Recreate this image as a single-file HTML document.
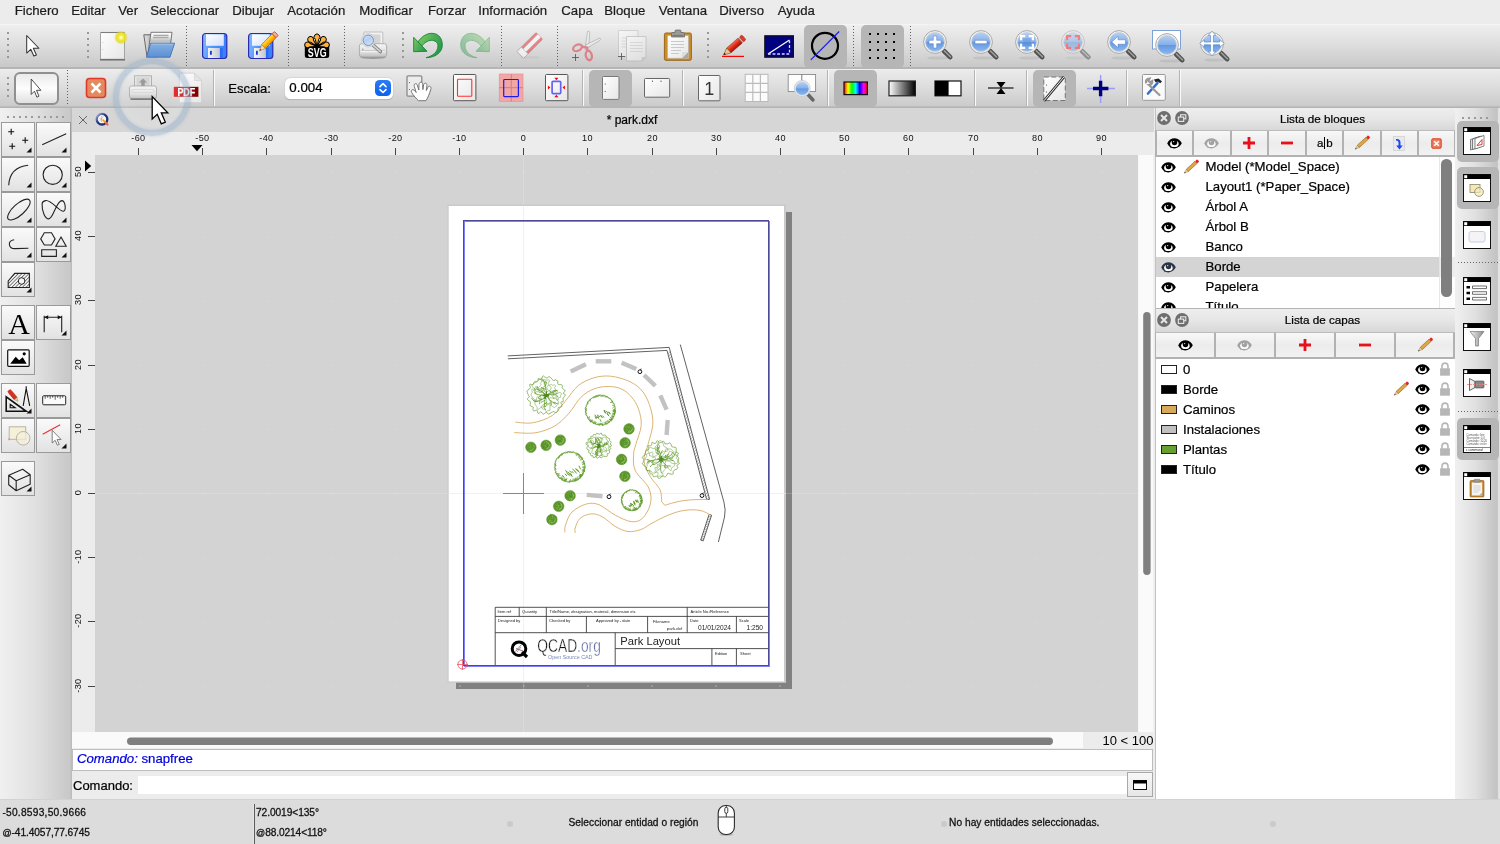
<!DOCTYPE html>
<html lang="es"><head><meta charset="utf-8"><title>QCAD - park.dxf</title>
<style>
html,body{margin:0;padding:0}
html{overflow:hidden;width:1500px;height:844px}
body{will-change:transform;width:1500px;height:844px;position:relative;overflow:hidden;background:#ececec;font-family:"Liberation Sans",sans-serif;font-size:13px;color:#000;-webkit-text-stroke:.22px currentColor}
.ic{position:absolute;display:block;overflow:visible}
#menubar{position:absolute;left:0;top:0;width:1500px;height:24px;background:#ececec}
#menubar span{position:absolute;top:3px;font-size:13.200px;line-height:15px;color:#1c1c1c;white-space:nowrap}
#tb1{position:absolute;left:0;top:24px;width:1500px;height:44.500px;background:linear-gradient(#f7f7f7 0,#eeeeee 1.500px,#dddddd 22px,#c9c9c9 42.500px,#b5b5b5 43.500px,#b5b5b5 44.500px)}
#tb2{position:absolute;left:0;top:68.500px;width:1500px;height:39px;background:linear-gradient(#f2f2f2 0,#ebebeb 1.200px,#dcdcdc 19px,#cbcbcb 37px,#b4b4b4 37.800px,#b4b4b4 39px)}
.vsep{position:absolute;width:1px;background:repeating-linear-gradient(#626262 0,#626262 1px,transparent 1px,transparent 3px)}
.ssep{position:absolute;width:1px;background:#fafafa;box-shadow:-1px 0 0 #b4b4b4}
.gd{position:absolute;width:2px;height:2px;background:#989898}
.gd2{position:absolute;width:2px;height:2px;background:#9a9a9a}
.hl{position:absolute;background:#b6b6b6;border-radius:5px}
#selbtn{position:absolute;left:14px;top:72px;width:45px;height:33px;box-sizing:border-box;border:2px solid #909090;border-radius:6px;background:linear-gradient(#eaeaea,#fdfdfd 50%,#e0e0e0)}
.lbl{position:absolute;font-size:13px;line-height:16px;white-space:nowrap}
#combo{position:absolute;left:284.500px;top:77.500px;width:108.500px;height:21px;background:#fff;border-radius:5.500px;box-shadow:0 0 0 .5px #cfcfcf,0 .5px 1px rgba(0,0,0,.25)}
#combo span{position:absolute;left:4.800px;top:2px;font-size:13.300px;line-height:16px}
#combobtn{position:absolute;right:2px;top:2.500px;width:16px;height:16px;border-radius:4.500px;background:linear-gradient(#2c7bf6,#0a62ee)}
#combobtn svg{display:block}
#left{position:absolute;left:0;top:108px;width:72px;height:691px;background:linear-gradient(90deg,#f0f0f0,#e0e0e0 50%,#c8c8c8 97%,#b8b8b8 100%)}
.tbtn{position:absolute;width:34.400px;height:34.400px;border:1px solid #9a9a9a;box-sizing:border-box;background:linear-gradient(#fafafa,#ececec 60%,#e2e2e2)}
.tbtn svg{display:block}
#tabbar{position:absolute;left:72px;top:108px;width:1082px;height:24px;background:#d6d6d6}
#tabbar span{position:absolute;left:0;width:1120px;top:5px;text-align:center;font-size:12px;line-height:14px}
#cv{position:absolute;display:block}
#cmdhist{position:absolute;left:72px;top:748.500px;width:1081px;height:22.500px;box-sizing:border-box;border:1px solid #bdbdbd;background:#fff;color:#0000e0;font-size:13.200px;line-height:17px;padding-left:4px;white-space:nowrap}
#cmdrow{position:absolute;left:72px;top:772px;width:1082px;height:27px;background:#ececec}
#cmdrow span{position:absolute;left:1px;top:5.500px;font-size:13px;line-height:16px}
#cmdin{position:absolute;left:66px;top:4px;width:989px;height:18px;background:#fff}
#cmdbtn{position:absolute;left:1055px;top:.3px;width:24.300px;height:23.200px;border:1px solid #a8a8a8;box-sizing:content-box;background:linear-gradient(#f8f8f8,#e6e6e6)}
#cmdbtn svg{position:absolute;left:5.300px;top:6.600px}
#status{position:absolute;left:0;top:798.600px;width:1500px;height:45.400px;background:#dcdcdc;border-top:1px solid #d2d2d2;box-sizing:border-box}
#status span{position:absolute;font-size:10.200px;line-height:12px;letter-spacing:.03px;white-space:nowrap;color:#111;-webkit-text-stroke:.28px #111;margin-top:-1.700px}
#status span.n{letter-spacing:.38px}
#status em{font-style:normal;font-size:9px;letter-spacing:0}
#status .sl{position:absolute;top:4px;width:1px;height:42px;background:#5a5a5a;box-shadow:-1px 0 0 #e6e6e6}
#status .dot{position:absolute;top:21px;width:6px;height:6px;border-radius:3px;background:#cacaca}
#rpanel{position:absolute;left:1155px;top:108px;width:299.500px;height:691px;background:#fff;border-left:1.100px solid #c2c2c2;box-sizing:border-box}
.ptitle{position:absolute;left:1155.500px;width:299px;height:22.500px;background:linear-gradient(#eeeeee,#e6e6e6 50%,#d8d8d8);border-bottom:1px solid #bcbcbc;box-sizing:border-box}
.ptitle span{position:absolute;left:36px;width:262px;text-align:center;top:4px;font-size:11.700px;line-height:14px}
.pbar{position:absolute;left:1155px;width:299.500px;height:27px;background:#b2b2b2}
.pbtn{position:absolute;height:24px;box-sizing:border-box;background:linear-gradient(#f8f8f8,#ececec 50%,#f2f2f2)}
.ab{position:absolute;width:18px;font-size:11.500px;line-height:15px;white-space:nowrap;letter-spacing:.2px}
.ab i{display:inline-block;width:1px;height:12px;background:#000;vertical-align:-2px;margin:0 .8px}
#blist{position:absolute;left:1155.500px;top:156.500px;width:299px;height:152.500px;background:#fff;overflow:hidden;border-bottom:1px solid #b4b4b4;box-sizing:border-box}
#blist2{position:absolute;left:1155.500px;top:156.500px;width:299px;height:151.500px;overflow:hidden}
.row{position:absolute;left:0;width:282px;height:20px}
.row.sel{background:#d4d4d4;width:299px}
.row span{position:absolute;top:2.600px;font-size:13.200px;line-height:16px;white-space:nowrap}
.vtrack{position:absolute;right:0;top:0;width:16px;height:152px;background:rgba(252,252,252,.62);border-left:1px solid rgba(225,225,225,.8);box-sizing:border-box}
.vthumb{position:absolute;left:285.800px;top:2.700px;width:10.400px;height:137.500px;border-radius:5.200px;background:#7f7f7f}
#llist{position:absolute;left:1155.500px;top:358.500px;width:299px;height:439.500px;background:#fff}
.sw{position:absolute;left:5.500px;top:5.800px;width:14px;height:7.300px;border:1px solid #222;box-sizing:content-box}
#fr{position:absolute;left:1454.500px;top:108px;width:45.500px;height:691px;background:linear-gradient(90deg,#f0f0f0,#e0e0e0 45%,#c2c2c2 94%,#e4e4e4 97%)}
.hdot{position:absolute;height:1px;background:repeating-linear-gradient(90deg,#666 0,#666 1px,transparent 1px,transparent 3px)}
#ring{position:absolute;left:112.500px;top:58px;width:78px;height:78px;border-radius:50%;box-sizing:border-box;border:6.200px solid rgba(128,158,190,.38);background:radial-gradient(circle,rgba(255,255,255,.10) 40%,rgba(240,245,250,.30) 100%);box-shadow:0 0 2.500px 1px rgba(135,162,192,.22),inset 0 0 3px 1px rgba(135,162,192,.22)}
</style></head>
<body>
<svg width="0" height="0" style="position:absolute"><defs>
<linearGradient id="paper" x1="0" y1="0" x2="1" y2="1"><stop offset="0" stop-color="#ffffff"/><stop offset="1" stop-color="#e6e6e6"/></linearGradient>
<radialGradient id="glow"><stop offset="0" stop-color="#ffffff"/><stop offset=".12" stop-color="#fffbd0"/><stop offset=".38" stop-color="#f4ea28"/><stop offset=".7" stop-color="#e8dc20" stop-opacity=".85"/><stop offset="1" stop-color="#e0d420" stop-opacity="0"/></radialGradient>
<linearGradient id="fback" x1="0" y1="0" x2="1" y2="0"><stop offset="0" stop-color="#e4e4e4"/><stop offset="1" stop-color="#8c8c8c"/></linearGradient>
<linearGradient id="fpaper" x1="0" y1="0" x2="0" y2="1"><stop offset="0" stop-color="#ffffff"/><stop offset=".22" stop-color="#e8e8e8"/><stop offset=".38" stop-color="#bcbcbc"/><stop offset=".55" stop-color="#f2f2f2"/><stop offset="1" stop-color="#d8d8d8"/></linearGradient>
<linearGradient id="folder" x1="0" y1="0" x2="0" y2="1"><stop offset="0" stop-color="#86b0e0"/><stop offset="1" stop-color="#5a90d6"/></linearGradient>
<linearGradient id="floppy" x1="0" y1="0" x2="1" y2="0.2"><stop offset="0" stop-color="#8ac0ff"/><stop offset=".5" stop-color="#4c94ff"/><stop offset="1" stop-color="#3a80fc"/></linearGradient>
<linearGradient id="flabel" x1="0" y1="0" x2="1" y2="1"><stop offset="0" stop-color="#ffffff"/><stop offset="1" stop-color="#d4e0f8"/></linearGradient>
<linearGradient id="fmetal" x1="0" y1="0" x2="1" y2="0"><stop offset="0" stop-color="#f4f4f4"/><stop offset="1" stop-color="#c4c8d4"/></linearGradient>
<linearGradient id="pencil" x1="0" y1="0" x2="1" y2="0"><stop offset="0" stop-color="#ffe060"/><stop offset=".45" stop-color="#ffc000"/><stop offset="1" stop-color="#f88a00"/></linearGradient>
<linearGradient id="pencilr" x1="0" y1="0" x2="1" y2="0"><stop offset="0" stop-color="#f86a50"/><stop offset=".5" stop-color="#e02a1a"/><stop offset="1" stop-color="#a01408"/></linearGradient>
<linearGradient id="printer" x1="0" y1="0" x2="0" y2="1"><stop offset="0" stop-color="#f4f4f4"/><stop offset=".6" stop-color="#e2e2e2"/><stop offset="1" stop-color="#bdbdbd"/></linearGradient>
<linearGradient id="green" x1="0" y1="0" x2="1" y2=".6"><stop offset="0" stop-color="#86cc62"/><stop offset=".5" stop-color="#52b058"/><stop offset="1" stop-color="#2a9a48"/></linearGradient>
<linearGradient id="lens" x1="0" y1="0" x2="0" y2="1"><stop offset="0" stop-color="#b6d0f2"/><stop offset=".48" stop-color="#86b0ea"/><stop offset=".52" stop-color="#6498de"/><stop offset="1" stop-color="#8cb8f0"/></linearGradient>
<linearGradient id="lens2" x1="0" y1="0" x2=".6" y2="1"><stop offset="0" stop-color="#dce8f8"/><stop offset=".5" stop-color="#b4cef0"/><stop offset="1" stop-color="#cfe0f6"/></linearGradient>
<linearGradient id="pdfred" x1="0" y1="0" x2="1" y2="0"><stop offset="0" stop-color="#e01010"/><stop offset="1" stop-color="#7a0000"/></linearGradient>
<linearGradient id="rainbow" x1="0" y1="0" x2="1" y2="0"><stop offset="0" stop-color="#ff0000"/><stop offset=".17" stop-color="#ffff00"/><stop offset=".34" stop-color="#00ff00"/><stop offset=".5" stop-color="#00ffff"/><stop offset=".67" stop-color="#0000ff"/><stop offset=".84" stop-color="#ff00ff"/><stop offset="1" stop-color="#ff0000"/></linearGradient>
<linearGradient id="gray" x1="0" y1="0" x2="1" y2="0"><stop offset="0" stop-color="#ffffff"/><stop offset="1" stop-color="#000000"/></linearGradient>
<linearGradient id="funnel" x1="0" y1="0" x2="1" y2="0"><stop offset="0" stop-color="#f0f0f0"/><stop offset="1" stop-color="#8a8a8a"/></linearGradient>
<linearGradient id="qring" x1="0" y1="0" x2="1" y2="1"><stop offset="0" stop-color="#a8b4d8"/><stop offset=".45" stop-color="#223680"/><stop offset="1" stop-color="#1a2c74"/></linearGradient>
<pattern id="hatch" width="2.500" height="2.500" patternUnits="userSpaceOnUse" patternTransform="rotate(-45)"><rect width="2.500" height="2.500" fill="#f4f4f4"/><path d="M0 1.250 h2.500" stroke="#333" stroke-width=".6"/></pattern>
</defs></svg>

<div id="menubar"><span style="left:14.7px">Fichero</span><span style="left:71.3px">Editar</span><span style="left:118.3px">Ver</span><span style="left:150.3px">Seleccionar</span><span style="left:232.3px">Dibujar</span><span style="left:287.3px">Acotación</span><span style="left:359.3px">Modificar</span><span style="left:428.0px">Forzar</span><span style="left:478.3px">Información</span><span style="left:561.3px">Capa</span><span style="left:604.3px">Bloque</span><span style="left:658.7px">Ventana</span><span style="left:719.3px">Diverso</span><span style="left:777.7px">Ayuda</span></div>

<div id="tb1"></div>
<div class="gd" style="left:7px;top:32px"></div><div class="gd" style="left:7px;top:38px"></div><div class="gd" style="left:7px;top:44px"></div><div class="gd" style="left:7px;top:50px"></div><div class="gd" style="left:7px;top:56px"></div><svg class="ic" style="left:25px;top:34px" width="16" height="24" viewBox="0 0 16 24" ><path d="M0 0 L0 15.5 L3.6 12.2 L6.3 18.2 L8.6 17.2 L5.9 11.3 L10.8 11.3 Z" fill="#fff" stroke="#333" stroke-width=".9" stroke-linejoin="round" transform="translate(1.7,1.5) scale(1.13)"/></svg><div class="gd" style="left:87px;top:32px"></div><div class="gd" style="left:87px;top:38px"></div><div class="gd" style="left:87px;top:44px"></div><div class="gd" style="left:87px;top:50px"></div><div class="gd" style="left:87px;top:56px"></div><svg class="ic" style="left:98px;top:30px" width="30" height="32" viewBox="0 0 30 32" ><rect x="2.500" y="2.500" width="24" height="27" rx="1" fill="url(#paper)" stroke="#a4a4a4" stroke-width="1"/><path d="M2.500 2.500 h24" stroke="#7e7e7e" stroke-width="1.100"/><path d="M2 29.700 h25" stroke="#707070" stroke-width="1.700"/><circle cx="4.800" cy="12.500" r=".5" fill="#bbb"/><circle cx="4.800" cy="19.500" r=".5" fill="#bbb"/><circle cx="23" cy="7.500" r="7" fill="url(#glow)"/></svg><svg class="ic" style="left:142px;top:30px" width="34" height="30" viewBox="0 0 34 30" ><path d="M1.800 4.800 h7.500 l1.300 1.700 h6 l-1 20.300 h-10.600 z" fill="url(#fback)" stroke="#5a5a5a" stroke-width=".9" stroke-linejoin="round"/><path d="M9 2.300 h21 l-2.800 23 h-21.500 z" fill="url(#fpaper)" stroke="#6a6a6a" stroke-width=".9" stroke-linejoin="round"/><path d="M11.500 5.500 h15 M11 7.700 h15.500" stroke="#a8a8a8" stroke-width="1.300"/><path d="M8.600 13.200 L32.600 13.200 L28 27.200 L4.500 27.200 Z" fill="url(#folder)" stroke="#3f6fb4" stroke-width=".9" stroke-linejoin="round"/><path d="M9.300 14.200 L31.300 14.200" stroke="#a8c8ee" stroke-width=".8"/></svg><div class="vsep" style="left:186px;top:26px;height:40px"></div><svg class="ic" style="left:201px;top:31px" width="28" height="30" viewBox="0 0 28 30" ><rect x="1.600" y="2.500" width="24.200" height="25" rx="3" fill="url(#floppy)" stroke="#2a2aae" stroke-width="1.200"/><rect x="5" y="3.300" width="17.800" height="11.500" fill="url(#flabel)"/><rect x="19" y="17" width="2.600" height="10" fill="#2a6cf4"/><rect x="7" y="17" width="11.800" height="10" fill="url(#fmetal)"/><rect x="9" y="19.700" width="1.800" height="4" rx=".5" fill="#1038d8"/><rect x="23.300" y="4.500" width="1" height="1.200" fill="#3a5ac0"/></svg><svg class="ic" style="left:247px;top:31px" width="28" height="30" viewBox="0 0 28 30" ><rect x="1.600" y="2.500" width="24.200" height="25" rx="3" fill="url(#floppy)" stroke="#2a2aae" stroke-width="1.200"/><rect x="5" y="3.300" width="17.800" height="11.500" fill="url(#flabel)"/><rect x="19" y="17" width="2.600" height="10" fill="#2a6cf4"/><rect x="7" y="17" width="11.800" height="10" fill="url(#fmetal)"/><rect x="9" y="19.700" width="1.800" height="4" rx=".5" fill="#1038d8"/><rect x="23.300" y="4.500" width="1" height="1.200" fill="#3a5ac0"/></svg><svg class="ic" style="left:256.5px;top:29px" width="22" height="26" viewBox="0 0 22 26" ><g transform="rotate(44 11 13) translate(0,-.5) scale(1,1.03)"><rect x="8.2" y="1.5" width="5.6" height="3.2" rx="1" fill="#f0b0a0" stroke="#c83018" stroke-width=".7"/><rect x="8.2" y="4.7" width="5.6" height="14.5" fill="url(#pencil)" stroke="#b04818" stroke-width=".6"/><path d="M8.2 19.2 L11 25 L13.8 19.2 Z" fill="#f3d9a8" stroke="#a05a00" stroke-width=".4"/><path d="M10.2 23.3 L11 25 L11.8 23.3 Z" fill="#222"/></g></svg><div class="vsep" style="left:288px;top:26px;height:40px"></div><svg class="ic" style="left:303px;top:32px" width="28" height="28" viewBox="0 0 28 28" ><path d="M4.300 11.800 h19.400 q2.500 0 2.500 2.500 v9.300 q0 2.500 -2.500 2.500 h-19.400 q-2.500 0 -2.500 -2.500 v-9.300 q0 -2.500 2.500 -2.500 z" fill="#000"/><g fill="#ffb13b" stroke="#000" stroke-width="1" stroke-linejoin="round"><g transform="rotate(-80 14 14.500)"><path d="M14 14.500 L12.300 7.300 a2.900 2.900 0 1 1 3.400 0 Z"/></g><g transform="rotate(80 14 14.500)"><path d="M14 14.500 L12.300 7.300 a2.900 2.900 0 1 1 3.400 0 Z"/></g><g transform="rotate(-42 14 14.500)"><path d="M14 14.500 L12.300 7.300 a2.900 2.900 0 1 1 3.400 0 Z"/></g><g transform="rotate(42 14 14.500)"><path d="M14 14.500 L12.300 7.300 a2.900 2.900 0 1 1 3.400 0 Z"/></g><g transform="rotate(0 14 14.500)"><path d="M14 14.500 L12.300 7.300 a2.900 2.900 0 1 1 3.400 0 Z"/></g></g><path d="M6.500 14.800 h15 v3 h-15 z" fill="#000"/><circle cx="14" cy="14.300" r="2.200" fill="#000"/><text x="14.200" y="24.700" text-anchor="middle" font-family="Liberation Sans,sans-serif" font-weight="bold" font-size="13" fill="#fff" textLength="18.700" lengthAdjust="spacingAndGlyphs">SVG</text></svg><div class="vsep" style="left:344px;top:26px;height:40px"></div><svg class="ic" style="left:357px;top:30px" width="32" height="30" viewBox="0 0 32 30" ><ellipse cx="16" cy="27.300" rx="12.500" ry="1.700" fill="#8a8a8a" opacity=".8"/><rect x="6.800" y="2" width="19" height="13" rx=".8" fill="#f2f2f2" stroke="#b4b4b4" stroke-width=".8"/><rect x="13.500" y="4.500" width="10" height="9" fill="#d4d4d4"/><path d="M2.400 16 q0 -2.300 2.300 -2.300 h22.600 q2.300 0 2.300 2.300 v8.700 q0 2.300 -2.300 2.300 h-22.600 q-2.300 0 -2.300 -2.300 z" fill="url(#printer)" stroke="#a2a2a2" stroke-width=".8"/><path d="M4 20.700 h24" stroke="#c4c4c4" stroke-width="1"/><path d="M4 21.600 h24" stroke="#fafafa" stroke-width=".8"/><circle cx="5.800" cy="19.200" r=".6" fill="#777"/><line x1="16" y1="15" x2="23.300" y2="21.500" stroke="#7a7a7a" stroke-width="3.600" stroke-linecap="round"/><line x1="16" y1="15" x2="23.300" y2="21.500" stroke="#d0d0d0" stroke-width="1.800" stroke-linecap="round"/><circle cx="11.300" cy="10.300" r="6.700" fill="#e9e9e9" stroke="#bdbdbd" stroke-width=".6"/><circle cx="11.300" cy="10.300" r="5.200" fill="url(#lens2)" stroke="#5a8ad2" stroke-width=".9"/></svg><div class="gd" style="left:402px;top:32px"></div><div class="gd" style="left:402px;top:38px"></div><div class="gd" style="left:402px;top:44px"></div><div class="gd" style="left:402px;top:50px"></div><div class="gd" style="left:402px;top:56px"></div><svg class="ic" style="left:412px;top:31px" width="32" height="30" viewBox="0 0 32 30" ><path d="M6 11 C10 5 15 2.300 20 2.300 C27 2.500 30.500 8 30.300 14.300 C30 22 23 26.500 14 26.700 C21 25 25.800 21 26 15 C26 11.500 23 9.300 19.300 9.300 C15.500 9.500 12 12 9.700 15 Z" fill="url(#green)" stroke="#12853a" stroke-width=".9" stroke-linejoin="round"/><path d="M1.700 6.300 L1.700 20.700 L15 20.300 Z" fill="url(#green)" stroke="#12853a" stroke-width=".9" stroke-linejoin="round"/></svg><svg class="ic" style="left:459px;top:31px" width="32" height="30" viewBox="0 0 32 30" ><g opacity=".42" transform="translate(32,0) scale(-1,1)"><path d="M6 11 C10 5 15 2.300 20 2.300 C27 2.500 30.500 8 30.300 14.300 C30 22 23 26.500 14 26.700 C21 25 25.800 21 26 15 C26 11.500 23 9.300 19.300 9.300 C15.500 9.500 12 12 9.700 15 Z" fill="url(#green)" stroke="#12853a" stroke-width=".9" stroke-linejoin="round"/><path d="M1.700 6.300 L1.700 20.700 L15 20.300 Z" fill="url(#green)" stroke="#12853a" stroke-width=".9" stroke-linejoin="round"/></g></svg><div class="vsep" style="left:501px;top:26px;height:40px"></div><svg class="ic" style="left:515px;top:31px" width="30" height="30" viewBox="0 0 30 30" ><ellipse cx="15" cy="26.5" rx="10" ry="1.6" fill="#c8c8c8" opacity=".8"/><g transform="rotate(-45 15 14.500)" opacity=".6"><rect x="1.5" y="9.5" width="27" height="9.5" rx="1.2" fill="#e04a55" stroke="#b33" stroke-width=".5"/><rect x="7" y="12.2" width="21.5" height="4" fill="#fff"/><rect x="1.5" y="9.5" width="6.2" height="9.5" fill="#fff" stroke="#999" stroke-width=".6"/></g></svg><div class="vsep" style="left:557px;top:26px;height:40px"></div><svg class="ic" style="left:570px;top:29px" width="32" height="33" viewBox="0 0 32 33" ><g opacity=".62"><path d="M17.5 2.5 q1.8 -1 2.2 1 L18.6 19 L15 20.5 Z" fill="#f4f4f4" stroke="#888" stroke-width=".7"/><path d="M30 9 q1.2 1.5 -.4 2.6 L17 19 L15.2 16.2 Z" fill="#f4f4f4" stroke="#888" stroke-width=".7"/><ellipse cx="7.5" cy="18.8" rx="4.6" ry="3" transform="rotate(-25 7.5 18.8)" fill="none" stroke="#e0525c" stroke-width="2.3"/><ellipse cx="18.8" cy="26.5" rx="3" ry="4.8" transform="rotate(-12 18.8 26.5)" fill="none" stroke="#e0525c" stroke-width="2.3"/><path d="M11 17.5 L17 18.5 L17.5 22" fill="none" stroke="#e0525c" stroke-width="2.3"/></g><path d="M2 28.500 h7 M5.500 25 v7" stroke="#5a5a5a" stroke-width=".9"/></svg><svg class="ic" style="left:616px;top:29px" width="32" height="33" viewBox="0 0 32 33" ><g opacity=".62"><path d="M2.5 1.5 h19.5 v21.5 l-4.5 4.5 h-15 z" fill="url(#paper)" stroke="#b5b5b5" stroke-width=".8"/><path d="M5.5 9 h13 M5.5 12 h13 M5.5 15 h13 M5.5 18 h9" stroke="#d0d0d0" stroke-width="1"/><path d="M10.5 7.5 h19.5 v21 l-4 3.5 h-15.5 z" fill="url(#paper)" stroke="#aaa" stroke-width=".8"/><path d="M14 13.5 h13 M14 16.5 h13 M14 19.500 h13 M14 22.5 h13" stroke="#d0d0d0" stroke-width="1"/><path d="M30 28.500 l-4 3.5 v-3.500 z" fill="#ccc" stroke="#aaa" stroke-width=".5"/></g><path d="M2 27.500 h7 M5.500 24 v7" stroke="#5a5a5a" stroke-width=".9"/></svg><svg class="ic" style="left:662px;top:29px" width="32" height="33" viewBox="0 0 32 33" ><rect x="2.400" y="4" width="27" height="27.300" rx="1.500" fill="#cc8c28" stroke="#94600e" stroke-width=".9"/><path d="M5.500 6.500 h21 v22.800 h-21 z" fill="url(#paper)" stroke="#b0b0b0" stroke-width=".6"/><path d="M9 12.5 h13 M9 15.5 h13 M9 18.5 h13 M9 21.5 h10 M9 24.5 h8" stroke="#c9c9c9" stroke-width="1.1"/><path d="M26 23 v6 h-6 z" fill="#aaa"/><path d="M20 29 l6 -6 h-6 z" fill="#ddd"/><path d="M9.5 8 v-3.500 q0 -1 1 -1 h2.500 v-1.500 q0 -1 1 -1 h4 q1 0 1 1 v1.500 h2.500 q1 0 1 1 v3.500 z" fill="#9a9a92" stroke="#666" stroke-width=".7"/><rect x="10.500" y="6" width="11" height="1.4" fill="#777"/></svg><div class="gd" style="left:707px;top:32px"></div><div class="gd" style="left:707px;top:38px"></div><div class="gd" style="left:707px;top:44px"></div><div class="gd" style="left:707px;top:50px"></div><div class="gd" style="left:707px;top:56px"></div><svg class="ic" style="left:720px;top:32px" width="26" height="27" viewBox="0 0 26 27" ><path d="M2 24.4 h22" stroke="#f00" stroke-width="1.2"/><g transform="translate(0,2.800) rotate(49 13 12)"><rect x="9.8" y="-2.500" width="6.4" height="3.600" rx="1.400" fill="#e03a2a" stroke="#8a1a10" stroke-width=".5"/><rect x="9.8" y="1.100" width="6.4" height="1.400" fill="#bbb"/><rect x="9.8" y="2.500" width="6.4" height="15" fill="url(#pencilr)" stroke="#7a1a0a" stroke-width=".5"/><path d="M9.8 17.500 L13 24.500 L16.200 17.500 Z" fill="#e8c48a" stroke="#6a3a10" stroke-width=".5"/><path d="M12 22.300 L13 24.500 L14 22.300 Z" fill="#111"/></g></svg><svg class="ic" style="left:763px;top:34px" width="32" height="25" viewBox="0 0 32 25" ><rect x="1.8" y="1.800" width="28.6" height="21.4" fill="#000080" stroke="#111" stroke-width="1.200"/><path d="M5 20 L26.500 6" stroke="#fff" stroke-width="1.300"/><path d="M5 20 H26.500 V6" fill="none" stroke="#d8d8ff" stroke-width="1.300" stroke-dasharray="2.800 1.800"/></svg><div class="hl" style="left:804px;top:25px;width:42.5px;height:43px"></div><svg class="ic" style="left:808px;top:30px" width="34" height="32" viewBox="0 0 34 32" ><circle cx="17" cy="15.800" r="13" fill="none" stroke="#000" stroke-width="2.200"/><path d="M2.800 29.800 L31.200 1.500" stroke="#1414ff" stroke-width="1.100"/></svg><div class="vsep" style="left:853px;top:26px;height:40px"></div><div class="hl" style="left:861px;top:25px;width:43px;height:43px"></div><svg class="ic" style="left:865px;top:30px" width="34" height="32" viewBox="0 0 34 32" ><rect x="4" y="3" width="2" height="2" fill="#000"/><rect x="4" y="11" width="2" height="2" fill="#000"/><rect x="4" y="19" width="2" height="2" fill="#000"/><rect x="4" y="27" width="2" height="2" fill="#000"/><rect x="12" y="3" width="2" height="2" fill="#000"/><rect x="12" y="11" width="2" height="2" fill="#000"/><rect x="12" y="19" width="2" height="2" fill="#000"/><rect x="12" y="27" width="2" height="2" fill="#000"/><rect x="20" y="3" width="2" height="2" fill="#000"/><rect x="20" y="11" width="2" height="2" fill="#000"/><rect x="20" y="19" width="2" height="2" fill="#000"/><rect x="20" y="27" width="2" height="2" fill="#000"/><rect x="28" y="3" width="2" height="2" fill="#000"/><rect x="28" y="11" width="2" height="2" fill="#000"/><rect x="28" y="19" width="2" height="2" fill="#000"/><rect x="28" y="27" width="2" height="2" fill="#000"/></svg><div class="vsep" style="left:910px;top:26px;height:40px"></div><svg class="ic" style="left:921.3px;top:27.6px" width="34" height="34" viewBox="0 0 34 34" ><g><ellipse cx="17" cy="30" rx="11" ry="1.600" fill="#9a9a9a" opacity=".28"/><line x1="23" y1="23" x2="29.200" y2="29.200" stroke="#505050" stroke-width="4.700" stroke-linecap="round"/><line x1="23.300" y1="22.900" x2="29.500" y2="28.900" stroke="#9c9c9c" stroke-width="1.500" stroke-linecap="round"/><circle cx="14" cy="14" r="11.400" fill="#f1f1ed" stroke="#a2a2a2" stroke-width=".9"/><circle cx="14" cy="14" r="9.500" fill="url(#lens)" stroke="#c9ced8" stroke-width=".8"/><path d="M12.300 8 h3.400 v4.300 h4.300 v3.400 h-4.300 v4.300 h-3.400 v-4.300 h-4.300 v-3.400 h4.300 z" fill="#fff" stroke="#4a78c0" stroke-width=".5"/></g></svg><svg class="ic" style="left:967.3px;top:27.6px" width="34" height="34" viewBox="0 0 34 34" ><g><ellipse cx="17" cy="30" rx="11" ry="1.600" fill="#9a9a9a" opacity=".28"/><line x1="23" y1="23" x2="29.200" y2="29.200" stroke="#505050" stroke-width="4.700" stroke-linecap="round"/><line x1="23.300" y1="22.900" x2="29.500" y2="28.900" stroke="#9c9c9c" stroke-width="1.500" stroke-linecap="round"/><circle cx="14" cy="14" r="11.400" fill="#f1f1ed" stroke="#a2a2a2" stroke-width=".9"/><circle cx="14" cy="14" r="9.500" fill="url(#lens)" stroke="#c9ced8" stroke-width=".8"/><path d="M8 12.300 h12 v3.400 h-12 z" fill="#fff" stroke="#4a78c0" stroke-width=".5"/></g></svg><svg class="ic" style="left:1013.3px;top:27.6px" width="34" height="34" viewBox="0 0 34 34" ><g><ellipse cx="17" cy="30" rx="11" ry="1.600" fill="#9a9a9a" opacity=".28"/><line x1="23" y1="23" x2="29.200" y2="29.200" stroke="#505050" stroke-width="4.700" stroke-linecap="round"/><line x1="23.300" y1="22.900" x2="29.500" y2="28.900" stroke="#9c9c9c" stroke-width="1.500" stroke-linecap="round"/><circle cx="14" cy="14" r="11.400" fill="#f1f1ed" stroke="#a2a2a2" stroke-width=".9"/><circle cx="14" cy="14" r="9.500" fill="url(#lens)" stroke="#c9ced8" stroke-width=".8"/><rect x="10.200" y="10.200" width="7.600" height="7.600" fill="#4a7fd0" opacity=".28"/><path d="M8.100 12.200 v-4.100 h4.100 M15.800 8.100 h4.100 v4.100 M19.900 15.800 v4.100 h-4.100 M12.200 19.900 h-4.100 v-4.100" fill="none" stroke="#fff" stroke-width="2.100"/></g></svg><svg class="ic" style="left:1059.3px;top:27.6px" width="34" height="34" viewBox="0 0 34 34" ><g opacity="0.55"><ellipse cx="17" cy="30" rx="11" ry="1.600" fill="#9a9a9a" opacity=".28"/><line x1="23" y1="23" x2="29.200" y2="29.200" stroke="#505050" stroke-width="4.700" stroke-linecap="round"/><line x1="23.300" y1="22.900" x2="29.500" y2="28.900" stroke="#9c9c9c" stroke-width="1.500" stroke-linecap="round"/><circle cx="14" cy="14" r="11.400" fill="#f1f1ed" stroke="#a2a2a2" stroke-width=".9"/><circle cx="14" cy="14" r="9.500" fill="url(#lens)" stroke="#c9ced8" stroke-width=".8"/><path d="M8.100 12.200 v-4.100 h4.100 M15.800 8.100 h4.100 v4.100 M19.900 15.800 v4.100 h-4.100 M12.200 19.900 h-4.100 v-4.100" fill="none" stroke="#ff2a2a" stroke-width="2.100"/></g></svg><svg class="ic" style="left:1105.3px;top:27.6px" width="34" height="34" viewBox="0 0 34 34" ><g><ellipse cx="17" cy="30" rx="11" ry="1.600" fill="#9a9a9a" opacity=".28"/><line x1="23" y1="23" x2="29.200" y2="29.200" stroke="#505050" stroke-width="4.700" stroke-linecap="round"/><line x1="23.300" y1="22.900" x2="29.500" y2="28.900" stroke="#9c9c9c" stroke-width="1.500" stroke-linecap="round"/><circle cx="14" cy="14" r="11.400" fill="#f1f1ed" stroke="#a2a2a2" stroke-width=".9"/><circle cx="14" cy="14" r="9.500" fill="url(#lens)" stroke="#c9ced8" stroke-width=".8"/><path d="M6.800 14 L13 8.300 V11.800 H20.500 V16.200 H13 V19.700 Z" fill="#fff" stroke="#4a78c0" stroke-width=".5"/></g></svg><svg class="ic" style="left:1151px;top:29px" width="32" height="20" viewBox="0 0 32 20" ><rect x="1.500" y="1.500" width="28" height="18.500" fill="#fff" stroke="#7da0d8" stroke-width="1"/></svg><svg class="ic" style="left:1152.6px;top:30.5px" width="34" height="34" viewBox="0 0 34 34" ><g><ellipse cx="17" cy="30" rx="11" ry="1.600" fill="#9a9a9a" opacity=".28"/><line x1="23" y1="23" x2="29.200" y2="29.200" stroke="#505050" stroke-width="4.700" stroke-linecap="round"/><line x1="23.300" y1="22.900" x2="29.500" y2="28.900" stroke="#9c9c9c" stroke-width="1.500" stroke-linecap="round"/><circle cx="14" cy="14" r="11.400" fill="#f1f1ed" stroke="#a2a2a2" stroke-width=".9"/><circle cx="14" cy="14" r="9.500" fill="url(#lens)" stroke="#c9ced8" stroke-width=".8"/></g></svg><svg class="ic" style="left:1198px;top:29.5px" width="34" height="34" viewBox="0 0 34 34" ><g><ellipse cx="17" cy="30" rx="11" ry="1.600" fill="#9a9a9a" opacity=".28"/><line x1="23" y1="23" x2="29.200" y2="29.200" stroke="#505050" stroke-width="4.700" stroke-linecap="round"/><line x1="23.300" y1="22.900" x2="29.500" y2="28.900" stroke="#9c9c9c" stroke-width="1.500" stroke-linecap="round"/><circle cx="14" cy="14" r="11.400" fill="#f1f1ed" stroke="#a2a2a2" stroke-width=".9"/><circle cx="14" cy="14" r="9.500" fill="url(#lens)" stroke="#c9ced8" stroke-width=".8"/><path transform="translate(14 14) scale(1.17) translate(-14 -14)" d="M14 3 l3.200 3.800 h-2 v5.500 h5.500 v-2 l3.800 3.200 l-3.800 3.200 v-2 h-5.500 v5.500 h2 l-3.200 3.800 l-3.200 -3.800 h2 v-5.500 h-5.500 v2 l-3.800 -3.200 l3.800 -3.200 v2 h5.500 v-5.500 h-2 z" fill="#fff" stroke="#4a78c0" stroke-width=".5"/></g></svg>
<div id="tb2"></div>
<div class="gd" style="left:7px;top:77px"></div><div class="gd" style="left:7px;top:83px"></div><div class="gd" style="left:7px;top:89px"></div><div class="gd" style="left:7px;top:95px"></div><div id="selbtn"></div><svg class="ic" style="left:30px;top:78px" width="14" height="22" viewBox="0 0 14 22" ><path d="M0 0 L0 15.5 L3.6 12.2 L6.3 18.2 L8.6 17.2 L5.9 11.3 L10.8 11.3 Z" fill="#fff" stroke="#333" stroke-width=".9" stroke-linejoin="round" transform="translate(1.200,1) scale(.9,1)"/></svg><div class="vsep" style="left:67px;top:70px;height:35px"></div><svg class="ic" style="left:85px;top:77px" width="22" height="22" viewBox="0 0 22 22" ><rect x="1.500" y="1.500" width="19" height="19" rx="3" fill="#e58a5c" stroke="#e0382c" stroke-width="1.600"/><path d="M6.500 6.500 L15.500 15.500 M15.500 6.500 L6.500 15.500" stroke="#fff" stroke-width="2.600" stroke-linecap="butt"/></svg><svg class="ic" style="left:128px;top:74px" width="30" height="28" viewBox="0 0 30 28" ><rect x="6.500" y="1.800" width="17" height="12" fill="#e2e2e2" stroke="#9a9a9a" stroke-width=".8"/><rect x="8.500" y="3.500" width="13" height="9" fill="#d0d0d0"/><path d="M15 4.500 l4 4 h-2.300 v3.500 h-3.400 v-3.500 h-2.300 z" fill="#8e8e8e"/><path d="M1.500 14 q0 -2 2 -2 h23 q2 0 2 2 v8.500 q0 2 -2 2 h-23 q-2 0 -2 -2 z" fill="url(#printer)" stroke="#9a9a9a" stroke-width=".8"/><rect x="4" y="15.800" width="22" height="2.200" rx=".6" fill="#fafafa" stroke="#aaa" stroke-width=".5"/><path d="M2.500 25.200 h25" stroke="#6a6a6a" stroke-width="1.500"/></svg><svg class="ic" style="left:172px;top:72px" width="32" height="32" viewBox="0 0 32 32" ><path d="M7.500 1.200 h15 l7 7 v22.300 h-22 z" fill="url(#paper)" stroke="#cfcfcf" stroke-width=".8"/><path d="M22.500 1.500 v7 h7 z" fill="#e4e4e4" stroke="#cfcfcf" stroke-width=".6"/><rect x="1.800" y="14.800" width="24.600" height="10" fill="url(#pdfred)"/><text x="14.300" y="23.800" text-anchor="middle" font-family="Liberation Sans,sans-serif" font-weight="bold" font-size="11" fill="#fff" stroke="#fff" stroke-width=".25" textLength="17.800" lengthAdjust="spacingAndGlyphs">PDF</text></svg><div class="ssep" style="left:213.5px;top:70px;height:36px"></div><div class="lbl" style="left:228.300px;top:81.300px;">Escala:</div><div id="combo"><span>0.004</span><div id="combobtn"><svg width="16" height="16" viewBox="0 0 16 16"><path d="M5 6.600 L8 3.700 L11 6.600 M5 9.600 L8 12.500 L11 9.600" fill="none" stroke="#fff" stroke-width="1.600" stroke-linecap="round" stroke-linejoin="round"/></svg></div></div><svg class="ic" style="left:405px;top:74px" width="28" height="29" viewBox="0 0 28 29" ><rect x="2" y="1.900" width="14.800" height="20.300" rx="1.200" fill="#ececec" stroke="#8a8a8a" stroke-width="1.300"/><circle cx="4.400" cy="8.600" r=".55" fill="#555"/><circle cx="4.400" cy="15.500" r=".55" fill="#555"/><path d="M13.500 26.700 C11 24.500 8.500 21.500 6.800 18.800 C5.800 17 6.500 15.500 8 15.700 C9.500 16 10.300 17.500 11.200 18.500 L9.300 12.500 C8.800 10.500 9.600 9.700 10.600 9.700 C11.800 9.700 12.300 10.700 12.600 12 L13.800 16 L14 10.500 C14 8.800 14.900 8.200 15.900 8.200 C17 8.200 17.600 9 17.700 10.500 L17.900 15.600 L18.600 10.800 C18.900 9.500 19.700 9 20.600 9.200 C21.700 9.500 22 10.500 21.900 11.800 L21.300 16.500 L22.800 13.500 C23.400 12.300 24.400 12 25.200 12.500 C26.100 13 26.200 14 25.800 15.300 C24.800 19 23 23.500 21 26.700 Z" fill="#fff" stroke="#707070" stroke-width=".95" stroke-linejoin="round"/></svg><svg class="ic" style="left:452.3px;top:73.3px" width="25.4" height="30.2" viewBox="0 0 25.4 30.2" ><rect x="1.500" y="1.500" width="22.4" height="26.2" rx="1" fill="url(#paper)" stroke="#555" stroke-width="1"/><rect x="5.500" y="6.300" width="14.300" height="16.900" rx=".8" fill="none" stroke="#ff3030" stroke-width="1.100"/></svg><svg class="ic" style="left:498px;top:73px" width="27" height="30" viewBox="0 0 27 30" ><rect x="1.200" y="1" width="23.800" height="27.500" fill="#f2a6a6" stroke="#e09090" stroke-width=".6"/><path d="M13.300 1 v27.500 M1.200 14.700 h23.800" stroke="#d98484" stroke-width="1.200"/><rect x="5.700" y="6.500" width="14.700" height="17.100" rx=".8" fill="none" stroke="#1c1cf0" stroke-width="1.200"/></svg><svg class="ic" style="left:544.3px;top:73.3px" width="25.4" height="30.2" viewBox="0 0 25.4 30.2" ><rect x="1.500" y="1.500" width="22.4" height="26.2" rx="1" fill="url(#paper)" stroke="#555" stroke-width="1"/><rect x="8.100" y="8.300" width="8.600" height="12.300" rx="1" fill="none" stroke="#6262fa" stroke-width="1.700"/><path d="M10.300 4.800 h4.200 l-2.100 2.400 z M10.300 24.200 h4.200 l-2.100 -2.400 z M3.900 12.400 v4.200 l2.400 -2.100 z M20.900 12.400 v4.200 l-2.400 -2.100 z" fill="#f00"/></svg><div class="ssep" style="left:583px;top:70px;height:36px"></div><div class="hl" style="left:588.8px;top:70.2px;width:42.9px;height:36.6px"></div><svg class="ic" style="left:600.7px;top:75.3px" width="19.5" height="26.9" viewBox="0 0 19.5 26.9" ><rect x="1.500" y="1.500" width="16.5" height="22.9" rx="1" fill="url(#paper)" stroke="#777" stroke-width="1"/><circle cx="4.200" cy="9" r=".6" fill="#444"/><circle cx="4.200" cy="16.500" r=".6" fill="#444"/></svg><svg class="ic" style="left:642.8px;top:77px" width="28.2" height="22.7" viewBox="0 0 28.2 22.7" ><rect x="1.500" y="1.500" width="25.2" height="18.7" rx="1" fill="url(#paper)" stroke="#666" stroke-width="1"/><circle cx="9.500" cy="4.200" r=".6" fill="#444"/><circle cx="18" cy="4.200" r=".6" fill="#444"/></svg><div class="ssep" style="left:683px;top:70px;height:36px"></div><svg class="ic" style="left:697.3px;top:74.2px" width="24.5" height="29.3" viewBox="0 0 24.5 29.3" ><rect x="1.500" y="1.500" width="21.5" height="25.3" rx="1" fill="url(#paper)" stroke="#666" stroke-width="1"/><text x="12.300" y="21.500" text-anchor="middle" font-family="Liberation Sans,sans-serif" font-size="18" fill="#333">1</text></svg><svg class="ic" style="left:743.5px;top:73px" width="26" height="30" viewBox="0 0 26 30" ><rect x="1.200" y="1.300" width="22.800" height="27.200" fill="#fbfbfb" stroke="#b9b9b9" stroke-width="1"/><path d="M8.800 1.300 v27.200 M16.400 1.300 v27.200 M1.200 10.400 h22.800 M1.200 19.400 h22.800" stroke="#bcbcbc" stroke-width="1.200"/></svg><svg class="ic" style="left:787px;top:73px" width="31" height="31" viewBox="0 0 31 31" ><rect x="1.200" y="1.500" width="13.700" height="17" fill="#fdfdfd" stroke="#8a8a8a" stroke-width=".9"/><rect x="14.900" y="1.500" width="13.700" height="17" fill="#fdfdfd" stroke="#8a8a8a" stroke-width=".9"/><line x1="20.500" y1="21" x2="26" y2="27" stroke="#666" stroke-width="3.400" stroke-linecap="round"/><circle cx="15.200" cy="15.500" r="8" fill="#e4e7ea" stroke="#c8c8c8" stroke-width=".8"/><circle cx="15.200" cy="15.500" r="6.500" fill="url(#lens)"/></svg><div class="ssep" style="left:828px;top:70px;height:36px"></div><div class="hl" style="left:834.2px;top:70.2px;width:42.5px;height:36.6px"></div><svg class="ic" style="left:843px;top:81px" width="26" height="15" viewBox="0 0 26 15" ><rect x="1" y="1" width="23.400" height="12.600" fill="url(#rainbow)" stroke="#111" stroke-width="1.200"/></svg><svg class="ic" style="left:888px;top:79.5px" width="29" height="17" viewBox="0 0 29 17" ><rect x="1" y="1" width="26.400" height="14.800" fill="url(#gray)" stroke="#222" stroke-width="1.200"/></svg><svg class="ic" style="left:934px;top:79.5px" width="29" height="17" viewBox="0 0 29 17" ><rect x="1" y="1" width="26" height="14.800" fill="#fff" stroke="#111" stroke-width="1.200"/><rect x="1" y="1" width="13.600" height="14.800" fill="#000"/></svg><div class="ssep" style="left:974.5px;top:70px;height:36px"></div><svg class="ic" style="left:986px;top:80px" width="30" height="17" viewBox="0 0 30 17" ><path d="M2 8 h25.500" stroke="#222" stroke-width="1.300"/><path d="M10.500 2 h9 l-4.500 6 z M10.500 14 h9 l-4.500 -6 z" fill="#000"/></svg><div class="ssep" style="left:1027px;top:70px;height:36px"></div><div class="hl" style="left:1032.8px;top:70.2px;width:42.9px;height:36.6px"></div><svg class="ic" style="left:1042px;top:75px" width="26" height="28" viewBox="0 0 26 28" ><rect x="1.800" y="2" width="21.500" height="23.500" fill="url(#paper)" stroke="#777" stroke-width="1" stroke-dasharray="5 2.500"/><circle cx="4.500" cy="10" r=".6" fill="#444"/><circle cx="4.500" cy="17" r=".6" fill="#444"/><path d="M2 25.800 L22 1.800" stroke="#333" stroke-width="2.800"/><path d="M2 25.800 L22 1.800" stroke="#eee" stroke-width="1"/></svg><svg class="ic" style="left:1086px;top:73.5px" width="30" height="30" viewBox="0 0 30 30" ><path d="M14.600 1 v28 M1 14.500 h28" stroke="#9a9aff" stroke-width="1.400"/><path d="M14.600 6.800 v15.400 M7 14.500 h15.400" stroke="#00007a" stroke-width="3.400"/></svg><div class="ssep" style="left:1126.7px;top:70px;height:36px"></div><svg class="ic" style="left:1141.2px;top:72.7px" width="25.8" height="29.8" viewBox="0 0 25.8 29.8" ><rect x="1.500" y="1.500" width="22.8" height="25.8" rx="1" fill="#fafafa" stroke="#999" stroke-width="1"/><path d="M7 20.500 L16.500 10" stroke="#2f6fd0" stroke-width="2.600" stroke-linecap="round"/><path d="M5 9.500 q-.5 -3.500 3.500 -4 l-1.200 2.300 l1.800 1.500 l2.200 -1.300 q.3 3.800 -3.300 4 L18.500 22" fill="none" stroke="#999" stroke-width="2.200" stroke-linecap="round"/><path d="M13 6.500 l4.500 -1 l3.500 3 l-1.800 1.800 l-2.200 -1.800 l-2.500 .8 z" fill="#222"/></svg><div class="ssep" style="left:1180px;top:70px;height:36px"></div>
<div id="left"></div><div class="gd2" style="left:7px;top:116px"></div><div class="gd2" style="left:13.1px;top:116px"></div><div class="gd2" style="left:19.2px;top:116px"></div><div class="gd2" style="left:25.3px;top:116px"></div><div class="gd2" style="left:31.4px;top:116px"></div><div class="gd2" style="left:37.5px;top:116px"></div><div class="gd2" style="left:43.6px;top:116px"></div><div class="gd2" style="left:49.7px;top:116px"></div><div class="gd2" style="left:55.8px;top:116px"></div><div class="gd2" style="left:61.9px;top:116px"></div><div class="tbtn" style="left:1.1px;top:122.3px"><svg width="32.4" height="32.4" viewBox="-0.200 -0.300 32.400 32.400"><path d="M6 8.500 h6 M9 5.500 v6 M20 17 h6 M23 14 v6 M7 23 h6 M10 20 v6" stroke="#111" stroke-width="1.100"/><path d="M29.300 24.300 v5 h-5 z" fill="#111"/></svg></div><div class="tbtn" style="left:36.3px;top:122.3px"><svg width="32.4" height="32.4" viewBox="-0.200 -0.300 32.400 32.400"><path d="M5 21.500 L29 10.500" fill="none" stroke="#222" stroke-width="1.100"/><path d="M29.300 24.300 v5 h-5 z" fill="#111"/></svg></div><div class="tbtn" style="left:1.1px;top:157.3px"><svg width="32.4" height="32.4" viewBox="-0.200 -0.300 32.400 32.400"><path d="M6.500 27 Q7.500 9 26 7" fill="none" stroke="#222" stroke-width="1.100"/><path d="M29.300 24.300 v5 h-5 z" fill="#111"/></svg></div><div class="tbtn" style="left:36.3px;top:157.3px"><svg width="32.4" height="32.4" viewBox="-0.200 -0.300 32.400 32.400"><circle cx="15.500" cy="16.500" r="9.600" fill="none" stroke="#222" stroke-width="1.100"/><path d="M29.300 24.300 v5 h-5 z" fill="#111"/></svg></div><div class="tbtn" style="left:1.1px;top:192.3px"><svg width="32.4" height="32.4" viewBox="-0.200 -0.300 32.400 32.400"><ellipse cx="16.700" cy="16.300" rx="14.300" ry="5.600" transform="rotate(-42 16.700 16.300)" fill="none" stroke="#222" stroke-width="1.100"/><path d="M29.300 24.300 v5 h-5 z" fill="#111"/></svg></div><div class="tbtn" style="left:36.3px;top:192.3px"><svg width="32.4" height="32.4" viewBox="-0.200 -0.300 32.400 32.400"><path d="M4.900 10.500 C4.500 18 8 25.600 11.600 25.600 C16 25.600 19 8 24.500 7.300 C28.300 7.300 29.200 17.300 26.300 18 C22.500 18.800 14 6.300 8.400 7.300 C6 7.800 5 9 4.900 10.500 Z" fill="none" stroke="#222" stroke-width="1.100"/><path d="M29.300 24.300 v5 h-5 z" fill="#111"/></svg></div><div class="tbtn" style="left:1.1px;top:227.3px"><svg width="32.4" height="32.4" viewBox="-0.200 -0.300 32.400 32.400"><path d="M12 11.500 Q6.500 12.500 7.200 16.500 Q8 20.500 13 20.300 L26.200 19.900" fill="none" stroke="#222" stroke-width="1.100"/><path d="M29.300 24.300 v5 h-5 z" fill="#111"/></svg></div><div class="tbtn" style="left:36.3px;top:227.3px"><svg width="32.4" height="32.4" viewBox="-0.200 -0.300 32.400 32.400"><path d="M7.100 4.500 h7.200 l3.600 6.100 l-3.600 6.100 h-7.200 l-3.600 -6.100 z M23.800 8.800 l5.200 9.100 h-10.400 z M4.500 21.400 h14.700 v6.700 h-14.700 z" fill="none" stroke="#222" stroke-width="1.100"/><path d="M29.300 24.300 v5 h-5 z" fill="#111"/></svg></div><div class="tbtn" style="left:1.1px;top:262.3px"><svg width="32.4" height="32.4" viewBox="-0.200 -0.300 32.400 32.400"><path d="M6 17.700 L12.500 10.100 H27.200 V24.200 H6 Z" fill="url(#hatch)" stroke="#222" stroke-width="1.100"/><circle cx="19.400" cy="17.700" r="3.300" fill="#f4f4f4" stroke="#222" stroke-width="1"/><path d="M29.300 24.300 v5 h-5 z" fill="#111"/></svg></div><div class="tbtn" style="left:1.1px;top:305.3px"><svg width="32.4" height="32.4" viewBox="-0.200 -0.300 32.400 32.400"><text x="17" y="28" text-anchor="middle" font-family="Liberation Serif,serif" font-size="30" fill="#000">A</text></svg></div><div class="tbtn" style="left:36.3px;top:305.3px"><svg width="32.4" height="32.4" viewBox="-0.200 -0.300 32.400 32.400"><path d="M7 9.500 v16.500 M24.500 9.500 v16.500 M7 11 h17.500" fill="none" stroke="#222" stroke-width="1.100"/><path d="M7 11 l4 -2 v4 z M24.500 11 l-4 -2 v4 z" fill="#111"/><path d="M29.300 24.300 v5 h-5 z" fill="#111"/></svg></div><div class="tbtn" style="left:1.1px;top:340.3px"><svg width="32.4" height="32.4" viewBox="-0.200 -0.300 32.400 32.400"><rect x="5.500" y="8.500" width="21.500" height="16.500" rx="1" fill="#fff" stroke="#111" stroke-width="1.200"/><path d="M8 22.500 L13.500 15.500 L17 19 L20.500 16 L24.500 22.500 Z" fill="#000"/><circle cx="22" cy="12.500" r="1.600" fill="#000"/></svg></div><div class="tbtn" style="left:1.1px;top:383.3px"><svg width="32.4" height="32.4" viewBox="-0.200 -0.300 32.400 32.400"><path d="M4 12.500 V27 H24 Z" fill="none" stroke="#111" stroke-width="1.600"/><path d="M8 20 V23.500 H13 Z" fill="none" stroke="#111" stroke-width="1.100"/><path d="M24 4 L21 21.500 M24 4 L27.500 21.500 M24 2 v3" stroke="#111" stroke-width="1.100" fill="none"/><g transform="translate(1.500,2) rotate(-40 12 10) scale(.88)"><rect x="9.800" y="1" width="4.400" height="2.600" rx=".8" fill="#d63020"/><rect x="9.800" y="3.600" width="4.400" height="9.500" fill="#d63020" stroke="#7a1408" stroke-width=".4"/><path d="M9.800 13.100 L12 17.500 L14.200 13.100 Z" fill="#e8c48a" stroke="#553" stroke-width=".3"/></g><path d="M29.300 24.300 v5 h-5 z" fill="#111"/></svg></div><div class="tbtn" style="left:36.3px;top:383.3px"><svg width="32.4" height="32.4" viewBox="-0.200 -0.300 32.400 32.400"><rect x="5.500" y="11.500" width="23" height="9" rx="1" fill="#fafafa" stroke="#222" stroke-width="1"/><path d="M8 11.500 v3 M10.500 11.500 v2 M13 11.500 v3 M15.500 11.500 v2 M18 11.500 v4 M20.500 11.500 v2 M23 11.500 v3 M25.500 11.500 v2" stroke="#222" stroke-width=".7"/></svg></div><div class="tbtn" style="left:1.1px;top:418.3px"><svg width="32.4" height="32.4" viewBox="-0.200 -0.300 32.400 32.400"><rect x="7" y="7.500" width="16.500" height="12.500" fill="#f5f0da" stroke="#b8b4a0" stroke-width="1"/><circle cx="21" cy="19" r="6.800" fill="#f5f0da" fill-opacity=".7" stroke="#b8b4a0" stroke-width="1"/><circle cx="7" cy="20" r="1.100" fill="#f88"/></svg></div><div class="tbtn" style="left:36.3px;top:418.3px"><svg width="32.4" height="32.4" viewBox="-0.200 -0.300 32.400 32.400"><path d="M5.500 15 L23 5.500" stroke="#f03030" stroke-width="1.200"/><path d="M0 0 L0 15.5 L3.6 12.2 L6.3 18.2 L8.6 17.2 L5.9 11.3 L10.8 11.3 Z" fill="#fff" stroke="#555" stroke-width=".9" transform="translate(15,11) scale(.82)"/><path d="M29.300 24.300 v5 h-5 z" fill="#111"/></svg></div><div class="tbtn" style="left:1.1px;top:461.3px"><svg width="32.4" height="32.4" viewBox="-0.200 -0.300 32.400 32.400"><path d="M6.500 13 L20.500 7 L28 12.500 V22 L14 28.500 L6.500 22.500 Z M6.500 13 L14 18.500 L28 12.500 M14 18.500 V28.500" fill="none" stroke="#222" stroke-width="1.100" stroke-linejoin="round"/><path d="M29.300 24.300 v5 h-5 z" fill="#111"/></svg></div>
<div id="tabbar"><span>* park.dxf</span></div><svg class="ic" style="left:78px;top:114.5px" width="10" height="10" viewBox="0 0 10 10" ><path d="M1 1 L9 9 M9 1 L1 9" stroke="#666" stroke-width="1"/></svg><svg class="ic" style="left:95px;top:112px" width="16" height="16" viewBox="0 0 16 16" ><circle cx="7" cy="7.200" r="5.300" fill="#f6f6f8" stroke="url(#qring)" stroke-width="2.300"/><path d="M4.500 9 L8.500 4.500 M4.300 6.500 L9 8.500 M6.500 4 V10" stroke="#c88" stroke-width=".5"/><path d="M7.300 7.300 l4.300 4.300" stroke="#f2a21a" stroke-width="1.900"/><path d="M7 7 l1.200 1.200" stroke="#f6d890" stroke-width="1.600"/><path d="M11.300 11.300 l1.300 1.300" stroke="#e85a5a" stroke-width="2" stroke-linecap="round"/></svg><div id="cmdhist"><i>Comando:</i> snapfree</div><div id="cmdrow"><span>Comando:</span><div id="cmdin"></div><div id="cmdbtn"><svg width="14" height="10" viewBox="0 0 14 10"><rect x=".5" y=".5" width="13" height="9" fill="#fff" stroke="#111"/><rect x=".5" y=".5" width="13" height="3" fill="#000"/></svg></div></div><div id="status"><span style="left:2.400px;top:9px;letter-spacing:.25px">-50.8593,50.9666</span><span style="left:2.400px;top:29px;letter-spacing:-.1px"><em>@</em>-41.4057,77.6745</span><i class="sl" style="left:253.500px"></i><span style="left:256px;top:9px;letter-spacing:-.08px">72.0019&lt;135°</span><span style="left:256px;top:29px;letter-spacing:-.12px"><em>@</em>88.0214&lt;118°</span><b class="dot" style="left:506.500px"></b><span style="left:568.500px;top:19px">Seleccionar entidad o región</span><svg style="position:absolute;left:716px;top:4.300px" width="21" height="34" viewBox="0 0 21 34"><ellipse cx="10.300" cy="30.500" rx="7" ry="1.500" fill="#b8b8b8"/><rect x="2.200" y="1.500" width="16.200" height="29" rx="7.500" fill="#fff" stroke="#2a2a2a" stroke-width="1.100"/><path d="M2.200 13 h16.200 M10.300 1.500 v11.500" stroke="#2a2a2a" stroke-width=".9"/><rect x="8.800" y="3.300" width="3" height="6" rx="1.500" fill="#fff" stroke="#2a2a2a" stroke-width=".9"/></svg><b class="dot" style="left:940.500px"></b><span style="left:949px;top:19px">No hay entidades seleccionadas.</span><b class="dot" style="left:1269.500px"></b></div>
<svg id="cv" style="left:72px;top:132px" width="1082" height="616" viewBox="72 132 1082 616"><rect x="72" y="132" width="1082" height="616" fill="#ececec"/><rect x="95" y="155" width="1043.200" height="577" fill="#d3d3d3"/><path d="M456 682.500 H786 V212 H792 V689 H456 Z" fill="#818181"/><path d="M138.5 686.0h1M138.5 622.0h1M138.5 558.0h1M138.5 493.0h1M138.5 429.0h1M138.5 365.0h1M138.5 301.0h1M138.5 237.0h1M138.5 172.0h1M202.5 686.0h1M202.5 622.0h1M202.5 558.0h1M202.5 493.0h1M202.5 429.0h1M202.5 365.0h1M202.5 301.0h1M202.5 237.0h1M202.5 172.0h1M266.5 686.0h1M266.5 622.0h1M266.5 558.0h1M266.5 493.0h1M266.5 429.0h1M266.5 365.0h1M266.5 301.0h1M266.5 237.0h1M266.5 172.0h1M330.5 686.0h1M330.5 622.0h1M330.5 558.0h1M330.5 493.0h1M330.5 429.0h1M330.5 365.0h1M330.5 301.0h1M330.5 237.0h1M330.5 172.0h1M394.5 686.0h1M394.5 622.0h1M394.5 558.0h1M394.5 493.0h1M394.5 429.0h1M394.5 365.0h1M394.5 301.0h1M394.5 237.0h1M394.5 172.0h1M459.5 686.0h1M459.5 622.0h1M459.5 558.0h1M459.5 493.0h1M459.5 429.0h1M459.5 365.0h1M459.5 301.0h1M459.5 237.0h1M459.5 172.0h1M523.5 686.0h1M523.5 622.0h1M523.5 558.0h1M523.5 493.0h1M523.5 429.0h1M523.5 365.0h1M523.5 301.0h1M523.5 237.0h1M523.5 172.0h1M587.5 686.0h1M587.5 622.0h1M587.5 558.0h1M587.5 493.0h1M587.5 429.0h1M587.5 365.0h1M587.5 301.0h1M587.5 237.0h1M587.5 172.0h1M651.5 686.0h1M651.5 622.0h1M651.5 558.0h1M651.5 493.0h1M651.5 429.0h1M651.5 365.0h1M651.5 301.0h1M651.5 237.0h1M651.5 172.0h1M715.5 686.0h1M715.5 622.0h1M715.5 558.0h1M715.5 493.0h1M715.5 429.0h1M715.5 365.0h1M715.5 301.0h1M715.5 237.0h1M715.5 172.0h1M779.5 686.0h1M779.5 622.0h1M779.5 558.0h1M779.5 493.0h1M779.5 429.0h1M779.5 365.0h1M779.5 301.0h1M779.5 237.0h1M779.5 172.0h1M844.5 686.0h1M844.5 622.0h1M844.5 558.0h1M844.5 493.0h1M844.5 429.0h1M844.5 365.0h1M844.5 301.0h1M844.5 237.0h1M844.5 172.0h1M908.5 686.0h1M908.5 622.0h1M908.5 558.0h1M908.5 493.0h1M908.5 429.0h1M908.5 365.0h1M908.5 301.0h1M908.5 237.0h1M908.5 172.0h1M972.5 686.0h1M972.5 622.0h1M972.5 558.0h1M972.5 493.0h1M972.5 429.0h1M972.5 365.0h1M972.5 301.0h1M972.5 237.0h1M972.5 172.0h1M1036.5 686.0h1M1036.5 622.0h1M1036.5 558.0h1M1036.5 493.0h1M1036.5 429.0h1M1036.5 365.0h1M1036.5 301.0h1M1036.5 237.0h1M1036.5 172.0h1M1101.5 686.0h1M1101.5 622.0h1M1101.5 558.0h1M1101.5 493.0h1M1101.5 429.0h1M1101.5 365.0h1M1101.5 301.0h1M1101.5 237.0h1M1101.5 172.0h1" stroke="#e2e2e2" stroke-width="1"/><rect x="447.400" y="204.500" width="338.600" height="478" fill="#cacaca"/><rect x="448.700" y="206" width="335.300" height="475.400" fill="#fff"/><path d="M95 493.500 H1138 M523.500 155 V732" stroke="#fff" stroke-opacity=".16" stroke-width="1"/><path d="M449 493.500 H785 M523.500 206 V681" stroke="#f1f1f1" stroke-width="1"/><rect x="464.500" y="221.500" width="305" height="445" fill="none" stroke="#8080fc" stroke-width="1"/><rect x="463.500" y="220.500" width="305" height="445" fill="none" stroke="#4a4a98" stroke-width="1"/><path d="M507.7 355.9 L669.2 347.4 L709.6 499.3" fill="none" stroke="#3a3a3a" stroke-width=".8"/><path d="M507.9 358.8 L667.0 350.4 L706.8 500.0" fill="none" stroke="#3a3a3a" stroke-width=".8"/><path d="M670.2 351.3 L668.0 354.1M670.9 353.8 L668.7 356.6M671.6 356.3 L669.3 359.2M672.2 358.8 L670.0 361.7M672.9 361.3 L670.7 364.2M673.6 363.8 L671.3 366.7M674.2 366.3 L672.0 369.2M674.9 368.9 L672.7 371.7M675.6 371.4 L673.3 374.2M676.2 373.9 L674.0 376.8M676.9 376.4 L674.7 379.3M677.6 378.9 L675.3 381.8M678.2 381.4 L676.0 384.3M678.9 383.9 L676.7 386.8M679.6 386.4 L677.3 389.3M680.3 389.0 L678.0 391.8M680.9 391.5 L678.7 394.3M681.6 394.0 L679.4 396.9M682.3 396.5 L680.0 399.4M682.9 399.0 L680.7 401.9M683.6 401.5 L681.4 404.4M684.3 404.0 L682.0 406.9M684.9 406.5 L682.7 409.4M685.6 409.1 L683.4 411.9M686.3 411.6 L684.0 414.4M686.9 414.1 L684.7 417.0M687.6 416.6 L685.4 419.5M688.3 419.1 L686.0 422.0M688.9 421.6 L686.7 424.5M689.6 424.1 L687.4 427.0M690.3 426.6 L688.0 429.5M690.9 429.2 L688.7 432.0M691.6 431.7 L689.4 434.5M692.3 434.2 L690.0 437.1M692.9 436.7 L690.7 439.6M693.6 439.2 L691.4 442.1M694.3 441.7 L692.0 444.6M695.0 444.2 L692.7 447.1M695.6 446.7 L693.4 449.6M696.3 449.3 L694.1 452.1M697.0 451.8 L694.7 454.6M697.6 454.3 L695.4 457.2M698.3 456.8 L696.1 459.7M699.0 459.3 L696.7 462.2M699.6 461.8 L697.4 464.7M700.3 464.3 L698.1 467.2M701.0 466.8 L698.7 469.7M701.6 469.4 L699.4 472.2M702.3 471.9 L700.1 474.7M703.0 474.4 L700.7 477.3M703.6 476.9 L701.4 479.8M704.3 479.4 L702.1 482.3M705.0 481.9 L702.7 484.8M705.6 484.4 L703.4 487.3M706.3 486.9 L704.1 489.8M707.0 489.5 L704.7 492.3M707.7 492.0 L705.4 494.8M708.3 494.5 L706.1 497.4M709.0 497.0 L706.8 499.9" stroke="#3a3a3a" stroke-width=".55" opacity=".75"/><path d="M711.3 516.2 L708.1 517.4M710.5 518.6 L707.3 519.9M709.7 521.1 L706.5 522.4M708.9 523.6 L705.7 524.8M708.1 526.0 L704.9 527.3M707.3 528.5 L704.1 529.8M706.4 531.0 L703.3 532.3M705.6 533.4 L702.5 534.7M704.8 535.9 L701.7 537.2M704.0 538.4 L700.9 539.7" stroke="#3a3a3a" stroke-width=".55" opacity=".75"/><path d="M706.7 499.6 L709.6 499.3" stroke="#3a3a3a" stroke-width=".8"/><path d="M711.6 515.2 L703.2 540.9" fill="none" stroke="#3a3a3a" stroke-width=".8"/><path d="M709.1 514.4 L700.7 540.1" fill="none" stroke="#3a3a3a" stroke-width=".8"/><path d="M711.600 515.200 l-2.500 -.8 M703.200 540.900 l-2.500 -.8" stroke="#3a3a3a" stroke-width=".8"/><path d="M680.3 344.600 L724 502.400 Q726 510 724.500 517 L718.400 542" fill="none" stroke="#3a3a3a" stroke-width=".8"/><path d="M570.7 371.4 L585.9 364.3" stroke="#c2c2c2" stroke-width="4.400" stroke-linejoin="round"/><path d="M595.7 361.3 L611.3 361.3" stroke="#c2c2c2" stroke-width="4.400" stroke-linejoin="round"/><path d="M621.6 362.7 L636.3 369.0" stroke="#c2c2c2" stroke-width="4.400" stroke-linejoin="round"/><path d="M644.0 375.0 L655.4 385.9" stroke="#c2c2c2" stroke-width="4.400" stroke-linejoin="round"/><path d="M660.3 395.4 L666.6 409.6" stroke="#c2c2c2" stroke-width="4.400" stroke-linejoin="round"/><path d="M667.7 420.0 L666.6 435.0" stroke="#c2c2c2" stroke-width="4.400" stroke-linejoin="round"/><path d="M586.7 494.9 L602.5 496.2" stroke="#c2c2c2" stroke-width="4.400" stroke-linejoin="round"/><path d="M515.3 422.1 C518.2 422.2 526.5 423.9 532.6 422.8 C538.8 421.7 546.8 419.2 552.2 415.6 C557.6 412.0 560.9 406.3 565.2 401.3 C569.5 396.3 573.4 389.5 578.2 385.6 C583.0 381.7 588.5 379.4 593.9 377.8 C599.3 376.2 604.8 375.6 610.8 376.2 C616.8 376.8 624.6 379.1 630.0 381.7 C635.4 384.3 639.5 387.4 643.0 392.0 C646.5 396.6 649.2 403.4 650.8 409.0 C652.4 414.6 653.2 419.5 652.7 425.4 C652.2 431.3 649.5 438.5 648.0 444.4 C646.5 450.3 643.6 455.4 644.0 460.8 C644.4 466.2 647.7 472.0 650.4 476.8 C653.1 481.6 658.1 485.5 660.0 489.6 C661.9 493.7 661.3 499.5 661.6 501.5 L664.800 505.300" fill="none" stroke="#d8ab62" stroke-width=".9"/><path d="M664.8 505.3 C666.3 504.9 670.8 503.4 674.0 502.6 C677.2 501.8 680.3 501.0 684.0 500.5 C687.7 500.0 692.0 499.8 696.0 499.6 C700.0 499.4 706.0 499.5 708.0 499.5" fill="none" stroke="#d8ab62" stroke-width=".9"/><path d="M514.3 432.6 C517.8 432.6 528.5 433.9 535.2 432.8 C542.0 431.7 549.1 429.3 554.8 426.0 C560.4 422.7 564.8 417.8 569.1 413.0 C573.4 408.2 576.7 401.4 580.8 397.4 C584.9 393.4 589.3 390.7 593.9 388.9 C598.5 387.1 603.6 386.5 608.2 386.5 C612.8 386.5 617.4 387.1 621.3 388.9 C625.2 390.6 628.6 393.6 631.5 397.0 C634.4 400.4 636.9 404.3 638.5 409.0 C640.1 413.7 641.7 419.5 641.2 425.4 C640.8 431.3 637.1 439.6 635.8 444.4 C634.5 449.2 633.7 450.1 633.6 454.4 C633.5 458.7 632.7 464.8 635.2 470.4 C637.7 476.0 646.3 482.4 648.8 488.0 C651.3 493.6 651.5 498.9 650.4 504.0 C649.3 509.1 645.6 515.5 642.4 518.4 C639.2 521.3 635.7 522.1 631.2 521.6 C626.7 521.1 620.5 518.0 615.2 515.2 C609.9 512.4 604.0 506.7 599.2 504.8 C594.4 502.9 590.9 502.8 586.4 504.0 C581.9 505.2 575.5 508.5 572.0 512.0 C568.5 515.5 566.8 521.4 565.6 524.8 C564.4 528.2 564.9 531.2 564.8 532.5" fill="none" stroke="#d8ab62" stroke-width=".9"/><path d="M711.2 515.2 C709.3 514.4 704.5 511.2 700.0 510.4 C695.5 509.6 689.3 509.6 684.0 510.4 C678.7 511.2 673.3 513.1 668.0 515.2 C662.7 517.3 656.5 520.8 652.0 523.2 C647.5 525.6 644.8 528.2 640.8 529.6 C636.8 531.0 632.3 532.0 628.0 531.5 C623.7 531.0 619.5 528.9 615.2 526.4 C610.9 523.9 606.4 518.9 602.4 516.8 C598.4 514.7 594.9 513.6 591.2 513.9 C587.5 514.2 582.7 516.0 580.0 518.4 C577.3 520.8 576.0 525.6 575.2 528.0 C574.4 530.4 575.2 532.2 575.2 533.0" fill="none" stroke="#d8ab62" stroke-width=".9"/><path d="M565.3 395.6 C565.2 396.0 564.7 396.3 564.3 396.6 C564.0 397.0 563.4 397.2 563.2 397.6 C563.0 397.9 563.0 398.2 563.0 398.5 C563.0 398.9 563.1 399.2 563.1 399.6 C563.2 399.9 563.3 400.3 563.3 400.6 C563.3 401.0 563.4 401.4 563.1 401.7 C562.7 401.9 561.6 401.8 561.2 402.0 C560.8 402.2 560.7 402.4 560.8 402.8 C560.9 403.3 561.9 404.1 562.0 404.6 C562.2 405.1 561.8 405.3 561.7 405.7 C561.7 406.0 561.8 406.6 561.5 406.8 C561.2 407.0 560.4 406.8 560.0 407.0 C559.6 407.1 559.4 407.3 559.0 407.5 C558.7 407.6 558.1 407.5 558.0 407.8 C557.8 408.1 558.1 408.9 558.1 409.4 C558.1 410.0 558.2 410.6 558.0 411.0 C557.8 411.4 557.5 411.5 557.2 411.8 C556.9 412.0 556.6 412.4 556.3 412.5 C555.9 412.5 555.4 412.5 554.9 412.3 C554.4 412.1 553.7 411.4 553.3 411.4 C552.9 411.3 552.8 411.9 552.5 412.1 C552.2 412.3 551.9 412.3 551.6 412.4 C551.3 412.6 551.0 412.8 550.7 413.0 C550.4 413.2 550.0 413.2 549.7 413.4 C549.4 413.7 549.2 414.5 548.8 414.4 C548.5 414.4 548.0 413.5 547.6 413.2 C547.2 412.9 546.9 412.6 546.6 412.6 C546.3 412.5 545.9 412.5 545.6 412.6 C545.3 412.7 544.9 413.0 544.6 413.3 C544.2 413.6 543.8 414.3 543.4 414.3 C543.1 414.3 542.8 413.6 542.5 413.4 C542.2 413.1 541.9 412.9 541.6 412.6 C541.4 412.3 541.3 411.6 540.9 411.6 C540.5 411.7 539.9 412.6 539.4 412.9 C538.9 413.1 538.3 413.6 538.0 413.4 C537.7 413.2 537.7 412.3 537.5 411.8 C537.4 411.3 537.4 410.8 537.1 410.4 C536.9 410.1 536.8 409.9 536.3 410.0 C535.8 410.1 534.7 411.0 534.2 411.0 C533.7 411.1 533.5 410.7 533.3 410.3 C533.1 410.0 532.9 409.7 532.9 409.2 C532.9 408.7 533.4 407.8 533.3 407.4 C533.2 407.0 532.8 406.9 532.4 406.8 C532.1 406.6 531.6 406.6 531.2 406.4 C530.9 406.2 530.5 406.1 530.3 405.8 C530.1 405.5 530.0 405.1 530.0 404.7 C530.0 404.3 530.5 403.7 530.5 403.3 C530.6 402.9 530.4 402.6 530.4 402.3 C530.3 401.9 530.3 401.6 530.0 401.4 C529.7 401.1 529.0 401.0 528.6 400.7 C528.3 400.5 528.0 400.2 527.8 399.9 C527.6 399.5 527.4 399.2 527.4 398.8 C527.5 398.5 527.9 398.0 528.2 397.7 C528.5 397.3 529.3 396.9 529.3 396.6 C529.4 396.2 528.9 395.9 528.8 395.6 C528.6 395.3 528.5 394.9 528.3 394.6 C528.1 394.2 527.8 393.9 527.6 393.5 C527.4 393.1 527.4 392.7 527.2 392.3 C527.1 391.9 526.8 391.5 526.9 391.1 C527.1 390.8 527.8 390.6 528.1 390.3 C528.4 390.0 528.3 389.6 528.5 389.3 C528.8 389.1 529.5 388.9 529.7 388.7 C530.0 388.4 530.2 388.2 530.3 387.8 C530.4 387.5 530.4 387.1 530.2 386.6 C530.1 386.2 529.5 385.3 529.5 384.9 C529.5 384.5 529.9 384.2 530.4 384.2 C531.0 384.2 532.4 384.9 532.9 384.8 C533.4 384.8 533.2 384.2 533.4 383.9 C533.5 383.6 533.7 383.4 533.9 383.0 C534.0 382.7 534.0 382.2 534.3 381.9 C534.5 381.7 534.8 381.5 535.2 381.5 C535.6 381.4 536.1 381.5 536.4 381.4 C536.8 381.4 537.0 381.2 537.3 381.0 C537.6 380.9 537.9 380.8 538.1 380.4 C538.2 380.0 538.0 378.8 538.3 378.6 C538.6 378.4 539.4 379.3 539.8 379.4 C540.2 379.5 540.4 379.2 540.8 379.2 C541.1 379.1 541.5 379.4 541.7 379.0 C542.0 378.7 542.1 377.4 542.3 376.9 C542.6 376.4 542.9 375.9 543.3 375.9 C543.6 375.9 544.1 376.7 544.5 376.9 C544.9 377.1 545.2 376.9 545.6 377.2 C545.9 377.4 546.3 378.0 546.6 378.1 C546.9 378.2 547.3 378.0 547.6 377.7 C548.0 377.5 548.5 376.5 548.9 376.4 C549.2 376.3 549.5 376.9 549.9 377.1 C550.2 377.3 550.5 377.5 550.8 377.8 C551.1 378.0 551.3 378.5 551.6 378.8 C551.8 379.1 552.1 379.3 552.4 379.5 C552.6 379.8 552.7 380.3 553.0 380.5 C553.3 380.6 553.6 380.7 554.0 380.5 C554.5 380.4 555.3 379.7 555.7 379.7 C556.1 379.7 556.1 380.3 556.4 380.5 C556.7 380.7 557.3 380.5 557.5 380.8 C557.8 381.0 557.8 381.6 557.8 382.1 C557.8 382.6 557.6 383.3 557.7 383.7 C557.7 384.1 558.0 384.2 558.3 384.4 C558.7 384.5 559.1 384.5 559.6 384.6 C560.0 384.6 560.7 384.5 561.2 384.7 C561.6 384.8 562.0 385.0 562.2 385.3 C562.4 385.6 562.4 386.0 562.4 386.4 C562.3 386.8 562.1 387.4 562.1 387.7 C562.2 388.1 562.5 388.3 562.7 388.6 C563.0 388.8 563.2 389.1 563.5 389.4 C563.9 389.6 564.5 389.8 564.7 390.1 C565.0 390.4 565.3 390.8 565.1 391.2 C564.9 391.6 563.9 392.2 563.6 392.6 C563.3 393.0 563.1 393.3 563.3 393.6 C563.6 393.9 564.7 394.2 565.1 394.5 C565.4 394.8 565.4 395.2 565.3 395.6 Z" fill="none" stroke="#5f9a2a" stroke-width=".7"/><path d="M560.5 395.7 C560.3 396.3 560.9 397.0 560.6 397.3 C560.3 397.6 558.9 397.2 558.6 397.6 C558.2 398.0 558.7 399.3 558.3 399.7 C558.0 400.1 557.1 400.3 556.7 400.1 C556.2 399.8 556.2 398.5 555.6 398.2 C555.1 398.0 554.0 398.9 553.6 398.8 C553.2 398.6 553.3 397.7 553.1 397.2 C552.8 396.7 552.1 396.2 552.2 395.7 C552.2 395.2 553.2 394.9 553.4 394.3 C553.6 393.8 553.2 392.9 553.5 392.4 C553.7 392.0 554.4 391.3 554.9 391.4 C555.4 391.5 556.2 392.7 556.7 393.0 C557.2 393.3 557.2 393.2 557.7 393.1 C558.3 393.1 559.2 392.4 559.9 392.5 C560.5 392.6 561.5 393.1 561.6 393.7 C561.7 394.2 560.6 395.1 560.5 395.7 Z" fill="none" stroke="#5f9a2a" stroke-width=".5"/><path d="M558.6 402.1 C558.7 402.7 558.6 403.4 558.4 403.9 C558.1 404.4 557.6 404.9 557.2 405.3 C556.8 405.7 556.4 406.0 555.9 406.4 C555.3 406.8 554.6 407.7 554.1 407.6 C553.5 407.6 552.9 406.6 552.4 406.2 C551.8 405.8 551.4 405.7 550.7 405.4 C550.1 405.2 548.4 405.0 548.4 404.5 C548.4 403.9 550.5 402.9 550.6 402.1 C550.7 401.4 549.2 400.8 549.1 400.0 C548.9 399.3 549.3 398.2 549.8 397.9 C550.4 397.5 551.6 398.0 552.4 398.0 C553.1 398.0 553.4 398.2 554.1 398.0 C554.7 397.7 556.0 396.1 556.5 396.3 C557.0 396.5 556.8 398.4 557.0 399.1 C557.3 399.8 557.5 400.1 557.8 400.6 C558.0 401.1 558.5 401.6 558.6 402.1 Z" fill="none" stroke="#5f9a2a" stroke-width=".5"/><path d="M550.0 406.7 C549.8 407.3 549.8 407.5 549.8 408.1 C549.8 408.7 550.4 410.0 550.0 410.3 C549.7 410.7 548.5 410.1 547.9 410.4 C547.3 410.6 546.8 412.0 546.4 411.9 C545.9 411.8 545.6 410.1 545.2 409.6 C544.7 409.2 544.3 409.5 543.8 409.3 C543.3 409.1 542.6 408.9 542.1 408.5 C541.7 408.0 541.0 407.2 541.1 406.7 C541.2 406.1 542.2 405.5 542.7 405.1 C543.1 404.7 543.6 404.5 544.0 404.3 C544.4 404.1 544.8 404.2 545.2 403.9 C545.6 403.5 546.0 402.4 546.4 402.4 C546.8 402.4 547.0 403.6 547.6 403.7 C548.2 403.8 549.4 402.9 550.0 403.1 C550.6 403.3 551.2 404.1 551.2 404.7 C551.2 405.3 550.3 406.1 550.0 406.7 Z" fill="none" stroke="#5f9a2a" stroke-width=".5"/><path d="M546.3 403.3 C546.3 404.2 546.9 405.3 546.4 405.9 C546.0 406.5 544.5 406.6 543.7 406.8 C542.9 407.0 542.3 406.9 541.7 407.1 C541.2 407.3 540.9 407.6 540.2 408.0 C539.5 408.4 538.1 409.7 537.6 409.5 C537.0 409.3 537.2 407.3 536.9 406.6 C536.5 405.9 535.9 405.7 535.6 405.2 C535.2 404.6 535.0 403.9 534.9 403.3 C534.9 402.6 535.0 401.9 535.3 401.3 C535.6 400.6 536.1 400.4 536.5 399.6 C536.8 398.8 536.8 396.7 537.4 396.6 C538.0 396.5 539.5 398.5 540.2 399.0 C540.9 399.6 540.7 400.1 541.6 399.9 C542.4 399.8 544.5 398.0 545.3 398.1 C546.2 398.2 546.5 399.7 546.7 400.6 C546.9 401.4 546.4 402.4 546.3 403.3 Z" fill="none" stroke="#5f9a2a" stroke-width=".5"/><path d="M543.7 393.6 C543.4 394.3 540.9 394.6 540.4 395.4 C540.0 396.2 541.2 397.7 540.9 398.5 C540.7 399.3 539.7 400.1 538.9 400.3 C538.0 400.6 536.9 400.4 536.1 400.2 C535.2 400.0 534.4 399.6 533.8 399.1 C533.2 398.6 533.0 397.7 532.5 397.2 C532.1 396.6 531.5 396.2 531.3 395.6 C531.1 395.0 531.2 394.2 531.3 393.6 C531.5 393.0 532.3 392.8 532.3 392.1 C532.4 391.3 531.4 389.7 531.7 389.2 C532.0 388.7 533.4 389.5 534.2 389.0 C534.9 388.6 535.5 386.3 536.1 386.5 C536.7 386.6 536.7 389.6 537.6 389.9 C538.5 390.2 540.6 388.1 541.4 388.3 C542.2 388.5 541.9 390.2 542.2 391.1 C542.6 392.0 544.0 392.9 543.7 393.6 Z" fill="none" stroke="#5f9a2a" stroke-width=".5"/><path d="M545.4 386.0 C545.2 386.6 543.0 386.7 542.8 387.5 C542.6 388.3 544.4 390.4 544.1 390.8 C543.8 391.2 541.8 390.1 541.0 390.1 C540.2 390.1 540.0 390.7 539.3 391.0 C538.6 391.3 537.5 392.1 536.9 392.0 C536.2 391.8 535.6 390.8 535.2 390.2 C534.7 389.5 534.9 388.8 534.3 388.1 C533.7 387.4 531.9 386.8 531.8 386.0 C531.6 385.3 532.9 384.2 533.6 383.6 C534.2 383.0 535.0 382.7 535.7 382.4 C536.3 382.1 536.9 382.2 537.5 381.6 C538.1 381.0 538.6 378.9 539.3 378.8 C540.0 378.6 540.7 380.4 541.5 380.8 C542.3 381.2 543.8 380.6 544.2 381.1 C544.6 381.7 543.9 383.2 544.1 384.0 C544.3 384.8 545.6 385.4 545.4 386.0 Z" fill="none" stroke="#5f9a2a" stroke-width=".5"/><path d="M549.1 385.1 C549.6 385.8 550.9 386.9 551.1 387.7 C551.2 388.6 550.6 389.7 550.0 390.3 C549.4 390.9 548.3 391.1 547.4 391.4 C546.6 391.7 545.5 392.5 544.8 392.0 C544.2 391.5 544.1 388.9 543.4 388.5 C542.7 388.1 541.4 389.6 540.5 389.5 C539.7 389.3 538.2 388.5 538.3 387.8 C538.4 387.1 540.6 385.9 541.0 385.1 C541.4 384.4 540.4 383.9 540.5 383.3 C540.6 382.8 541.2 382.4 541.5 381.8 C541.9 381.2 542.1 380.2 542.6 379.9 C543.2 379.5 544.1 379.8 544.8 379.8 C545.5 379.9 546.1 380.0 546.9 380.1 C547.7 380.1 549.4 379.8 549.6 380.4 C549.8 381.0 548.3 383.0 548.2 383.7 C548.1 384.5 548.6 384.5 549.1 385.1 Z" fill="none" stroke="#5f9a2a" stroke-width=".5"/><path d="M554.3 388.0 C554.4 388.7 556.4 389.6 556.6 390.2 C556.7 390.8 555.8 391.7 555.1 391.8 C554.4 391.9 553.1 390.7 552.5 390.8 C551.9 390.9 551.8 392.2 551.3 392.3 C550.9 392.4 550.4 391.7 549.9 391.4 C549.5 391.2 549.1 391.0 548.8 390.6 C548.4 390.3 548.2 389.9 547.9 389.5 C547.5 389.1 546.8 388.6 546.7 388.0 C546.6 387.5 546.9 386.8 547.2 386.3 C547.5 385.9 548.2 385.6 548.7 385.4 C549.1 385.1 549.6 385.2 550.1 385.0 C550.5 384.8 550.9 384.3 551.3 384.3 C551.8 384.4 552.0 385.1 552.5 385.2 C553.1 385.3 553.9 384.8 554.5 384.9 C555.0 385.1 555.9 385.7 555.8 386.2 C555.8 386.7 554.2 387.4 554.3 388.0 Z" fill="none" stroke="#5f9a2a" stroke-width=".5"/><path d="M546.1 395.6 L548.2 395.0 L550.3 394.2 L552.1 395.2 M550.3 394.2 L552.5 393.9 L554.3 396.0 M552.5 393.9 L554.7 394.4 L557.6 393.1 M554.7 394.4 L556.8 395.2 L558.0 397.1 M556.8 395.2M546.1 395.6 L547.7 397.5 L549.2 399.5 L551.1 400.9 L551.2 405.0 M551.1 400.9 L553.0 402.5 L555.8 402.3 M553.0 402.5 L555.0 404.0 L558.0 403.1 M555.0 404.0M546.1 395.6 L545.1 397.9 L544.9 400.3 L540.9 402.5 M544.9 400.3 L544.6 402.8 L547.6 404.9 M544.6 402.8 L544.2 405.3 L546.1 406.7 M544.2 405.3 L544.2 407.7 L545.7 409.9 M544.2 407.7M546.1 395.6 L544.1 397.4 L542.2 399.4 L538.3 398.4 M542.2 399.4 L539.7 400.7 L539.7 404.3 M539.7 400.7 L537.1 401.5 L533.7 400.5 M537.1 401.5 L534.4 401.6 L531.3 397.7 M534.4 401.6M546.1 395.6 L543.6 395.2 L541.0 395.3 L538.1 397.5 M541.0 395.3 L538.5 394.7 L536.0 394.0 L534.4 390.5 M536.0 394.0 L533.9 392.5M546.1 395.6 L544.6 393.7 L542.8 392.2 L538.7 392.2 M542.8 392.2 L540.6 391.1 L538.4 390.1 L537.1 386.0 M538.4 390.1 L536.3 388.9 L533.5 390.4 M536.3 388.9M546.1 395.6 L546.4 392.5 L546.1 389.5 L541.1 387.4 M546.1 389.5 L545.3 386.5 L546.7 382.0 M545.3 386.5 L544.8 383.5 L546.0 380.8 M544.8 383.5 L543.7 380.6 L540.7 378.5 M543.7 380.6M546.1 395.6 L547.9 394.3 L549.8 393.4 L551.0 390.7 M549.8 393.4 L551.8 392.4 L554.8 393.3 M551.8 392.4 L553.4 391.0 L557.3 390.4 M553.4 391.0 L555.4 390.1 L557.9 391.3 M555.4 390.1" fill="none" stroke="#5f9a2a" stroke-width=".8" stroke-linejoin="round"/><path d="M546.1 395.6 L548.8 395.4M546.1 395.6 L548.6 397.1M546.1 395.6 L545.6 398.5M546.1 395.6 L544.1 398.2M546.1 395.6 L543.0 395.6M546.1 395.6 L543.9 393.8M546.1 395.6 L546.5 391.9M546.1 395.6 L548.3 394.2" fill="none" stroke="#4e8a1e" stroke-width="1.150" stroke-linecap="round"/><circle cx="546.1" cy="395.6" r="1.5" fill="#4e8a1e"/><path d="M611.1 445.8 C611.0 446.0 610.9 446.3 610.7 446.5 C610.4 446.7 609.7 446.8 609.6 447.0 C609.5 447.2 610.1 447.5 610.3 447.8 C610.5 448.0 610.7 448.3 610.8 448.5 C610.8 448.8 610.5 449.0 610.4 449.1 C610.3 449.3 610.1 449.5 609.9 449.7 C609.7 449.8 609.1 449.8 609.0 450.0 C608.9 450.2 609.3 450.6 609.4 450.9 C609.5 451.2 609.6 451.5 609.6 451.8 C609.6 452.0 609.6 452.3 609.5 452.6 C609.5 452.8 609.3 453.0 609.1 453.1 C608.9 453.3 608.8 453.5 608.5 453.6 C608.2 453.6 607.7 453.4 607.4 453.5 C607.2 453.7 607.2 454.0 607.2 454.2 C607.2 454.5 607.3 455.0 607.3 455.3 C607.2 455.7 607.3 456.1 607.1 456.3 C606.9 456.5 606.6 456.5 606.3 456.5 C606.0 456.5 605.7 456.4 605.4 456.4 C605.1 456.4 605.0 456.7 604.7 456.6 C604.4 456.5 603.8 455.8 603.6 455.8 C603.3 455.8 603.4 456.4 603.2 456.6 C603.0 456.7 602.7 456.6 602.5 456.7 C602.3 456.8 602.2 457.1 602.0 457.2 C601.8 457.4 601.6 457.5 601.4 457.6 C601.2 457.6 600.9 457.5 600.7 457.5 C600.5 457.5 600.2 457.5 600.0 457.4 C599.8 457.2 599.5 456.6 599.3 456.6 C599.1 456.6 598.9 457.0 598.7 457.3 C598.4 457.5 598.2 457.9 597.9 458.1 C597.7 458.2 597.4 458.2 597.2 458.2 C597.0 458.2 596.7 458.1 596.6 457.8 C596.4 457.6 596.3 456.9 596.1 456.7 C595.9 456.5 595.7 456.6 595.5 456.7 C595.2 456.8 594.8 457.2 594.5 457.4 C594.2 457.6 593.7 457.9 593.5 457.8 C593.3 457.7 593.3 457.1 593.2 456.7 C593.1 456.4 593.2 455.9 593.0 455.7 C592.8 455.6 592.5 455.8 592.2 455.8 C591.9 455.8 591.5 456.0 591.2 455.9 C591.0 455.8 590.9 455.5 590.8 455.3 C590.7 455.1 590.6 454.8 590.6 454.5 C590.5 454.2 590.6 453.8 590.6 453.6 C590.5 453.3 590.4 453.1 590.1 453.0 C589.9 453.0 589.3 453.1 589.0 453.0 C588.8 452.9 588.7 452.7 588.7 452.5 C588.6 452.2 588.5 452.0 588.6 451.7 C588.6 451.4 588.8 451.0 588.9 450.8 C589.0 450.5 589.2 450.2 589.0 450.0 C588.8 449.9 587.9 450.0 587.7 449.8 C587.5 449.7 587.7 449.4 587.5 449.2 C587.4 449.0 587.0 448.8 586.9 448.6 C586.7 448.4 586.6 448.2 586.6 447.9 C586.7 447.7 587.3 447.4 587.4 447.1 C587.6 446.9 587.4 446.7 587.4 446.5 C587.5 446.2 587.8 446.0 587.7 445.8 C587.6 445.6 587.0 445.3 586.8 445.1 C586.5 444.9 586.3 444.6 586.2 444.3 C586.1 444.1 586.1 443.8 586.1 443.6 C586.1 443.3 585.9 443.0 586.1 442.8 C586.3 442.6 587.0 442.5 587.3 442.4 C587.5 442.2 587.6 442.0 587.8 441.8 C587.9 441.6 588.2 441.5 588.3 441.3 C588.4 441.1 588.3 440.8 588.3 440.5 C588.3 440.3 588.2 440.0 588.2 439.7 C588.2 439.4 588.1 439.1 588.3 438.9 C588.4 438.7 588.8 438.7 589.1 438.6 C589.5 438.6 590.2 438.9 590.4 438.8 C590.7 438.7 590.6 438.4 590.7 438.2 C590.8 438.0 590.9 437.8 590.9 437.5 C591.0 437.2 590.7 436.6 590.8 436.4 C591.0 436.2 591.5 436.4 591.7 436.4 C592.0 436.4 592.3 436.4 592.5 436.3 C592.7 436.2 592.8 435.9 592.9 435.7 C593.1 435.5 593.1 435.2 593.3 435.0 C593.4 434.7 593.6 434.4 593.8 434.4 C594.0 434.3 594.3 434.3 594.6 434.5 C594.9 434.6 595.3 435.2 595.5 435.1 C595.7 435.0 595.8 434.3 595.9 434.1 C596.1 433.8 596.3 433.5 596.5 433.4 C596.7 433.2 596.9 433.2 597.2 433.3 C597.4 433.4 597.7 433.8 598.0 433.9 C598.2 434.0 598.4 433.8 598.7 433.9 C598.9 433.9 599.1 434.3 599.3 434.3 C599.6 434.2 599.8 433.8 600.0 433.7 C600.3 433.5 600.5 433.4 600.8 433.3 C601.0 433.3 601.3 433.1 601.5 433.3 C601.7 433.5 601.8 434.4 601.9 434.7 C602.1 435.0 602.3 435.0 602.5 435.2 C602.6 435.3 602.8 435.4 603.0 435.5 C603.3 435.5 603.6 435.3 603.8 435.2 C604.1 435.2 604.4 435.1 604.6 435.1 C604.9 435.1 605.3 434.9 605.5 435.1 C605.7 435.2 605.7 435.6 605.8 435.8 C606.0 436.0 606.2 436.1 606.3 436.4 C606.4 436.6 606.3 437.0 606.5 437.2 C606.6 437.4 606.9 437.4 607.1 437.5 C607.3 437.5 607.6 437.6 607.8 437.7 C608.0 437.8 608.1 438.1 608.3 438.2 C608.5 438.3 609.0 438.3 609.2 438.4 C609.4 438.5 609.6 438.7 609.7 438.9 C609.7 439.2 609.6 439.6 609.6 439.8 C609.5 440.1 609.5 440.4 609.6 440.6 C609.7 440.8 609.9 441.0 610.1 441.1 C610.3 441.3 610.5 441.4 610.7 441.6 C610.9 441.8 611.0 442.0 611.0 442.3 C611.1 442.5 611.1 442.8 610.9 443.0 C610.8 443.3 610.3 443.6 610.2 443.9 C610.2 444.1 610.3 444.3 610.5 444.5 C610.7 444.7 611.5 444.9 611.6 445.1 C611.7 445.3 611.2 445.6 611.1 445.8 Z" fill="none" stroke="#5f9a2a" stroke-width=".7"/><path d="M609.9 446.3 C609.9 446.6 608.3 446.7 608.2 447.2 C608.0 447.8 609.2 449.0 609.1 449.5 C609.0 450.0 608.1 450.0 607.6 450.2 C607.0 450.4 606.5 450.7 606.0 450.7 C605.4 450.7 604.7 450.6 604.4 450.2 C604.0 449.9 603.9 449.0 603.7 448.6 C603.5 448.2 603.0 447.9 603.0 447.6 C603.0 447.2 603.6 446.8 603.5 446.3 C603.4 445.9 602.3 445.2 602.5 444.9 C602.6 444.6 603.8 444.8 604.3 444.6 C604.7 444.5 604.8 444.3 605.0 444.1 C605.3 443.9 605.6 443.6 606.0 443.6 C606.3 443.5 606.6 443.8 607.0 443.9 C607.3 444.0 607.9 443.9 608.1 444.2 C608.3 444.4 607.9 445.1 608.2 445.4 C608.5 445.8 609.9 446.0 609.9 446.3 Z" fill="none" stroke="#5f9a2a" stroke-width=".5"/><path d="M606.7 449.2 C606.6 449.5 605.9 449.5 605.9 449.9 C605.9 450.3 606.7 451.4 606.6 451.7 C606.6 452.1 605.7 452.1 605.3 452.0 C604.9 451.9 604.5 451.4 604.2 451.3 C603.8 451.2 603.6 451.4 603.3 451.3 C603.0 451.3 602.6 451.2 602.4 451.0 C602.2 450.8 601.9 450.5 601.8 450.2 C601.8 449.9 602.3 449.6 602.1 449.2 C602.0 448.8 601.0 448.3 600.9 447.9 C600.8 447.4 601.1 446.8 601.5 446.6 C601.9 446.4 602.7 446.7 603.1 446.7 C603.6 446.7 603.9 446.3 604.2 446.5 C604.5 446.6 604.7 447.2 604.9 447.4 C605.1 447.6 605.3 447.7 605.6 447.8 C605.8 447.9 606.3 448.0 606.4 448.3 C606.6 448.5 606.8 448.9 606.7 449.2 Z" fill="none" stroke="#5f9a2a" stroke-width=".5"/><path d="M601.6 453.4 C601.7 453.9 603.2 454.5 603.2 454.9 C603.2 455.2 602.2 455.4 601.8 455.5 C601.3 455.6 600.9 455.3 600.5 455.4 C600.2 455.6 600.0 456.4 599.7 456.4 C599.5 456.4 599.3 455.4 599.0 455.2 C598.6 455.1 598.1 455.6 597.7 455.5 C597.2 455.5 596.4 455.3 596.2 454.9 C595.9 454.6 596.0 453.9 596.1 453.4 C596.2 453.0 596.4 452.5 596.7 452.2 C597.0 451.9 597.7 452.0 598.0 451.8 C598.4 451.6 598.4 451.1 598.7 451.0 C599.0 451.0 599.3 451.4 599.7 451.3 C600.1 451.1 600.7 450.3 601.0 450.3 C601.4 450.3 601.5 451.1 601.8 451.4 C602.1 451.7 602.9 451.8 602.9 452.1 C602.9 452.5 601.6 453.0 601.6 453.4 Z" fill="none" stroke="#5f9a2a" stroke-width=".5"/><path d="M599.8 450.6 C599.8 451.2 599.4 451.8 599.1 452.4 C598.8 452.9 598.5 453.4 598.0 453.8 C597.6 454.2 597.1 454.6 596.6 454.8 C596.0 455.0 595.3 455.2 594.8 454.9 C594.3 454.7 594.1 453.6 593.7 453.4 C593.2 453.1 592.5 453.5 592.2 453.2 C591.8 453.0 591.7 452.3 591.7 451.9 C591.8 451.4 592.2 451.0 592.3 450.6 C592.5 450.2 592.5 450.0 592.5 449.6 C592.6 449.3 592.4 448.7 592.6 448.4 C592.8 448.0 593.3 448.1 593.6 447.7 C594.0 447.4 594.3 446.6 594.8 446.3 C595.3 446.1 596.3 445.7 596.7 446.0 C597.1 446.3 596.9 447.6 597.4 448.0 C597.8 448.5 598.9 448.3 599.3 448.7 C599.7 449.1 599.9 450.0 599.8 450.6 Z" fill="none" stroke="#5f9a2a" stroke-width=".5"/><path d="M593.7 444.3 C593.6 444.6 593.7 444.9 593.5 445.2 C593.4 445.5 593.2 445.8 592.9 446.0 C592.7 446.2 592.4 446.3 592.1 446.5 C591.8 446.8 591.6 447.4 591.2 447.7 C590.8 447.9 590.1 448.1 589.7 448.0 C589.2 447.9 588.7 447.4 588.4 447.0 C588.2 446.6 588.5 445.9 588.3 445.4 C588.2 445.0 587.8 444.7 587.7 444.3 C587.6 443.8 587.4 443.1 587.7 442.8 C588.0 442.5 589.3 443.0 589.6 442.7 C590.0 442.4 589.6 441.4 589.9 441.0 C590.1 440.6 590.7 440.3 591.2 440.2 C591.7 440.2 592.2 440.5 592.6 440.8 C593.1 441.0 593.6 441.3 593.8 441.6 C594.0 442.0 594.1 442.6 594.0 443.1 C594.0 443.5 593.8 443.9 593.7 444.3 Z" fill="none" stroke="#5f9a2a" stroke-width=".5"/><path d="M596.7 441.2 C596.9 441.6 597.1 442.4 596.8 442.7 C596.5 443.1 595.5 443.0 595.0 443.2 C594.6 443.4 594.4 443.5 594.1 443.8 C593.7 444.2 593.4 445.1 593.0 445.2 C592.6 445.3 591.9 444.9 591.6 444.5 C591.3 444.1 591.4 443.2 591.3 442.8 C591.2 442.4 591.0 442.3 590.9 442.0 C590.8 441.8 590.9 441.6 590.7 441.2 C590.4 440.8 589.4 440.1 589.3 439.6 C589.3 439.2 589.9 438.6 590.3 438.5 C590.8 438.4 591.7 439.2 592.1 439.0 C592.5 438.8 592.6 437.6 593.0 437.4 C593.4 437.1 594.2 437.1 594.6 437.3 C595.0 437.6 595.3 438.3 595.4 438.7 C595.6 439.2 595.3 439.7 595.5 440.1 C595.8 440.5 596.5 440.7 596.7 441.2 Z" fill="none" stroke="#5f9a2a" stroke-width=".5"/><path d="M602.7 439.7 C602.6 440.1 602.1 440.5 601.8 440.8 C601.6 441.1 601.3 441.2 601.0 441.6 C600.8 441.9 600.8 442.8 600.5 442.9 C600.1 443.0 599.6 442.2 599.1 442.2 C598.7 442.2 598.2 442.8 597.8 442.8 C597.4 442.7 596.9 442.4 596.8 442.0 C596.7 441.6 597.1 440.9 597.2 440.5 C597.2 440.1 596.9 439.9 596.9 439.7 C596.9 439.4 596.9 439.0 597.0 438.8 C597.1 438.5 597.4 438.4 597.6 438.1 C597.7 437.8 597.8 437.2 598.0 437.0 C598.3 436.9 598.8 437.4 599.1 437.4 C599.5 437.5 599.9 437.2 600.1 437.3 C600.3 437.5 600.1 438.1 600.5 438.3 C600.9 438.4 601.9 438.1 602.3 438.3 C602.7 438.6 602.8 439.3 602.7 439.7 Z" fill="none" stroke="#5f9a2a" stroke-width=".5"/><path d="M608.0 440.7 C608.0 441.1 606.8 441.4 606.5 441.9 C606.3 442.4 607.0 443.5 606.7 443.8 C606.4 444.1 605.4 443.8 604.9 443.8 C604.4 443.9 604.0 444.2 603.6 444.2 C603.1 444.2 602.5 444.2 602.2 443.9 C602.0 443.6 602.2 442.6 602.0 442.3 C601.7 441.9 600.7 442.2 600.5 441.9 C600.4 441.7 600.7 441.0 600.9 440.7 C601.1 440.3 601.5 440.3 601.5 439.8 C601.5 439.3 600.5 438.0 600.6 437.7 C600.8 437.5 602.1 438.3 602.6 438.2 C603.0 438.2 603.1 437.5 603.6 437.3 C604.0 437.1 604.7 436.9 605.1 437.0 C605.5 437.1 605.9 437.7 606.1 438.2 C606.3 438.6 606.0 439.1 606.3 439.5 C606.7 439.9 607.9 440.3 608.0 440.7 Z" fill="none" stroke="#5f9a2a" stroke-width=".5"/><path d="M599.0 445.8 L600.8 446.2 L602.5 446.0 L603.8 445.0 M602.5 446.0 L604.2 445.4 L605.1 442.3 M604.2 445.4 L605.9 444.8 L606.5 442.4 M605.9 444.8 L607.6 444.1 L608.4 441.1 M607.6 444.1M599.0 445.8 L599.8 447.2 L600.1 448.7 L601.8 449.9 M600.1 448.7 L600.7 450.3 L600.2 452.7 M600.7 450.3 L600.9 451.8 L601.5 453.3 L600.9 456.1 M601.5 453.3M599.0 445.8 L598.2 447.1 L597.5 448.5 L597.7 450.6 M597.5 448.5 L596.7 449.9 L597.1 451.4 M596.7 449.9 L596.1 451.4 L594.8 451.9 M596.1 451.4 L595.7 452.9 L596.5 455.6 M595.7 452.9M599.0 445.8 L598.3 447.7 L597.9 449.6 L598.0 451.6 L595.3 453.4 M598.0 451.6 L597.4 453.5 L595.5 454.3 M597.4 453.5 L597.4 455.5 L595.4 456.8 M597.4 455.5M599.0 445.8 L597.6 446.4 L596.2 446.9 L594.7 445.6 M596.2 446.9 L594.9 447.5 L593.6 446.9 M594.9 447.5 L593.5 448.0 L592.0 447.9 L590.5 448.9 M592.0 447.9M599.0 445.8 L597.4 444.8 L595.7 443.8 L595.5 440.2 M595.7 443.8 L593.8 443.4 L592.0 444.6 M593.8 443.4 L591.9 443.1 L590.6 440.6 M591.9 443.1 L590.2 442.2M599.0 445.8 L598.6 444.3 L597.8 442.9 L597.3 441.4 L599.2 439.4 M597.3 441.4 L596.3 440.2 L596.4 438.7 M596.3 440.2 L595.5 438.9 L596.2 436.5 M595.5 438.9M599.0 445.8 L599.6 444.4 L599.7 442.8 L601.7 441.9 M599.7 442.8 L599.5 441.3 L599.1 439.8 L597.8 438.9 M599.1 439.8 L598.4 438.4 L597.1 437.9 M598.4 438.4" fill="none" stroke="#5f9a2a" stroke-width=".8" stroke-linejoin="round"/><path d="M599.0 445.8 L601.1 445.8M599.0 445.8 L600.0 447.4M599.0 445.8 L598.6 447.6M599.0 445.8 L597.5 447.7M599.0 445.8 L597.3 446.2M599.0 445.8 L597.2 444.3M599.0 445.8 L598.8 443.9M599.0 445.8 L600.0 444.2" fill="none" stroke="#4e8a1e" stroke-width="1.150" stroke-linecap="round"/><circle cx="599.0" cy="445.8" r="1.0" fill="#4e8a1e"/><path d="M678.6 459.4 C678.5 459.7 678.2 460.1 678.0 460.4 C677.8 460.7 677.4 460.9 677.5 461.3 C677.7 461.6 678.4 462.1 678.7 462.5 C679.0 462.9 679.4 463.3 679.3 463.7 C679.2 464.0 678.3 464.1 678.0 464.4 C677.6 464.6 677.3 464.9 677.2 465.2 C677.0 465.5 677.0 465.8 677.1 466.2 C677.2 466.6 677.8 467.3 677.8 467.7 C677.8 468.1 677.4 468.3 677.2 468.6 C677.0 468.8 676.9 469.2 676.5 469.4 C676.1 469.5 675.3 469.3 674.9 469.5 C674.6 469.7 674.6 470.1 674.4 470.4 C674.2 470.6 674.0 470.8 673.7 471.1 C673.5 471.3 673.0 471.3 672.9 471.7 C672.9 472.1 673.4 473.1 673.3 473.6 C673.2 474.0 672.8 474.1 672.4 474.2 C672.1 474.3 671.5 474.1 671.0 474.1 C670.6 474.0 670.2 474.0 669.7 473.8 C669.3 473.7 668.7 473.4 668.3 473.3 C668.0 473.3 667.7 473.3 667.5 473.6 C667.3 473.9 667.3 474.7 667.1 475.1 C666.9 475.4 666.6 475.5 666.3 475.7 C666.0 476.0 665.8 476.5 665.5 476.7 C665.2 476.9 664.9 476.9 664.5 476.8 C664.2 476.7 663.7 476.2 663.4 476.1 C663.0 476.0 662.8 476.1 662.4 476.1 C662.1 476.2 661.8 476.2 661.5 476.5 C661.2 476.8 660.8 477.7 660.5 478.0 C660.1 478.3 659.7 478.3 659.4 478.4 C659.0 478.4 658.6 478.4 658.3 478.1 C658.0 477.8 657.8 477.0 657.5 476.7 C657.2 476.4 656.9 476.2 656.6 476.2 C656.2 476.1 655.9 476.3 655.5 476.4 C655.1 476.5 654.7 476.7 654.3 476.7 C653.9 476.7 653.4 476.8 653.2 476.5 C652.9 476.2 653.0 475.3 652.8 474.9 C652.7 474.4 652.5 474.1 652.2 473.9 C651.9 473.8 651.3 474.2 651.0 474.1 C650.6 474.0 650.3 473.9 650.1 473.6 C649.9 473.2 649.9 472.6 649.9 472.2 C649.9 471.7 650.0 471.2 649.9 470.8 C649.8 470.5 649.8 470.1 649.3 470.1 C648.9 470.1 647.7 470.7 647.2 470.6 C646.8 470.6 646.7 470.2 646.5 470.0 C646.2 469.7 645.8 469.5 645.9 469.1 C645.9 468.7 646.5 467.9 646.5 467.6 C646.5 467.2 645.9 467.2 645.6 467.0 C645.3 466.8 644.8 466.6 644.6 466.3 C644.4 466.1 644.4 465.7 644.2 465.4 C643.9 465.1 643.4 464.9 643.1 464.6 C642.8 464.4 642.3 464.1 642.3 463.7 C642.4 463.4 643.2 462.8 643.3 462.5 C643.5 462.1 643.2 461.8 643.3 461.4 C643.4 461.1 643.9 460.7 644.0 460.4 C644.1 460.0 644.1 459.7 643.9 459.4 C643.7 459.1 642.9 458.7 642.6 458.3 C642.3 458.0 642.1 457.6 642.2 457.2 C642.3 456.9 642.8 456.6 643.1 456.3 C643.5 456.0 644.0 455.8 644.3 455.5 C644.7 455.3 645.1 455.1 645.2 454.8 C645.4 454.5 645.2 454.1 645.2 453.8 C645.3 453.5 645.4 453.1 645.4 452.8 C645.5 452.5 645.7 452.2 645.7 451.9 C645.7 451.5 645.5 451.0 645.6 450.7 C645.8 450.4 646.3 450.3 646.7 450.2 C647.1 450.1 647.8 450.2 648.0 450.0 C648.2 449.7 648.0 449.2 648.1 448.8 C648.2 448.5 648.5 448.4 648.5 447.9 C648.5 447.5 648.0 446.5 648.1 446.1 C648.2 445.7 648.6 445.6 649.0 445.6 C649.5 445.6 650.3 446.1 650.6 446.0 C651.0 445.9 651.0 445.3 651.2 445.0 C651.4 444.7 651.7 444.6 651.8 444.1 C651.9 443.7 651.7 442.6 652.0 442.4 C652.3 442.2 653.1 442.9 653.5 443.1 C654.0 443.2 654.4 443.4 654.8 443.4 C655.1 443.4 655.5 443.5 655.7 443.2 C656.0 443.0 656.2 442.4 656.4 441.9 C656.6 441.5 656.8 440.7 657.2 440.6 C657.5 440.5 658.0 441.1 658.4 441.5 C658.8 441.9 659.2 442.9 659.6 443.1 C659.9 443.2 660.2 442.6 660.5 442.5 C660.8 442.4 661.1 442.7 661.5 442.6 C661.8 442.4 662.2 441.9 662.5 441.7 C662.9 441.5 663.3 441.2 663.6 441.3 C663.9 441.5 664.2 442.0 664.4 442.5 C664.7 442.9 664.8 443.9 665.0 444.0 C665.3 444.2 665.9 443.4 666.2 443.5 C666.5 443.5 666.6 444.1 667.0 444.1 C667.3 444.1 667.8 443.8 668.2 443.6 C668.7 443.4 669.4 442.8 669.7 442.8 C670.1 442.8 670.3 443.3 670.5 443.6 C670.8 443.9 671.0 444.2 671.2 444.5 C671.3 444.9 671.3 445.5 671.4 445.9 C671.6 446.2 671.6 446.6 671.9 446.8 C672.2 446.9 672.8 446.8 673.2 446.9 C673.5 447.0 673.7 447.3 674.1 447.3 C674.6 447.4 675.3 447.2 675.7 447.4 C676.0 447.6 676.1 448.0 676.2 448.4 C676.2 448.8 676.1 449.3 676.2 449.7 C676.2 450.1 676.3 450.4 676.3 450.8 C676.2 451.2 675.8 451.7 676.0 452.0 C676.1 452.3 676.7 452.4 677.1 452.6 C677.5 452.8 678.4 452.8 678.5 453.2 C678.6 453.5 678.0 454.1 677.7 454.5 C677.4 454.9 676.8 455.4 676.7 455.7 C676.7 456.1 677.1 456.3 677.3 456.6 C677.6 456.9 678.1 457.1 678.3 457.4 C678.5 457.7 678.6 458.1 678.7 458.4 C678.7 458.7 678.7 459.1 678.6 459.4 Z" fill="none" stroke="#5f9a2a" stroke-width=".7"/><path d="M676.3 458.0 C676.5 458.9 678.7 460.1 678.8 460.9 C678.9 461.8 677.7 462.7 677.0 463.2 C676.2 463.6 675.0 463.7 674.2 463.7 C673.3 463.7 672.5 463.7 671.9 463.4 C671.2 463.1 670.7 462.3 670.3 461.8 C669.8 461.4 670.0 460.9 669.1 460.8 C668.2 460.6 665.2 461.4 664.9 460.9 C664.5 460.5 667.0 458.9 667.2 458.0 C667.4 457.1 665.6 456.1 665.8 455.6 C666.0 455.0 668.0 455.4 668.5 454.7 C669.1 454.0 668.6 452.0 669.2 451.6 C669.7 451.1 671.1 451.6 671.9 452.0 C672.6 452.3 673.2 453.1 673.7 453.5 C674.2 454.0 674.3 454.6 675.0 454.9 C675.7 455.3 677.7 455.0 677.9 455.5 C678.2 456.0 676.2 457.1 676.3 458.0 Z" fill="none" stroke="#5f9a2a" stroke-width=".5"/><path d="M674.8 464.7 C674.6 465.5 674.1 466.3 673.5 466.8 C673.0 467.3 672.0 467.1 671.6 467.7 C671.1 468.4 671.5 470.5 671.1 470.7 C670.6 470.8 669.2 469.2 668.6 468.7 C668.0 468.2 667.8 467.9 667.3 467.8 C666.9 467.6 666.2 467.9 665.7 467.7 C665.1 467.5 664.3 467.1 664.2 466.6 C664.1 466.1 665.0 465.3 665.2 464.7 C665.3 464.2 665.0 463.8 665.1 463.3 C665.1 462.7 665.2 462.1 665.4 461.6 C665.7 461.0 666.1 460.0 666.6 459.9 C667.1 459.8 668.0 461.0 668.6 461.1 C669.2 461.2 669.6 460.7 670.3 460.6 C671.1 460.5 672.3 460.0 673.1 460.3 C673.8 460.5 674.4 461.5 674.7 462.2 C675.0 462.9 675.0 464.0 674.8 464.7 Z" fill="none" stroke="#5f9a2a" stroke-width=".5"/><path d="M664.1 470.2 C663.6 470.8 663.7 471.1 663.4 471.4 C663.2 471.8 662.8 471.7 662.7 472.5 C662.6 473.3 663.2 475.6 662.8 476.1 C662.4 476.7 661.2 475.9 660.3 475.9 C659.5 475.9 658.2 476.9 657.8 476.3 C657.4 475.7 658.4 473.2 658.0 472.5 C657.6 471.8 655.7 472.7 655.3 472.3 C654.8 471.9 655.4 470.9 655.4 470.2 C655.3 469.4 654.6 468.4 654.9 467.9 C655.3 467.4 656.8 467.7 657.2 467.1 C657.7 466.4 657.2 464.0 657.7 463.9 C658.2 463.8 659.6 466.4 660.3 466.7 C661.1 466.9 661.6 465.5 662.3 465.4 C663.0 465.3 663.8 465.6 664.5 466.0 C665.1 466.4 666.3 467.0 666.3 467.7 C666.2 468.4 664.5 469.5 664.1 470.2 Z" fill="none" stroke="#5f9a2a" stroke-width=".5"/><path d="M659.7 466.3 C659.3 467.1 657.6 467.4 657.1 468.1 C656.7 468.9 657.3 469.9 657.0 470.6 C656.7 471.4 656.0 472.3 655.3 472.7 C654.6 473.1 653.4 473.4 652.7 473.1 C651.9 472.8 651.5 471.4 650.7 471.0 C649.9 470.6 648.8 471.3 648.0 470.9 C647.3 470.6 646.6 469.7 646.4 468.9 C646.2 468.1 646.8 467.1 647.0 466.3 C647.1 465.5 646.9 464.6 647.2 464.0 C647.6 463.5 648.6 463.3 649.1 462.8 C649.7 462.3 649.9 461.4 650.5 461.0 C651.0 460.6 652.0 460.2 652.7 460.5 C653.3 460.8 653.4 462.5 654.1 462.8 C654.8 463.0 656.0 462.0 656.9 462.1 C657.7 462.2 658.9 462.8 659.4 463.5 C659.9 464.2 660.0 465.5 659.7 466.3 Z" fill="none" stroke="#5f9a2a" stroke-width=".5"/><path d="M655.6 457.8 C655.9 458.3 655.1 459.1 654.7 459.6 C654.4 460.1 653.7 460.3 653.4 460.9 C653.0 461.5 652.9 463.0 652.4 463.0 C651.9 463.1 650.9 461.1 650.2 461.0 C649.5 461.0 648.5 463.0 648.1 462.8 C647.8 462.6 648.5 460.5 648.0 459.9 C647.6 459.4 646.0 460.0 645.6 459.6 C645.2 459.3 645.5 458.3 645.7 457.8 C645.8 457.2 646.6 456.9 646.8 456.3 C646.9 455.7 646.2 454.5 646.5 454.0 C646.8 453.5 647.8 453.7 648.5 453.5 C649.1 453.3 649.5 453.0 650.2 452.7 C650.9 452.5 652.1 451.8 652.5 452.2 C653.0 452.6 652.8 454.3 652.9 455.0 C653.0 455.8 652.6 456.1 653.0 456.6 C653.5 457.0 655.3 457.2 655.6 457.8 Z" fill="none" stroke="#5f9a2a" stroke-width=".5"/><path d="M656.1 452.4 C656.5 453.0 657.9 454.0 657.9 454.5 C657.9 455.1 656.8 455.5 656.2 455.8 C655.6 456.1 655.0 455.9 654.4 456.2 C653.8 456.6 653.3 457.9 652.8 457.9 C652.3 457.8 652.0 456.2 651.4 455.9 C650.8 455.5 649.7 456.2 649.5 455.8 C649.2 455.4 649.8 454.3 649.7 453.7 C649.6 453.2 649.0 453.0 648.8 452.4 C648.5 451.9 648.0 451.1 648.0 450.4 C648.1 449.8 648.5 449.0 648.9 448.5 C649.4 448.0 650.1 447.4 650.8 447.4 C651.4 447.4 652.2 448.4 652.8 448.5 C653.5 448.7 654.1 448.0 654.6 448.3 C655.0 448.5 655.3 449.3 655.5 449.8 C655.7 450.3 655.6 450.8 655.8 451.2 C655.9 451.7 655.7 451.9 656.1 452.4 Z" fill="none" stroke="#5f9a2a" stroke-width=".5"/><path d="M667.3 448.1 C667.9 448.8 668.2 450.4 667.7 450.9 C667.2 451.5 665.1 451.2 664.3 451.4 C663.4 451.6 663.2 451.7 662.6 452.1 C662.1 452.4 661.6 453.4 661.0 453.5 C660.4 453.5 659.7 452.8 659.2 452.4 C658.7 452.1 658.4 451.6 657.9 451.3 C657.4 450.9 656.7 450.6 656.2 450.1 C655.7 449.6 655.0 448.8 655.0 448.1 C654.9 447.5 655.5 446.6 655.9 446.0 C656.3 445.5 657.2 445.5 657.6 444.8 C658.0 444.0 657.8 442.5 658.4 441.8 C658.9 441.2 660.2 440.5 661.0 440.7 C661.8 441.0 662.6 442.4 663.0 443.2 C663.5 444.0 663.5 444.8 663.7 445.4 C663.9 446.0 663.8 446.3 664.4 446.7 C665.0 447.2 666.8 447.4 667.3 448.1 Z" fill="none" stroke="#5f9a2a" stroke-width=".5"/><path d="M673.5 454.2 C673.2 454.9 672.4 455.2 672.2 456.0 C672.0 456.7 672.9 458.5 672.5 458.7 C672.0 459.0 670.1 457.5 669.3 457.4 C668.6 457.3 668.5 457.9 668.0 458.1 C667.4 458.4 666.5 459.2 666.0 458.9 C665.6 458.7 666.2 457.1 665.5 456.7 C664.8 456.3 662.3 457.1 662.0 456.7 C661.7 456.3 663.3 454.9 663.7 454.2 C664.1 453.6 664.1 453.2 664.4 452.7 C664.7 452.3 665.2 452.3 665.5 451.7 C665.7 451.1 665.4 449.4 665.8 448.9 C666.2 448.5 667.3 449.2 668.0 449.2 C668.7 449.2 669.5 448.8 670.2 448.9 C670.9 449.1 671.5 449.6 672.1 450.1 C672.7 450.6 673.7 451.1 673.9 451.8 C674.1 452.5 673.8 453.5 673.5 454.2 Z" fill="none" stroke="#5f9a2a" stroke-width=".5"/><path d="M661.0 459.4 L663.7 459.5 L666.5 459.5 L668.8 456.3 M666.5 459.5 L669.1 458.6 L673.5 461.0 M669.1 458.6 L671.7 457.7 L674.0 456.3 L676.2 451.7 M674.0 456.3M661.0 459.4 L662.4 461.1 L663.7 462.9 L665.2 464.6 L664.9 468.0 M665.2 464.6 L666.9 465.9 L670.9 466.1 M666.9 465.9 L668.1 467.8M661.0 459.4 L661.3 462.2 L660.8 465.0 L660.6 467.9 L657.9 470.5 M660.6 467.9 L660.8 470.7 L661.6 473.4M661.0 459.4 L659.5 460.9 L657.8 462.2 L656.2 463.6 L654.3 464.4 L651.9 462.6 M654.3 464.4 L652.1 464.6 L650.1 467.0 M652.1 464.6M661.0 459.4 L658.4 459.6 L655.8 459.7 L653.2 460.3 L651.5 462.5 M653.2 460.3 L650.6 460.9 L647.2 459.3 M650.6 460.9 L648.1 461.4 L646.8 463.5 M648.1 461.4M661.0 459.4 L660.4 456.9 L659.1 454.6 L655.9 452.7 M659.1 454.6 L657.8 452.4 L657.1 449.8 L658.7 447.1 M657.1 449.8 L657.1 447.2M661.0 459.4 L660.8 456.8 L660.5 454.2 L662.4 450.3 M660.5 454.2 L659.4 451.9 L656.9 450.2 M659.4 451.9 L658.6 449.4 L659.7 445.4 M658.6 449.4 L657.2 447.3 L658.7 443.4 M657.2 447.3M661.0 459.4 L662.9 458.4 L664.9 457.8 L665.7 454.9 M664.9 457.8 L666.8 456.8 L668.3 453.7 M666.8 456.8 L668.8 456.3 L670.8 455.5 L672.9 452.1 M670.8 455.5" fill="none" stroke="#5f9a2a" stroke-width=".8" stroke-linejoin="round"/><path d="M661.0 459.4 L664.2 460.1M661.0 459.4 L662.7 461.5M661.0 459.4 L660.9 462.8M661.0 459.4 L659.3 461.3M661.0 459.4 L657.9 458.9M661.0 459.4 L659.3 456.8M661.0 459.4 L661.6 456.4M661.0 459.4 L663.1 458.0" fill="none" stroke="#4e8a1e" stroke-width="1.150" stroke-linecap="round"/><circle cx="661.0" cy="459.4" r="1.4" fill="#4e8a1e"/><path d="M614.7 410.2 L615.6 411.2 L615.4 412.1 L614.6 412.9 L614.7 413.9 L614.4 414.7 L614.3 415.7 L614.1 416.6 L612.9 417.1 L612.4 417.8 L612.7 419.1 L611.7 419.6 L611.4 420.5 L610.1 420.5 L609.8 421.5 L609.2 422.4 L608.1 422.4 L607.8 423.6 L606.9 424.0 L605.6 423.4 L604.8 423.7 L604.1 424.5 L603.3 425.2 L602.2 424.7 L601.3 424.6 L600.4 424.9 L599.5 424.4 L598.6 424.5 L597.6 424.6 L596.7 424.5 L595.9 423.9 L595.1 423.6 L594.3 423.2 L593.3 423.1 L592.6 422.4 L592.1 421.7 L590.7 421.9 L590.2 421.0 L589.5 420.4 L589.3 419.4 L588.0 419.2 L587.6 418.3 L587.9 417.1 L587.2 416.4 L586.4 415.7 L586.1 414.8 L585.6 414.0 L586.0 412.9 L585.4 412.1 L585.5 411.1 L585.9 410.2 L585.6 409.3 L585.3 408.3 L585.5 407.4 L586.1 406.5 L586.3 405.6 L587.2 405.0 L587.3 404.0 L587.1 402.9 L588.0 402.3 L588.8 401.8 L589.0 400.8 L589.5 399.9 L590.1 399.3 L591.1 398.9 L591.8 398.3 L592.5 397.7 L593.1 397.0 L594.1 396.8 L595.0 396.6 L595.8 396.2 L596.9 396.5 L597.7 396.2 L598.5 395.3 L599.4 394.9 L600.4 395.3 L601.3 395.6 L602.2 396.0 L603.2 395.7 L604.2 395.3 L605.1 395.8 L605.9 396.4 L606.9 396.4 L607.4 397.5 L608.3 397.7 L609.4 397.8 L609.9 398.8 L610.5 399.5 L611.0 400.3 L611.8 400.8 L612.8 401.2 L612.4 402.6 L613.6 402.9 L614.1 403.7 L614.6 404.6 L614.7 405.5 L615.1 406.4 L614.9 407.4 L615.1 408.3 L615.0 409.3 Z" fill="none" stroke="#5f9a2a" stroke-width=".6" stroke-linejoin="round"/><path d="M614.6 410.2 L615.6 411.2 L615.1 412.1 L614.5 412.9 L614.7 413.9 L614.4 414.8 L614.0 415.6 L613.6 416.4 L613.4 417.3 L613.0 418.2 L612.5 419.0 L611.7 419.6 L610.7 419.9 L610.3 420.7 L609.6 421.3 L609.1 422.2 L608.5 423.0 L607.7 423.5 L606.8 423.9 L606.0 424.3 L604.9 424.0 L604.2 424.9 L603.2 424.9 L602.2 424.3 L601.3 424.3 L600.4 424.4 L599.5 425.2 L598.6 424.5 L597.7 424.2 L596.7 424.6 L595.9 424.1 L595.2 423.4 L594.3 423.2 L593.3 423.2 L592.7 422.3 L591.9 421.9 L590.8 421.8 L590.3 420.9 L589.8 420.2 L589.0 419.6 L588.9 418.5 L588.1 418.0 L587.5 417.3 L587.4 416.3 L587.1 415.5 L585.9 414.9 L586.1 413.9 L586.2 412.9 L585.6 412.1 L585.3 411.2 L586.2 410.2 L586.3 409.3 L586.2 408.4 L585.6 407.4 L586.5 406.6 L586.1 405.6 L586.5 404.7 L587.0 403.9 L587.8 403.3 L587.4 402.0 L588.2 401.3 L589.0 400.8 L589.9 400.3 L590.2 399.3 L591.1 398.9 L591.7 398.2 L592.6 397.9 L593.2 397.1 L594.3 397.3 L595.1 396.7 L595.7 395.6 L596.6 395.5 L597.7 395.9 L598.5 395.1 L599.5 395.7 L600.4 394.9 L601.3 395.2 L602.2 395.7 L603.1 396.0 L603.9 396.5 L605.1 395.7 L605.6 397.0 L606.9 396.5 L607.8 396.8 L608.4 397.7 L608.8 398.6 L610.1 398.5 L610.9 399.0 L611.3 399.9 L611.8 400.8 L612.2 401.6 L612.7 402.4 L613.0 403.3 L614.0 403.8 L614.1 404.8 L614.1 405.8 L614.2 406.6 L615.1 407.4 L614.8 408.4 L615.1 409.3 Z" fill="none" stroke="#5f9a2a" stroke-width=".6" stroke-linejoin="round"/><path d="M613.8 412.0 L615.6 410.5M614.0 412.2 L615.4 411.8M601.9 423.6 L602.6 425.3M601.2 423.2 L602.3 425.4M605.5 422.7 L606.6 423.7M592.7 420.9 L590.4 421.7M607.2 420.6 L609.5 421.5M596.1 423.0 L595.3 424.1M612.8 414.5 L614.7 413.6M591.8 420.1 L590.5 421.8M596.2 423.0 L595.3 423.8M611.3 416.2 L613.7 416.4M613.0 410.4 L615.3 409.0M610.8 417.5 L611.5 419.7M608.0 421.1 L609.7 422.0M613.0 411.1 L615.0 410.4M611.3 417.7 L611.8 420.0M613.1 411.0 L615.0 412.4M613.1 410.8 L615.3 411.2M612.5 408.1 L614.6 406.3M610.1 419.7 L610.9 420.5M594.9 421.7 L594.0 423.3M614.0 410.4 L614.9 411.9M614.0 411.6 L615.3 413.2M598.2 423.3 L598.2 424.7M599.8 423.4 L601.3 424.9M595.3 422.2 L593.4 423.4M612.1 415.2 L614.5 414.4M612.0 416.3 L613.5 416.5M610.7 402.8 L612.5 401.0M604.6 422.1 L605.2 423.9M603.0 422.8 L602.6 425.1M609.6 419.3 L611.1 420.3M590.8 419.9 L589.7 420.4M592.4 420.1 L589.9 421.0M600.5 423.6 L599.2 425.1M589.5 417.5 L588.7 419.1M606.9 421.9 L606.9 423.2M613.1 413.1 L614.5 414.2M600.5 423.1 L598.8 425.4M595.6 422.2 L595.5 424.0M590.7 419.9 L589.8 420.3M610.5 402.5 L612.6 402.0M612.4 405.4 L614.1 405.2M594.3 421.2 L593.2 423.0M605.8 421.6 L605.9 424.2M606.6 421.4 L608.7 422.4M589.7 416.6 L587.5 417.7M609.2 419.5 L611.9 419.7M610.8 417.5 L612.0 419.5M609.9 419.4 L611.7 419.7M613.5 409.6 L615.6 410.7M612.2 413.4 L614.8 413.8M593.0 421.0 L590.7 421.8M610.0 419.5 L610.8 421.1M612.3 415.9 L613.2 418.1M601.8 396.2 L603.5 395.3M593.8 398.1 L594.6 396.5M597.0 396.5 L598.3 395.3M586.3 411.1 L585.4 409.6M590.3 401.2 L590.2 399.2M598.3 396.6 L599.6 395.3M595.5 397.6 L596.4 395.7M605.2 397.1 L606.9 396.8M596.4 396.9 L597.6 395.7M586.3 409.1 L585.8 407.6M586.8 413.7 L585.6 412.5M588.1 403.8 L587.7 401.9M586.4 410.5 L585.3 409.0M600.7 396.5 L602.3 395.3" fill="none" stroke="#5f9a2a" stroke-width=".6" stroke-linecap="round"/><path d="M608.2 415.1 l-0.8 -1.6M598.4 417.6 l-0.7 -1.8M601.0 421.3 l-0.6 -1.5M602.1 417.5 l-1.1 -2.0M599.7 416.8 l-2.1 -1.6M596.6 417.7 l-1.6 -2.8M602.2 417.1 l-2.0 -1.5M610.0 414.0 l-1.1 -1.9M609.0 415.9 l-2.1 -2.0M608.1 412.7 l-2.0 -1.4M605.5 412.8 l-1.0 -2.4M605.2 413.0 l-1.2 -2.5M596.2 418.8 l-0.9 -2.0M610.0 413.5 l-1.2 -1.2M604.1 417.3 l-1.4 -1.2M599.0 418.6 l-2.0 -1.7" fill="none" stroke="#5f9a2a" stroke-width=".95" stroke-linecap="round"/><path d="M585.3 466.8 L585.3 467.8 L584.1 468.6 L584.0 469.5 L584.7 470.6 L584.3 471.5 L583.9 472.4 L583.1 473.1 L583.0 474.1 L582.5 474.9 L582.0 475.7 L581.0 476.1 L580.6 477.0 L579.9 477.6 L579.5 478.5 L579.0 479.4 L578.1 479.9 L577.0 480.0 L576.1 480.3 L575.2 480.4 L574.2 480.5 L573.4 480.7 L572.6 481.4 L571.6 481.4 L570.7 481.6 L569.8 482.2 L568.9 481.8 L567.9 481.7 L567.1 481.2 L566.2 480.7 L565.2 480.8 L564.5 480.3 L563.4 480.3 L562.3 480.4 L561.7 479.6 L561.2 478.6 L560.0 478.7 L559.3 478.0 L558.7 477.2 L557.9 476.7 L557.4 475.8 L556.9 475.0 L556.9 473.9 L555.7 473.4 L555.4 472.5 L556.0 471.3 L555.0 470.6 L554.8 469.7 L555.0 468.7 L554.8 467.7 L554.9 466.8 L554.3 465.8 L555.0 464.9 L554.7 463.9 L555.5 463.1 L555.1 462.0 L555.4 461.1 L556.3 460.5 L556.6 459.6 L556.7 458.5 L557.5 457.8 L558.3 457.3 L559.1 456.8 L559.7 456.1 L560.1 455.1 L561.3 455.0 L561.5 453.7 L562.7 453.9 L563.2 452.8 L564.4 453.1 L565.0 452.0 L566.0 452.1 L567.0 452.1 L567.9 451.9 L568.8 451.7 L569.8 451.7 L570.7 452.1 L571.6 452.3 L572.6 452.1 L573.7 451.8 L574.5 452.4 L575.1 453.4 L576.3 452.9 L577.1 453.4 L578.1 453.7 L578.4 455.0 L579.5 455.0 L579.7 456.3 L580.8 456.4 L581.1 457.4 L581.6 458.2 L582.8 458.5 L582.5 459.8 L583.4 460.4 L584.1 461.1 L583.7 462.3 L583.9 463.2 L585.0 463.9 L584.5 464.9 L585.0 465.8 Z" fill="none" stroke="#5f9a2a" stroke-width=".6" stroke-linejoin="round"/><path d="M584.2 466.8 L584.6 467.7 L584.2 468.6 L584.7 469.6 L583.8 470.4 L584.6 471.6 L583.2 472.1 L583.6 473.3 L582.4 473.7 L582.2 474.7 L582.2 475.8 L581.0 476.1 L580.4 476.8 L580.2 477.9 L579.2 478.2 L578.3 478.4 L578.1 479.9 L576.8 479.5 L575.9 479.8 L575.2 480.5 L574.5 481.2 L573.6 481.6 L572.5 481.0 L571.6 481.4 L570.7 481.1 L569.8 481.7 L568.8 482.1 L567.9 481.9 L566.9 482.0 L566.0 481.6 L565.0 481.5 L564.2 480.9 L563.4 480.3 L562.8 479.6 L561.7 479.6 L561.1 478.7 L560.6 477.9 L559.6 477.7 L558.6 477.4 L558.6 476.0 L557.6 475.7 L557.3 474.7 L556.7 474.0 L556.7 473.0 L555.4 472.5 L555.9 471.3 L555.2 470.6 L555.2 469.6 L555.6 468.6 L554.8 467.7 L555.3 466.8 L555.4 465.9 L555.5 465.0 L555.5 464.1 L555.8 463.2 L555.4 462.1 L555.9 461.3 L555.7 460.2 L556.2 459.3 L556.7 458.5 L558.0 458.2 L558.3 457.3 L559.1 456.8 L559.5 455.8 L560.2 455.2 L560.8 454.4 L561.6 454.0 L562.7 454.0 L563.5 453.4 L564.3 452.9 L565.4 453.2 L566.2 452.9 L567.0 452.2 L568.0 452.4 L568.8 451.6 L569.8 452.2 L570.7 452.4 L571.6 452.4 L572.5 452.4 L573.4 452.7 L574.4 452.6 L575.3 452.9 L576.1 453.5 L577.1 453.5 L577.6 454.5 L578.9 454.3 L579.7 454.8 L580.2 455.7 L580.6 456.6 L581.3 457.3 L582.0 457.9 L582.0 459.1 L582.8 459.6 L583.4 460.4 L583.3 461.4 L583.5 462.3 L584.7 463.0 L584.3 464.0 L584.7 464.9 L585.2 465.8 Z" fill="none" stroke="#5f9a2a" stroke-width=".6" stroke-linejoin="round"/><path d="M574.2 478.9 L575.6 481.2M570.6 479.3 L569.6 481.8M576.4 455.5 L577.4 453.8M575.1 478.2 L576.5 480.2M579.2 457.0 L580.2 456.2M580.5 475.1 L582.5 474.9M577.0 455.5 L578.7 454.3M582.5 470.2 L584.8 469.9M580.3 475.9 L580.3 478.0M582.6 467.2 L584.9 466.3M571.0 480.6 L570.0 482.0M583.3 470.3 L584.2 470.2M579.7 457.2 L581.3 456.4M582.6 467.1 L585.0 467.9M577.7 476.6 L578.0 479.5M580.5 475.0 L580.6 477.3M575.8 477.9 L578.4 479.2M561.8 476.7 L560.3 478.6M569.4 480.6 L569.5 482.1M583.2 468.9 L584.7 470.1M582.8 463.6 L584.5 463.7M573.0 478.8 L572.9 481.6M572.5 480.2 L571.2 481.5M574.7 479.7 L576.7 480.6M566.7 479.1 L565.8 481.6M565.1 478.5 L564.3 481.0M576.3 478.2 L575.7 480.5M579.7 475.9 L581.4 476.3M565.8 479.2 L564.2 481.0M580.3 459.8 L582.2 458.4M582.1 471.3 L584.5 471.5M579.6 475.7 L582.2 476.0M583.2 467.5 L585.1 468.2M563.5 477.7 L562.5 480.2M562.5 478.3 L562.3 480.0M580.0 474.4 L580.7 477.0M564.3 478.6 L564.0 480.6M580.0 474.3 L582.3 475.2M560.1 475.6 L557.6 475.8M579.4 458.4 L581.4 457.5M583.0 470.2 L583.9 471.6M582.3 472.4 L582.9 474.1M579.1 476.6 L579.8 478.6M561.6 478.0 L559.4 478.0M573.8 479.6 L574.7 481.0M559.1 474.1 L556.6 474.1M559.3 473.8 L557.9 475.5M583.2 464.1 L584.4 463.1M580.9 460.3 L582.3 457.8M581.9 462.7 L583.8 461.2M582.4 464.7 L584.7 463.7M566.7 478.9 L565.0 480.8M566.2 478.9 L564.3 480.9M566.5 479.7 L564.4 480.8M580.0 475.4 L580.4 477.3M575.4 478.8 L574.7 481.5M580.4 474.5 L582.9 474.3M578.7 457.5 L579.0 454.6M582.1 469.7 L584.1 470.8M558.4 473.8 L556.5 473.3M579.7 475.6 L580.9 476.7M582.8 462.2 L584.3 461.7M562.1 476.8 L561.7 479.5M556.2 469.1 L554.9 467.9M555.9 465.5 L554.8 463.8M571.7 452.6 L573.4 451.9M560.1 456.2 L560.8 454.8M555.8 469.3 L554.6 468.0M555.9 465.6 L555.0 464.0M558.6 458.5 L558.6 456.6M569.5 452.5 L571.0 451.6M559.6 457.5 L559.6 455.4M575.9 454.4 L577.9 453.8M566.1 453.1 L567.4 452.1M561.6 455.7 L562.2 453.9M562.3 454.8 L563.0 453.1M567.6 452.8 L568.9 451.6" fill="none" stroke="#5f9a2a" stroke-width=".6" stroke-linecap="round"/><path d="M580.4 468.9 l-1.3 -2.8M571.3 472.3 l-1.6 -1.1M571.6 475.8 l-0.7 -1.8M564.3 477.1 l-1.8 -1.6M579.5 472.3 l-2.1 -1.9M566.7 475.7 l-1.6 -1.7M570.1 475.4 l-2.2 -1.6M570.3 474.1 l-2.5 -2.1M576.4 473.2 l-1.4 -1.8M567.3 473.1 l-1.5 -2.6M568.9 475.3 l-1.7 -1.7M573.4 473.0 l-1.2 -1.5M577.5 470.8 l-1.9 -1.8M578.5 470.9 l-2.4 -2.0M572.2 476.5 l-1.7 -2.7M575.0 471.3 l-2.3 -2.1" fill="none" stroke="#5f9a2a" stroke-width=".95" stroke-linecap="round"/><path d="M642.0 500.3 L642.1 501.0 L642.1 501.6 L642.1 502.3 L641.8 502.9 L641.8 503.6 L640.8 503.9 L640.9 504.6 L641.0 505.4 L640.4 505.8 L640.3 506.5 L639.3 506.6 L639.1 507.3 L638.6 507.6 L638.2 508.2 L637.7 508.6 L637.0 508.6 L636.5 509.1 L636.0 509.4 L635.6 510.1 L634.9 510.2 L634.2 509.9 L633.7 510.6 L632.9 510.1 L632.3 510.6 L631.7 510.2 L631.1 510.1 L630.4 510.8 L629.8 510.1 L629.2 510.0 L628.4 510.4 L627.8 510.1 L627.4 509.4 L626.6 509.6 L626.2 509.0 L625.6 508.7 L625.3 508.0 L624.4 508.0 L624.1 507.4 L623.5 507.1 L623.2 506.5 L623.2 505.7 L622.8 505.2 L622.7 504.5 L622.5 504.0 L622.3 503.3 L622.0 502.8 L621.6 502.2 L622.0 501.5 L621.3 501.0 L621.6 500.3 L621.7 499.7 L621.3 499.0 L621.7 498.4 L621.9 497.8 L622.0 497.1 L622.0 496.5 L622.8 496.1 L622.4 495.2 L623.4 495.0 L623.3 494.2 L623.6 493.6 L624.5 493.6 L624.5 492.7 L625.3 492.5 L625.6 492.0 L626.4 492.0 L627.0 491.7 L627.5 491.3 L627.8 490.4 L628.6 490.8 L629.1 490.2 L629.7 489.9 L630.4 489.8 L631.1 490.2 L631.7 490.2 L632.3 490.1 L633.0 489.9 L633.6 490.6 L634.3 490.2 L634.9 490.3 L635.6 490.5 L635.9 491.4 L636.8 491.0 L637.0 492.0 L637.6 492.1 L638.3 492.3 L638.9 492.6 L639.1 493.4 L639.9 493.6 L640.0 494.3 L640.2 494.9 L640.5 495.4 L640.7 496.1 L640.9 496.7 L641.1 497.2 L641.8 497.7 L642.2 498.3 L641.6 499.1 L641.5 499.7 Z" fill="none" stroke="#5f9a2a" stroke-width=".6" stroke-linejoin="round"/><path d="M642.3 500.3 L641.9 500.9 L641.8 501.6 L641.5 502.2 L641.7 502.9 L641.7 503.5 L641.2 504.1 L640.9 504.6 L640.3 505.0 L640.6 506.0 L639.7 506.1 L639.6 506.8 L639.4 507.5 L638.5 507.5 L638.3 508.3 L637.9 508.9 L637.2 509.0 L636.7 509.5 L635.9 509.3 L635.4 509.8 L634.8 509.7 L634.3 510.5 L633.6 510.2 L633.0 510.4 L632.4 510.9 L631.7 510.8 L631.0 510.9 L630.4 510.4 L629.8 510.3 L629.1 510.4 L628.5 510.0 L628.0 509.6 L627.4 509.5 L626.9 509.0 L626.3 508.8 L625.4 508.9 L624.9 508.5 L624.6 507.8 L624.2 507.3 L623.9 506.7 L623.7 506.1 L623.2 505.7 L622.5 505.3 L622.2 504.8 L622.3 504.0 L621.7 503.5 L621.6 502.9 L621.5 502.2 L621.4 501.6 L621.3 501.0 L621.6 500.3 L621.3 499.6 L621.7 499.0 L621.7 498.4 L621.6 497.7 L621.8 497.1 L622.4 496.6 L622.1 495.8 L622.6 495.3 L623.0 494.8 L623.8 494.5 L623.8 493.8 L624.4 493.4 L624.6 492.7 L625.2 492.4 L625.5 491.8 L626.2 491.6 L626.7 491.1 L627.4 491.2 L627.9 490.7 L628.5 490.4 L629.1 490.1 L629.8 490.4 L630.4 489.9 L631.0 489.8 L631.7 489.9 L632.4 489.7 L633.0 489.8 L633.6 490.2 L634.3 490.4 L634.8 490.8 L635.6 490.5 L636.2 490.7 L636.6 491.4 L637.3 491.5 L637.8 491.9 L638.3 492.3 L638.5 493.0 L639.3 493.1 L639.6 493.7 L640.1 494.2 L640.3 494.9 L640.8 495.3 L641.2 495.8 L641.3 496.5 L641.6 497.1 L641.2 497.9 L641.5 498.4 L641.8 499.0 L642.0 499.6 Z" fill="none" stroke="#5f9a2a" stroke-width=".6" stroke-linejoin="round"/><path d="M640.6 497.9 L641.4 496.5M640.0 498.3 L641.4 497.5M639.7 497.3 L641.2 496.3M635.3 508.2 L637.2 509.3M640.6 499.9 L641.8 500.7M636.9 492.8 L637.6 492.1M635.9 508.8 L636.6 509.6M633.7 508.9 L633.8 510.2M635.6 492.7 L636.7 491.2M634.3 509.4 L634.7 510.1M641.2 500.4 L641.9 501.5M635.2 508.3 L635.9 510.0M641.2 501.4 L642.0 500.9M627.8 507.9 L627.5 509.8M629.1 508.6 L629.5 510.3M640.8 500.4 L642.0 500.8M630.4 508.8 L630.6 510.7M640.4 501.9 L641.9 502.0M630.2 509.3 L630.7 510.3M639.6 504.9 L640.6 505.8M625.4 506.5 L623.8 506.9M641.1 500.5 L641.7 501.4M639.2 504.9 L640.1 506.6M638.5 506.3 L639.8 506.8M635.7 508.7 L636.6 509.1M628.7 509.0 L627.9 509.6M623.4 504.3 L622.3 503.9M633.7 509.6 L634.8 510.3M625.4 506.2 L624.3 507.6M634.3 508.4 L635.0 509.9M637.5 493.3 L639.1 492.9M639.3 504.8 L640.6 505.6M639.8 503.0 L641.8 502.8M638.1 507.2 L638.5 508.1M636.5 507.6 L637.4 509.1M640.4 498.5 L641.7 497.3M633.2 508.7 L634.6 510.3M635.2 508.3 L636.0 509.9M628.7 508.3 L629.1 510.4M633.0 509.6 L632.8 510.4M640.3 498.5 L641.8 497.8M639.5 495.2 L640.8 495.2M626.9 507.9 L626.0 509.0M639.6 503.7 L641.2 503.6M625.9 507.1 L625.9 509.0M625.7 507.2 L625.0 508.2M639.2 496.1 L640.5 495.0M639.3 495.9 L640.1 494.5M640.5 498.5 L641.7 499.2M639.4 496.3 L640.3 495.1M640.4 504.2 L641.2 504.1M641.0 500.1 L642.1 499.2M632.8 509.7 L633.1 510.6M635.8 492.8 L636.5 491.0M637.0 508.2 L637.7 508.7M638.1 493.3 L639.4 493.5M640.1 498.8 L641.6 497.5M639.6 504.1 L641.2 503.6M639.9 496.6 L641.1 496.2M640.3 501.1 L641.9 502.3M626.9 507.6 L626.1 508.7M636.0 508.1 L636.2 509.7M640.6 500.9 L642.2 500.3M640.2 501.0 L642.0 502.0M622.4 501.4 L621.4 500.5M622.4 502.5 L621.4 501.7M622.5 498.7 L621.6 497.5M622.7 503.3 L621.7 502.6M623.4 495.9 L623.1 494.5M622.5 497.0 L622.3 495.8M633.9 490.9 L635.1 490.4M626.5 492.3 L626.9 490.9M628.1 491.1 L628.9 490.2M629.3 491.1 L630.0 489.9M623.5 495.7 L623.4 494.4M622.2 500.5 L621.3 499.4M622.7 497.8 L621.9 496.5M626.3 492.7 L626.6 491.4" fill="none" stroke="#5f9a2a" stroke-width=".6" stroke-linecap="round"/><path d="M636.8 502.2 l-0.8 -2.0M632.9 505.0 l-1.1 -1.1M634.4 502.9 l-0.8 -1.6M631.8 504.5 l-1.4 -1.1M632.0 506.1 l-1.0 -2.0M636.6 502.0 l-1.4 -1.7M635.0 505.1 l-0.7 -1.9M635.0 508.0 l-1.5 -1.0M630.8 505.9 l-0.4 -1.1M638.1 501.4 l-0.7 -1.5M634.7 504.0 l-1.1 -0.9M633.5 505.4 l-1.5 -1.3M635.1 503.8 l-1.0 -2.1M630.2 506.8 l-1.3 -0.9M630.5 506.2 l-0.9 -0.7M638.5 502.4 l-1.7 -1.4" fill="none" stroke="#5f9a2a" stroke-width=".95" stroke-linecap="round"/><circle cx="530.9" cy="447.2" r="5.3" fill="#5c972a" stroke="#5a9426" stroke-width=".5"/><path d="M533.3 444.9 A3.4 3.4 0 0 1 529.7 450.3" fill="none" stroke="#b4d690" stroke-width=".7" opacity=".85"/><path d="M529.5 443.9 l0.9 -0.6M528.2 444.1 l1.0 -1.1M532.0 449.1 l1.0 -0.0M529.1 451.1 l-1.0 0.3M529.2 451.0 l-0.7 1.1M528.3 444.5 l-0.9 0.0M530.3 446.9 l0.9 0.6M530.3 445.6 l-0.4 -1.0M531.4 447.6 l-0.5 -1.7M531.2 448.7 l1.6 0.1M530.6 448.2 l-0.9 -1.2M529.8 447.6 l-0.9 -1.1" stroke="#a2c874" stroke-width=".55" fill="none" opacity=".75"/><path d="M529.9 447.7 l1.9 -0.9M529.4 443.6 l-1.3 -0.7M532.8 448.9 l-1.6 -0.2M534.3 447.0 l1.6 1.4M533.6 447.2 l-0.8 1.8M533.1 446.5 l0.1 -1.2M530.4 446.4 l-1.4 0.4M533.7 448.6 l1.2 0.8" stroke="#467c16" stroke-width=".6" fill="none" opacity=".7"/><circle cx="546.1" cy="445.3" r="5.3" fill="#5c972a" stroke="#5a9426" stroke-width=".5"/><path d="M547.3 442.2 A3.4 3.4 0 0 1 546.3 448.7" fill="none" stroke="#b4d690" stroke-width=".7" opacity=".85"/><path d="M545.0 442.5 l-1.1 0.1M547.1 441.7 l-1.4 -0.1M546.2 445.9 l-1.0 1.1M549.4 446.8 l0.1 1.1M550.4 446.5 l-0.1 -1.8M545.6 444.8 l-0.7 1.2M549.3 448.2 l-0.7 0.7M546.5 444.3 l1.2 -0.6M544.3 444.7 l-1.0 0.1M549.9 446.2 l0.2 1.7M547.2 449.5 l1.3 -1.0M546.3 442.5 l-0.1 -1.0" stroke="#a2c874" stroke-width=".55" fill="none" opacity=".75"/><path d="M542.8 445.8 l0.7 2.1M547.6 444.0 l-1.1 1.2M543.2 447.9 l-0.9 0.8M548.6 446.9 l1.7 -0.1M543.7 445.4 l-0.0 -1.4M544.2 443.8 l-1.0 -0.9M546.9 446.8 l1.4 -0.7M544.8 444.4 l1.0 0.7" stroke="#467c16" stroke-width=".6" fill="none" opacity=".7"/><circle cx="560.3" cy="440.1" r="5.3" fill="#5c972a" stroke="#5a9426" stroke-width=".5"/><path d="M562.8 437.9 A3.4 3.4 0 0 1 559.0 443.2" fill="none" stroke="#b4d690" stroke-width=".7" opacity=".85"/><path d="M560.7 440.6 l1.0 -0.0M562.6 442.2 l-1.0 1.5M560.8 444.4 l-0.6 1.4M563.3 438.7 l1.4 -0.8M564.1 441.3 l-1.0 -0.6M561.7 443.7 l-1.6 -0.9M560.9 435.8 l-1.5 -0.7M559.1 439.1 l1.1 -0.3M561.1 435.9 l-0.6 -0.8M561.7 437.3 l0.4 0.8M559.6 440.0 l1.3 -0.6M558.1 439.9 l-1.0 -1.6" stroke="#a2c874" stroke-width=".55" fill="none" opacity=".75"/><path d="M559.7 441.8 l-1.3 -0.7M558.3 438.8 l-1.7 0.8M559.5 440.0 l1.5 -0.0M558.6 440.9 l2.0 -0.9M558.4 440.0 l1.7 1.2M561.4 442.2 l-0.9 1.2M559.6 441.0 l1.7 0.4M561.1 437.5 l0.6 1.8" stroke="#467c16" stroke-width=".6" fill="none" opacity=".7"/><circle cx="629.0" cy="428.9" r="5.3" fill="#5c972a" stroke="#5a9426" stroke-width=".5"/><path d="M631.5 426.6 A3.4 3.4 0 0 1 627.7 432.0" fill="none" stroke="#b4d690" stroke-width=".7" opacity=".85"/><path d="M632.8 427.6 l1.3 0.8M626.7 430.1 l0.7 0.8M627.7 429.4 l-0.8 0.2M631.9 430.6 l-1.2 0.7M628.8 426.9 l1.6 0.6M626.3 427.2 l-1.4 -1.3M626.7 431.6 l-1.0 1.1M628.0 427.4 l1.2 0.7M628.4 426.1 l-1.5 0.5M629.5 430.0 l-0.8 1.6M629.3 429.8 l0.7 0.5M628.6 431.7 l0.5 -1.1" stroke="#a2c874" stroke-width=".55" fill="none" opacity=".75"/><path d="M628.0 430.0 l-0.7 1.9M627.6 428.5 l1.6 1.2M628.1 425.7 l0.1 1.7M631.2 427.6 l1.2 -0.4M629.7 428.8 l-1.0 0.6M630.0 426.2 l2.0 -0.3M631.2 428.1 l2.0 -0.2M626.8 432.1 l-1.0 0.9" stroke="#467c16" stroke-width=".6" fill="none" opacity=".7"/><circle cx="625.1" cy="442.8" r="5.3" fill="#5c972a" stroke="#5a9426" stroke-width=".5"/><path d="M627.3 440.2 A3.4 3.4 0 0 1 624.2 446.0" fill="none" stroke="#b4d690" stroke-width=".7" opacity=".85"/><path d="M625.8 441.7 l1.1 -0.0M624.7 442.0 l0.0 -1.0M624.2 439.5 l0.1 -1.3M628.0 439.5 l1.1 0.9M628.4 441.9 l-1.1 0.4M626.0 442.5 l0.1 -1.8M626.1 444.3 l-0.5 1.4M622.4 445.8 l1.1 -0.5M625.8 442.3 l1.3 0.9M626.2 439.2 l1.8 -0.1M624.7 446.3 l0.8 -0.4M623.9 442.8 l0.9 1.1" stroke="#a2c874" stroke-width=".55" fill="none" opacity=".75"/><path d="M623.3 439.4 l1.1 1.2M628.2 442.7 l-1.4 -0.3M624.1 441.7 l-1.1 -1.4M622.6 444.8 l-1.4 0.9M625.8 441.6 l0.7 1.6M621.9 444.2 l0.0 1.5M627.0 443.5 l-0.6 1.5M625.2 442.1 l1.9 -0.1" stroke="#467c16" stroke-width=".6" fill="none" opacity=".7"/><circle cx="621.6" cy="459.4" r="5.3" fill="#5c972a" stroke="#5a9426" stroke-width=".5"/><path d="M623.2 456.4 A3.4 3.4 0 0 1 621.4 462.8" fill="none" stroke="#b4d690" stroke-width=".7" opacity=".85"/><path d="M625.1 457.7 l0.4 1.8M621.1 458.9 l1.1 -0.3M620.8 461.5 l-0.8 -0.5M620.1 455.9 l-1.7 -0.1M618.9 456.7 l0.5 1.1M620.7 459.6 l1.5 -0.3M623.9 461.0 l-0.9 0.5M622.9 461.4 l1.3 0.6M620.5 459.3 l0.6 -0.6M623.4 462.7 l0.2 1.3M619.5 458.6 l-1.4 0.1M620.8 459.5 l0.5 -1.1" stroke="#a2c874" stroke-width=".55" fill="none" opacity=".75"/><path d="M623.4 460.0 l0.7 -1.7M619.5 460.0 l0.3 1.8M621.1 460.0 l0.8 0.9M620.2 456.2 l0.0 -1.4M623.9 462.4 l-0.9 0.9M619.2 458.3 l-1.6 -0.4M620.9 461.5 l-1.8 0.5M619.9 460.0 l1.2 -0.1" stroke="#467c16" stroke-width=".6" fill="none" opacity=".7"/><circle cx="624.9" cy="476.3" r="5.3" fill="#5c972a" stroke="#5a9426" stroke-width=".5"/><path d="M627.1 473.8 A3.4 3.4 0 0 1 624.0 479.5" fill="none" stroke="#b4d690" stroke-width=".7" opacity=".85"/><path d="M625.3 477.6 l-0.7 -0.5M625.5 472.8 l1.6 0.4M621.8 476.3 l1.9 -0.6M621.6 478.4 l0.4 -1.9M629.1 477.1 l0.2 1.0M621.7 474.1 l1.2 -0.3M625.2 475.7 l1.1 -0.2M623.9 476.0 l0.8 0.2M622.7 474.7 l0.7 -1.6M621.5 478.1 l0.6 1.7M624.9 480.5 l-1.0 0.9M624.1 476.2 l1.3 0.7" stroke="#a2c874" stroke-width=".55" fill="none" opacity=".75"/><path d="M624.7 475.6 l-1.3 0.9M625.6 472.5 l1.5 0.9M627.4 478.2 l1.8 -0.7M624.3 476.0 l1.1 0.8M625.8 476.8 l1.5 -0.4M627.5 474.6 l0.3 -2.1M624.3 474.7 l-1.5 0.3M625.6 476.4 l-1.6 -0.7" stroke="#467c16" stroke-width=".6" fill="none" opacity=".7"/><circle cx="570.1" cy="495.7" r="5.3" fill="#5c972a" stroke="#5a9426" stroke-width=".5"/><path d="M572.2 493.0 A3.4 3.4 0 0 1 569.4 499.0" fill="none" stroke="#b4d690" stroke-width=".7" opacity=".85"/><path d="M568.8 491.6 l0.3 0.9M570.9 494.0 l-1.2 1.3M571.8 499.5 l-0.9 0.1M572.5 494.3 l1.6 0.8M570.6 492.3 l-1.1 -1.6M574.5 496.0 l-0.7 -0.9M568.7 494.5 l-1.0 -1.3M569.2 495.6 l-0.9 0.7M570.1 491.5 l0.2 -1.4M571.7 498.6 l-0.2 1.9M572.1 499.6 l1.7 0.2M568.5 498.0 l-1.0 0.6" stroke="#a2c874" stroke-width=".55" fill="none" opacity=".75"/><path d="M567.1 497.0 l-0.9 1.2M570.3 494.6 l-1.1 1.3M569.0 495.6 l0.1 -1.7M571.5 496.6 l1.4 0.5M571.2 496.6 l-1.8 -0.6M569.4 497.7 l-1.8 -0.1M571.2 495.0 l0.3 -1.7M572.4 493.9 l1.2 0.0" stroke="#467c16" stroke-width=".6" fill="none" opacity=".7"/><circle cx="558.7" cy="506.3" r="5.3" fill="#5c972a" stroke="#5a9426" stroke-width=".5"/><path d="M559.8 503.1 A3.4 3.4 0 0 1 559.0 509.6" fill="none" stroke="#b4d690" stroke-width=".7" opacity=".85"/><path d="M560.7 508.4 l0.4 0.9M556.6 506.8 l0.3 1.2M559.3 505.4 l0.3 0.8M558.8 507.2 l1.2 -0.1M559.8 506.2 l1.2 -0.8M557.5 503.4 l-0.1 1.1M558.2 505.3 l1.7 0.1M557.6 505.1 l-1.8 -0.2M558.5 507.3 l-0.9 0.5M558.2 506.8 l0.1 -1.7M557.3 507.8 l-0.1 1.9M561.0 504.1 l0.5 0.9" stroke="#a2c874" stroke-width=".55" fill="none" opacity=".75"/><path d="M558.8 505.1 l-0.6 -1.5M559.9 506.5 l1.3 -0.8M557.3 503.5 l-1.3 1.0M560.6 504.0 l-1.7 -0.2M556.8 506.9 l-0.7 -1.2M559.7 505.1 l0.3 2.2M560.6 506.5 l-1.5 -0.5M560.0 503.8 l-1.1 -0.0" stroke="#467c16" stroke-width=".6" fill="none" opacity=".7"/><circle cx="551.9" cy="519.6" r="5.3" fill="#5c972a" stroke="#5a9426" stroke-width=".5"/><path d="M553.8 516.8 A3.4 3.4 0 0 1 551.4 522.9" fill="none" stroke="#b4d690" stroke-width=".7" opacity=".85"/><path d="M549.7 522.8 l-0.3 1.4M550.7 521.4 l0.9 -0.2M550.5 520.1 l-1.1 1.6M550.5 522.2 l-1.5 0.8M550.7 520.0 l-1.2 0.5M552.6 516.9 l0.5 1.5M551.1 522.0 l0.2 1.3M552.5 517.1 l0.0 -1.7M549.3 518.0 l-1.2 0.9M552.1 518.7 l1.2 -0.5M552.6 520.5 l-0.5 0.8M550.1 520.9 l-0.8 -1.1" stroke="#a2c874" stroke-width=".55" fill="none" opacity=".75"/><path d="M554.4 518.5 l-0.9 1.9M550.7 516.0 l-0.2 -2.2M552.3 521.0 l1.1 -0.2M555.1 517.9 l0.8 1.0M555.2 517.7 l1.3 -1.4M552.0 518.0 l1.8 0.1M554.7 517.1 l-1.1 -0.1M552.8 521.4 l0.1 1.1" stroke="#467c16" stroke-width=".6" fill="none" opacity=".7"/><circle cx="639.9" cy="371.7" r="1.900" fill="#fff" stroke="#111" stroke-width="1"/><path d="M640.4 370.2 l.8 -1.600" stroke="#111" stroke-width=".8"/><circle cx="609.0" cy="496.7" r="1.900" fill="#fff" stroke="#111" stroke-width="1"/><path d="M609.5 495.2 l.8 -1.600" stroke="#111" stroke-width=".8"/><circle cx="702.0" cy="495.6" r="1.900" fill="#fff" stroke="#111" stroke-width="1"/><path d="M702.5 494.1 l.8 -1.600" stroke="#111" stroke-width=".8"/><path d="M495.200 607.300 H768.300 M495.200 616.400 H768.300 M495.200 632.700 H768.300 M615.200 648.600 H768.300 M495.200 607.300 V665 M519.200 607.300 V616.400 M546.300 607.300 V632.700 M687.200 607.300 V632.700 M586.400 616.400 V632.700 M647.600 616.400 V632.700 M736.400 616.400 V632.700 M615.200 632.700 V665 M711.900 648.600 V665 M736.400 648.600 V665" stroke="#333" stroke-width=".85" fill="none"/><text x="497.5" y="613" font-size="4.05" font-family="Liberation Sans,sans-serif" fill="#222" >Item ref</text><text x="522" y="612.7" font-size="4.05" font-family="Liberation Sans,sans-serif" fill="#222" >Quantity</text><text x="549.5" y="612.5" font-size="4.05" font-family="Liberation Sans,sans-serif" fill="#222" >Title/Name, designation, material, dimension etc</text><text x="690.5" y="613" font-size="4.05" font-family="Liberation Sans,sans-serif" fill="#222" >Article No./Reference</text><text x="497.8" y="622" font-size="4.05" font-family="Liberation Sans,sans-serif" fill="#222" >Designed by</text><text x="549" y="622" font-size="4.05" font-family="Liberation Sans,sans-serif" fill="#222" >Checked by</text><text x="596" y="622" font-size="4.05" font-family="Liberation Sans,sans-serif" fill="#222" >Approved by - date</text><text x="653" y="622.5" font-size="4.05" font-family="Liberation Sans,sans-serif" fill="#222" >Filename</text><text x="690" y="622.3" font-size="4.05" font-family="Liberation Sans,sans-serif" fill="#222" >Date</text><text x="739" y="622.3" font-size="4.05" font-family="Liberation Sans,sans-serif" fill="#222" >Scale</text><text x="666.8" y="629.6" font-size="4.3" font-family="Liberation Sans,sans-serif" fill="#222" >park.dxf</text><text x="698" y="629.8" font-size="6.6" font-family="Liberation Sans,sans-serif" fill="#222" >01/01/2024</text><text x="746.5" y="629.8" font-size="6.6" font-family="Liberation Sans,sans-serif" fill="#222" >1:250</text><text x="620.3" y="645.3" font-size="11.2" font-family="Liberation Sans,sans-serif" fill="#222" fill="#000">Park Layout</text><text x="715" y="654.5" font-size="4.05" font-family="Liberation Sans,sans-serif" fill="#222" >Edition</text><text x="740" y="654.5" font-size="4.05" font-family="Liberation Sans,sans-serif" fill="#222" >Sheet</text><circle cx="519" cy="648.700" r="6.800" fill="#fff" stroke="#000" stroke-width="3"/><path d="M522 652 l5 5" stroke="#000" stroke-width="3.200"/><path d="M515.500 651.500 L521.500 644.500 M516 648.500 L523 651" stroke="#555" stroke-width=".7"/><path d="M517 652 l4 -5" stroke="#e33" stroke-width=".6"/><text x="537.300" y="652" font-size="17.500" font-family="Liberation Sans,sans-serif" fill="#111" stroke="#fff" stroke-width=".38" paint-order="fill stroke" textLength="63.500" lengthAdjust="spacingAndGlyphs">QCAD<tspan fill="#55629c">.org</tspan></text><text x="548" y="658.800" font-size="5.300" font-family="Liberation Sans,sans-serif" fill="#7a86b8" textLength="44.500" lengthAdjust="spacingAndGlyphs">Open Source CAD</text><path d="M503 493.500 H544 M523.500 473 V514" stroke="#f25a5a" stroke-width="1"/><circle cx="462.500" cy="664.500" r="4.600" fill="none" stroke="#e8556a" stroke-width=".9"/><path d="M457 664.500 h11 M462.500 659 v11" stroke="#e8556a" stroke-width=".8"/><path d="M138.5 148 V155" stroke="#444" stroke-width="1"/><text x="138.4" y="141" text-anchor="middle" font-family="Liberation Sans,sans-serif" font-size="9.100" letter-spacing=".35" fill="#111">-60</text><path d="M202.5 148 V155" stroke="#444" stroke-width="1"/><text x="202.4" y="141" text-anchor="middle" font-family="Liberation Sans,sans-serif" font-size="9.100" letter-spacing=".35" fill="#111">-50</text><path d="M266.5 148 V155" stroke="#444" stroke-width="1"/><text x="266.4" y="141" text-anchor="middle" font-family="Liberation Sans,sans-serif" font-size="9.100" letter-spacing=".35" fill="#111">-40</text><path d="M331.5 148 V155" stroke="#444" stroke-width="1"/><text x="331.4" y="141" text-anchor="middle" font-family="Liberation Sans,sans-serif" font-size="9.100" letter-spacing=".35" fill="#111">-30</text><path d="M395.5 148 V155" stroke="#444" stroke-width="1"/><text x="395.4" y="141" text-anchor="middle" font-family="Liberation Sans,sans-serif" font-size="9.100" letter-spacing=".35" fill="#111">-20</text><path d="M459.5 148 V155" stroke="#444" stroke-width="1"/><text x="459.4" y="141" text-anchor="middle" font-family="Liberation Sans,sans-serif" font-size="9.100" letter-spacing=".35" fill="#111">-10</text><path d="M523.5 148 V155" stroke="#444" stroke-width="1"/><text x="523.4" y="141" text-anchor="middle" font-family="Liberation Sans,sans-serif" font-size="9.100" letter-spacing=".35" fill="#111">0</text><path d="M587.5 148 V155" stroke="#444" stroke-width="1"/><text x="587.4" y="141" text-anchor="middle" font-family="Liberation Sans,sans-serif" font-size="9.100" letter-spacing=".35" fill="#111">10</text><path d="M652.5 148 V155" stroke="#444" stroke-width="1"/><text x="652.4" y="141" text-anchor="middle" font-family="Liberation Sans,sans-serif" font-size="9.100" letter-spacing=".35" fill="#111">20</text><path d="M716.5 148 V155" stroke="#444" stroke-width="1"/><text x="716.4" y="141" text-anchor="middle" font-family="Liberation Sans,sans-serif" font-size="9.100" letter-spacing=".35" fill="#111">30</text><path d="M780.5 148 V155" stroke="#444" stroke-width="1"/><text x="780.4" y="141" text-anchor="middle" font-family="Liberation Sans,sans-serif" font-size="9.100" letter-spacing=".35" fill="#111">40</text><path d="M844.5 148 V155" stroke="#444" stroke-width="1"/><text x="844.4" y="141" text-anchor="middle" font-family="Liberation Sans,sans-serif" font-size="9.100" letter-spacing=".35" fill="#111">50</text><path d="M908.5 148 V155" stroke="#444" stroke-width="1"/><text x="908.4" y="141" text-anchor="middle" font-family="Liberation Sans,sans-serif" font-size="9.100" letter-spacing=".35" fill="#111">60</text><path d="M973.5 148 V155" stroke="#444" stroke-width="1"/><text x="973.4" y="141" text-anchor="middle" font-family="Liberation Sans,sans-serif" font-size="9.100" letter-spacing=".35" fill="#111">70</text><path d="M1037.5 148 V155" stroke="#444" stroke-width="1"/><text x="1037.4" y="141" text-anchor="middle" font-family="Liberation Sans,sans-serif" font-size="9.100" letter-spacing=".35" fill="#111">80</text><path d="M1101.5 148 V155" stroke="#444" stroke-width="1"/><text x="1101.4" y="141" text-anchor="middle" font-family="Liberation Sans,sans-serif" font-size="9.100" letter-spacing=".35" fill="#111">90</text><path d="M88 686.5 H95" stroke="#444" stroke-width="1"/><text transform="translate(81 685.6) rotate(-90)" text-anchor="middle" font-family="Liberation Sans,sans-serif" font-size="9.100" letter-spacing=".35" fill="#111">-30</text><path d="M88 621.5 H95" stroke="#444" stroke-width="1"/><text transform="translate(81 620.6) rotate(-90)" text-anchor="middle" font-family="Liberation Sans,sans-serif" font-size="9.100" letter-spacing=".35" fill="#111">-20</text><path d="M88 557.5 H95" stroke="#444" stroke-width="1"/><text transform="translate(81 556.6) rotate(-90)" text-anchor="middle" font-family="Liberation Sans,sans-serif" font-size="9.100" letter-spacing=".35" fill="#111">-10</text><path d="M88 493.5 H95" stroke="#444" stroke-width="1"/><text transform="translate(81 492.6) rotate(-90)" text-anchor="middle" font-family="Liberation Sans,sans-serif" font-size="9.100" letter-spacing=".35" fill="#111">0</text><path d="M88 429.5 H95" stroke="#444" stroke-width="1"/><text transform="translate(81 428.6) rotate(-90)" text-anchor="middle" font-family="Liberation Sans,sans-serif" font-size="9.100" letter-spacing=".35" fill="#111">10</text><path d="M88 365.5 H95" stroke="#444" stroke-width="1"/><text transform="translate(81 364.6) rotate(-90)" text-anchor="middle" font-family="Liberation Sans,sans-serif" font-size="9.100" letter-spacing=".35" fill="#111">20</text><path d="M88 300.5 H95" stroke="#444" stroke-width="1"/><text transform="translate(81 299.6) rotate(-90)" text-anchor="middle" font-family="Liberation Sans,sans-serif" font-size="9.100" letter-spacing=".35" fill="#111">30</text><path d="M88 236.5 H95" stroke="#444" stroke-width="1"/><text transform="translate(81 235.6) rotate(-90)" text-anchor="middle" font-family="Liberation Sans,sans-serif" font-size="9.100" letter-spacing=".35" fill="#111">40</text><path d="M88 172.5 H95" stroke="#444" stroke-width="1"/><text transform="translate(81 171.6) rotate(-90)" text-anchor="middle" font-family="Liberation Sans,sans-serif" font-size="9.100" letter-spacing=".35" fill="#111">50</text><path d="M191.500 145 h11 l-5.500 6.200 z" fill="#000"/><path d="M85 160.500 v11 l6.200 -5.500 z" fill="#000"/><rect x="1138.200" y="155" width="15" height="577" fill="#fafafa"/><rect x="1153.200" y="132" width=".8" height="616" fill="#f2f2f2"/><rect x="1143.200" y="312" width="7.400" height="263" rx="3.700" fill="#7f7f7f"/><rect x="72" y="732" width="1011" height="16" fill="#fafafa"/><rect x="127" y="737.600" width="926" height="7.300" rx="3.650" fill="#7f7f7f"/><text x="1153.500" y="745" text-anchor="end" font-family="Liberation Sans,sans-serif" font-size="13" fill="#000">10 &lt; 100</text></svg>
<div id="rpanel"></div><div class="pbar" style="top:130px"></div><div class="pbar" style="top:332px"></div><div class="ptitle" style="top:108px"><span>Lista de bloques</span></div><svg class="ic" style="left:1157px;top:111px" width="14" height="14" viewBox="0 0 14 14" ><circle cx="7" cy="7" r="6.900" fill="#6e6e6e"/><path d="M4 4 L10 10 M10 4 L4 10" stroke="#e6e6e6" stroke-width="2" stroke-linecap="butt"/></svg><svg class="ic" style="left:1175px;top:111px" width="14" height="14" viewBox="0 0 14 14" ><circle cx="7" cy="7" r="6.900" fill="#6e6e6e"/><rect x="5.600" y="3.800" width="5.200" height="4" fill="none" stroke="#e8e8e8" stroke-width="1.100"/><rect x="3.300" y="6.100" width="5.400" height="4.300" fill="#6e6e6e" stroke="#e8e8e8" stroke-width="1.100"/></svg><div class="pbtn" style="left:1156.5px;top:131px;width:35.5px"></div><div class="pbtn" style="left:1194px;top:131px;width:35.5px"></div><div class="pbtn" style="left:1231.5px;top:131px;width:35.5px"></div><div class="pbtn" style="left:1269px;top:131px;width:35.5px"></div><div class="pbtn" style="left:1306.5px;top:131px;width:35.5px"></div><div class="pbtn" style="left:1344px;top:131px;width:35.5px"></div><div class="pbtn" style="left:1381.5px;top:131px;width:35.5px"></div><div class="pbtn" style="left:1419px;top:131px;width:35.2px"></div><svg class="ic" style="left:1166.75px;top:137.7px" width="15" height="11" viewBox="0 0 15 11" ><g opacity="1"><path d="M.2 5.500 Q1.200 2.600 3.600 1.300 Q5.600 .2 7.800 .3 Q10.500 .4 12.300 1.900 Q14 3.300 14.800 5.300 Q13.800 7.300 12.300 8.600 Q10.300 10.400 7.400 10.400 Q5.800 10.400 4.500 9.800 L3.300 10.300 L3.500 9.200 Q1.300 7.700 .2 5.500 Z" fill="#000"/><ellipse cx="7.400" cy="5.900" rx="4.300" ry="3.100" fill="#fff"/><circle cx="7.500" cy="4.400" r="2.750" fill="#000"/><circle cx="6.700" cy="3.600" r=".6" fill="#fff"/></g></svg><svg class="ic" style="left:1204.25px;top:137.7px" width="15" height="11" viewBox="0 0 15 11" ><g opacity="0.75"><path d="M.2 5.500 Q1.200 2.600 3.600 1.300 Q5.600 .2 7.800 .3 Q10.500 .4 12.300 1.900 Q14 3.300 14.800 5.300 Q13.800 7.300 12.300 8.600 Q10.300 10.400 7.400 10.400 Q5.800 10.400 4.500 9.800 L3.300 10.300 L3.500 9.200 Q1.300 7.700 .2 5.500 Z" fill="#8a8a8a"/><ellipse cx="7.400" cy="5.900" rx="4.300" ry="3.100" fill="#fff"/><circle cx="7.500" cy="4.400" r="2.750" fill="#8a8a8a"/><circle cx="6.700" cy="3.600" r=".6" fill="#fff"/></g></svg><svg class="ic" style="left:1242.25px;top:136.2px" width="14" height="14" viewBox="0 0 14 14" ><path d="M7 1 v12 M1 7 h12" stroke="#e8101a" stroke-width="2.800"/></svg><svg class="ic" style="left:1279.75px;top:136.2px" width="14" height="14" viewBox="0 0 14 14" ><path d="M1 7 h12" stroke="#e8101a" stroke-width="2.800"/></svg><div class="ab" style="left:1316.95px;top:136px">a<i></i>b</div><svg class="ic" style="left:1353.75px;top:135px" width="16" height="16" viewBox="0 0 16 16" style="overflow:visible"><g transform="rotate(47.500 8 8)"><rect x="6.450" y="-1.800" width="3.100" height="3" rx=".9" fill="#e8202a"/><rect x="6.450" y="1.200" width="3.100" height="11.800" fill="#dda548" stroke="#8e6414" stroke-width=".55"/><path d="M6.450 13 L8 17.200 L9.550 13 Z" fill="#e8cfa0" stroke="#8a6a30" stroke-width=".35"/><path d="M7.450 15.800 L8 17.200 L8.550 15.800 Z" fill="#333"/></g></svg><svg class="ic" style="left:1393.25px;top:136px" width="12" height="15" viewBox="0 0 12 15" ><rect x=".5" y=".5" width="11" height="14" fill="#e8e8ee" stroke="#c8c8c8" stroke-width=".6"/><path d="M3 3 q4.500 -.5 4.500 3.500 v3 h2.300 l-3.300 4 l-3.300 -4 h2.300 v-3 q0 -2 -2.500 -2 z" fill="#1a4af0"/></svg><svg class="ic" style="left:1431.25px;top:138px" width="11" height="11" viewBox="0 0 11 11" ><rect x=".8" y=".8" width="9.400" height="9.400" rx="1" fill="#e8845a" stroke="#e0382c" stroke-width="1"/><path d="M3.200 3.200 L7.800 7.800 M7.800 3.200 L3.200 7.800" stroke="#fff" stroke-width="1.500"/></svg><div id="blist"><div class="row" style="top:0px"><span style="left:50px">Model (*Model_Space)</span></div><div class="row" style="top:20px"><span style="left:50px">Layout1 (*Paper_Space)</span></div><div class="row" style="top:40px"><span style="left:50px">Árbol A</span></div><div class="row" style="top:60px"><span style="left:50px">Árbol B</span></div><div class="row" style="top:80px"><span style="left:50px">Banco</span></div><div class="row sel" style="top:100px"><span style="left:50px">Borde</span></div><div class="row" style="top:120px"><span style="left:50px">Papelera</span></div><div class="row" style="top:140px"><span style="left:50px">Título</span></div><div class="vtrack"></div><div class="vthumb"></div></div><div id="blist2"><svg class="ic" style="left:5.9px;top:5px" width="15" height="11" viewBox="0 0 15 11" ><g opacity="1"><path d="M.2 5.500 Q1.200 2.600 3.600 1.300 Q5.600 .2 7.800 .3 Q10.500 .4 12.300 1.900 Q14 3.300 14.800 5.300 Q13.800 7.300 12.300 8.600 Q10.300 10.400 7.400 10.400 Q5.800 10.400 4.500 9.800 L3.300 10.300 L3.500 9.200 Q1.300 7.700 .2 5.500 Z" fill="#000"/><ellipse cx="7.400" cy="5.900" rx="4.300" ry="3.100" fill="#fff"/><circle cx="7.500" cy="4.400" r="2.750" fill="#000"/><circle cx="6.700" cy="3.600" r=".6" fill="#fff"/></g></svg><svg class="ic" style="left:5.9px;top:25px" width="15" height="11" viewBox="0 0 15 11" ><g opacity="1"><path d="M.2 5.500 Q1.200 2.600 3.600 1.300 Q5.600 .2 7.800 .3 Q10.500 .4 12.300 1.900 Q14 3.300 14.800 5.300 Q13.800 7.300 12.300 8.600 Q10.300 10.400 7.400 10.400 Q5.800 10.400 4.500 9.800 L3.300 10.300 L3.500 9.200 Q1.300 7.700 .2 5.500 Z" fill="#000"/><ellipse cx="7.400" cy="5.900" rx="4.300" ry="3.100" fill="#fff"/><circle cx="7.500" cy="4.400" r="2.750" fill="#000"/><circle cx="6.700" cy="3.600" r=".6" fill="#fff"/></g></svg><svg class="ic" style="left:5.9px;top:45px" width="15" height="11" viewBox="0 0 15 11" ><g opacity="1"><path d="M.2 5.500 Q1.200 2.600 3.600 1.300 Q5.600 .2 7.800 .3 Q10.500 .4 12.300 1.900 Q14 3.300 14.800 5.300 Q13.800 7.300 12.300 8.600 Q10.300 10.400 7.400 10.400 Q5.800 10.400 4.500 9.800 L3.300 10.300 L3.500 9.200 Q1.300 7.700 .2 5.500 Z" fill="#000"/><ellipse cx="7.400" cy="5.900" rx="4.300" ry="3.100" fill="#fff"/><circle cx="7.500" cy="4.400" r="2.750" fill="#000"/><circle cx="6.700" cy="3.600" r=".6" fill="#fff"/></g></svg><svg class="ic" style="left:5.9px;top:65px" width="15" height="11" viewBox="0 0 15 11" ><g opacity="1"><path d="M.2 5.500 Q1.200 2.600 3.600 1.300 Q5.600 .2 7.800 .3 Q10.500 .4 12.300 1.900 Q14 3.300 14.800 5.300 Q13.800 7.300 12.300 8.600 Q10.300 10.400 7.400 10.400 Q5.800 10.400 4.500 9.800 L3.300 10.300 L3.500 9.200 Q1.300 7.700 .2 5.500 Z" fill="#000"/><ellipse cx="7.400" cy="5.900" rx="4.300" ry="3.100" fill="#fff"/><circle cx="7.500" cy="4.400" r="2.750" fill="#000"/><circle cx="6.700" cy="3.600" r=".6" fill="#fff"/></g></svg><svg class="ic" style="left:5.9px;top:85px" width="15" height="11" viewBox="0 0 15 11" ><g opacity="1"><path d="M.2 5.500 Q1.200 2.600 3.600 1.300 Q5.600 .2 7.800 .3 Q10.500 .4 12.300 1.900 Q14 3.300 14.800 5.300 Q13.800 7.300 12.300 8.600 Q10.300 10.400 7.400 10.400 Q5.800 10.400 4.500 9.800 L3.300 10.300 L3.500 9.200 Q1.300 7.700 .2 5.500 Z" fill="#000"/><ellipse cx="7.400" cy="5.900" rx="4.300" ry="3.100" fill="#fff"/><circle cx="7.500" cy="4.400" r="2.750" fill="#000"/><circle cx="6.700" cy="3.600" r=".6" fill="#fff"/></g></svg><svg class="ic" style="left:5.9px;top:105px" width="15" height="11" viewBox="0 0 15 11" ><g opacity="1"><path d="M.2 5.500 Q1.200 2.600 3.600 1.300 Q5.600 .2 7.800 .3 Q10.500 .4 12.300 1.900 Q14 3.300 14.800 5.300 Q13.800 7.300 12.300 8.600 Q10.300 10.400 7.400 10.400 Q5.800 10.400 4.500 9.800 L3.300 10.300 L3.500 9.200 Q1.300 7.700 .2 5.500 Z" fill="#2a3548"/><ellipse cx="7.400" cy="5.900" rx="4.300" ry="3.100" fill="#fff"/><circle cx="7.500" cy="4.400" r="2.750" fill="#2a3548"/><circle cx="6.700" cy="3.600" r=".6" fill="#fff"/></g></svg><svg class="ic" style="left:5.9px;top:125px" width="15" height="11" viewBox="0 0 15 11" ><g opacity="1"><path d="M.2 5.500 Q1.200 2.600 3.600 1.300 Q5.600 .2 7.800 .3 Q10.500 .4 12.300 1.900 Q14 3.300 14.800 5.300 Q13.800 7.300 12.300 8.600 Q10.300 10.400 7.400 10.400 Q5.800 10.400 4.500 9.800 L3.300 10.300 L3.500 9.200 Q1.300 7.700 .2 5.500 Z" fill="#000"/><ellipse cx="7.400" cy="5.900" rx="4.300" ry="3.100" fill="#fff"/><circle cx="7.500" cy="4.400" r="2.750" fill="#000"/><circle cx="6.700" cy="3.600" r=".6" fill="#fff"/></g></svg><svg class="ic" style="left:5.9px;top:145px" width="15" height="11" viewBox="0 0 15 11" ><g opacity="1"><path d="M.2 5.500 Q1.200 2.600 3.600 1.300 Q5.600 .2 7.800 .3 Q10.500 .4 12.300 1.900 Q14 3.300 14.800 5.300 Q13.800 7.300 12.300 8.600 Q10.300 10.400 7.400 10.400 Q5.800 10.400 4.500 9.800 L3.300 10.300 L3.500 9.200 Q1.300 7.700 .2 5.500 Z" fill="#000"/><ellipse cx="7.400" cy="5.900" rx="4.300" ry="3.100" fill="#fff"/><circle cx="7.500" cy="4.400" r="2.750" fill="#000"/><circle cx="6.700" cy="3.600" r=".6" fill="#fff"/></g></svg><svg class="ic" style="left:27.6px;top:2.7px" width="16" height="16" viewBox="0 0 16 16" style="overflow:visible"><g transform="rotate(47.500 8 8)"><rect x="6.450" y="-1.800" width="3.100" height="3" rx=".9" fill="#e8202a"/><rect x="6.450" y="1.200" width="3.100" height="11.800" fill="#dda548" stroke="#8e6414" stroke-width=".55"/><path d="M6.450 13 L8 17.200 L9.550 13 Z" fill="#e8cfa0" stroke="#8a6a30" stroke-width=".35"/><path d="M7.450 15.800 L8 17.200 L8.550 15.800 Z" fill="#333"/></g></svg></div><div class="ptitle" style="top:309px;height:23.500px"><span style="top:4.200px">Lista de capas</span></div><svg class="ic" style="left:1157px;top:313px" width="14" height="14" viewBox="0 0 14 14" ><circle cx="7" cy="7" r="6.900" fill="#6e6e6e"/><path d="M4 4 L10 10 M10 4 L4 10" stroke="#e6e6e6" stroke-width="2" stroke-linecap="butt"/></svg><svg class="ic" style="left:1175px;top:313px" width="14" height="14" viewBox="0 0 14 14" ><circle cx="7" cy="7" r="6.900" fill="#6e6e6e"/><rect x="5.600" y="3.800" width="5.200" height="4" fill="none" stroke="#e8e8e8" stroke-width="1.100"/><rect x="3.300" y="6.100" width="5.400" height="4.300" fill="#6e6e6e" stroke="#e8e8e8" stroke-width="1.100"/></svg><div class="pbtn" style="left:1156.2px;top:333px;width:57.85px"></div><div class="pbtn" style="left:1216.05px;top:333px;width:57.85px"></div><div class="pbtn" style="left:1275.9px;top:333px;width:57.85px"></div><div class="pbtn" style="left:1335.75px;top:333px;width:57.85px"></div><div class="pbtn" style="left:1395.6px;top:333px;width:57.85px"></div><svg class="ic" style="left:1177.62px;top:339.7px" width="15" height="11" viewBox="0 0 15 11" ><g opacity="1"><path d="M.2 5.500 Q1.200 2.600 3.600 1.300 Q5.600 .2 7.800 .3 Q10.500 .4 12.300 1.900 Q14 3.300 14.800 5.300 Q13.800 7.300 12.300 8.600 Q10.300 10.400 7.400 10.400 Q5.800 10.400 4.500 9.800 L3.300 10.300 L3.500 9.200 Q1.300 7.700 .2 5.500 Z" fill="#000"/><ellipse cx="7.400" cy="5.900" rx="4.300" ry="3.100" fill="#fff"/><circle cx="7.500" cy="4.400" r="2.750" fill="#000"/><circle cx="6.700" cy="3.600" r=".6" fill="#fff"/></g></svg><svg class="ic" style="left:1237.47px;top:339.7px" width="15" height="11" viewBox="0 0 15 11" ><g opacity="0.75"><path d="M.2 5.500 Q1.200 2.600 3.600 1.300 Q5.600 .2 7.800 .3 Q10.500 .4 12.300 1.900 Q14 3.300 14.800 5.300 Q13.800 7.300 12.300 8.600 Q10.300 10.400 7.400 10.400 Q5.800 10.400 4.500 9.800 L3.300 10.300 L3.500 9.200 Q1.300 7.700 .2 5.500 Z" fill="#8a8a8a"/><ellipse cx="7.400" cy="5.900" rx="4.300" ry="3.100" fill="#fff"/><circle cx="7.500" cy="4.400" r="2.750" fill="#8a8a8a"/><circle cx="6.700" cy="3.600" r=".6" fill="#fff"/></g></svg><svg class="ic" style="left:1297.83px;top:338.2px" width="14" height="14" viewBox="0 0 14 14" ><path d="M7 1 v12 M1 7 h12" stroke="#e8101a" stroke-width="2.800"/></svg><svg class="ic" style="left:1357.67px;top:338.2px" width="14" height="14" viewBox="0 0 14 14" ><path d="M1 7 h12" stroke="#e8101a" stroke-width="2.800"/></svg><svg class="ic" style="left:1416.53px;top:337px" width="16" height="16" viewBox="0 0 16 16" style="overflow:visible"><g transform="rotate(47.500 8 8)"><rect x="6.450" y="-1.800" width="3.100" height="3" rx=".9" fill="#e8202a"/><rect x="6.450" y="1.200" width="3.100" height="11.800" fill="#dda548" stroke="#8e6414" stroke-width=".55"/><path d="M6.450 13 L8 17.200 L9.550 13 Z" fill="#e8cfa0" stroke="#8a6a30" stroke-width=".35"/><path d="M7.450 15.800 L8 17.200 L8.550 15.800 Z" fill="#333"/></g></svg><div id="llist"><div class="row" style="top:0.5px"><i class="sw" style="background:#fff"></i><span style="left:27.500px">0</span></div><div class="row" style="top:20.5px"><i class="sw" style="background:#000"></i><span style="left:27.500px">Borde</span></div><div class="row" style="top:40.5px"><i class="sw" style="background:#d9a95a"></i><span style="left:27.500px">Caminos</span></div><div class="row" style="top:60.5px"><i class="sw" style="background:#c0c0c0"></i><span style="left:27.500px">Instalaciones</span></div><div class="row" style="top:80.5px"><i class="sw" style="background:#66a030"></i><span style="left:27.500px">Plantas</span></div><div class="row" style="top:100.5px"><i class="sw" style="background:#000"></i><span style="left:27.500px">Título</span></div></div><svg class="ic" style="left:1415px;top:363.7px" width="15" height="11" viewBox="0 0 15 11" ><g opacity="1"><path d="M.2 5.500 Q1.200 2.600 3.600 1.300 Q5.600 .2 7.800 .3 Q10.500 .4 12.300 1.900 Q14 3.300 14.800 5.300 Q13.800 7.300 12.300 8.600 Q10.300 10.400 7.400 10.400 Q5.800 10.400 4.500 9.800 L3.300 10.300 L3.500 9.200 Q1.300 7.700 .2 5.500 Z" fill="#000"/><ellipse cx="7.400" cy="5.900" rx="4.300" ry="3.100" fill="#fff"/><circle cx="7.500" cy="4.400" r="2.750" fill="#000"/><circle cx="6.700" cy="3.600" r=".6" fill="#fff"/></g></svg><svg class="ic" style="left:1439px;top:362.2px" width="12" height="14" viewBox="0 0 12 14" ><g opacity=".72"><path d="M3 6.800 v-2.500 q0 -3.200 3 -3.200 q3 0 3 3.200 v2.500" fill="none" stroke="#9a9a9a" stroke-width="1.600"/><rect x="1.100" y="6.300" width="9.800" height="7.400" fill="#9a9a9a"/></g></svg><svg class="ic" style="left:1415px;top:383.7px" width="15" height="11" viewBox="0 0 15 11" ><g opacity="1"><path d="M.2 5.500 Q1.200 2.600 3.600 1.300 Q5.600 .2 7.800 .3 Q10.500 .4 12.300 1.900 Q14 3.300 14.800 5.300 Q13.800 7.300 12.300 8.600 Q10.300 10.400 7.400 10.400 Q5.800 10.400 4.500 9.800 L3.300 10.300 L3.500 9.200 Q1.300 7.700 .2 5.500 Z" fill="#000"/><ellipse cx="7.400" cy="5.900" rx="4.300" ry="3.100" fill="#fff"/><circle cx="7.500" cy="4.400" r="2.750" fill="#000"/><circle cx="6.700" cy="3.600" r=".6" fill="#fff"/></g></svg><svg class="ic" style="left:1439px;top:382.2px" width="12" height="14" viewBox="0 0 12 14" ><g opacity=".72"><path d="M3 6.800 v-2.500 q0 -3.200 3 -3.200 q3 0 3 3.200 v2.500" fill="none" stroke="#9a9a9a" stroke-width="1.600"/><rect x="1.100" y="6.300" width="9.800" height="7.400" fill="#9a9a9a"/></g></svg><svg class="ic" style="left:1415px;top:403.7px" width="15" height="11" viewBox="0 0 15 11" ><g opacity="1"><path d="M.2 5.500 Q1.200 2.600 3.600 1.300 Q5.600 .2 7.800 .3 Q10.500 .4 12.300 1.900 Q14 3.300 14.800 5.300 Q13.800 7.300 12.300 8.600 Q10.300 10.400 7.400 10.400 Q5.800 10.400 4.500 9.800 L3.300 10.300 L3.500 9.200 Q1.300 7.700 .2 5.500 Z" fill="#000"/><ellipse cx="7.400" cy="5.900" rx="4.300" ry="3.100" fill="#fff"/><circle cx="7.500" cy="4.400" r="2.750" fill="#000"/><circle cx="6.700" cy="3.600" r=".6" fill="#fff"/></g></svg><svg class="ic" style="left:1439px;top:402.2px" width="12" height="14" viewBox="0 0 12 14" ><g opacity=".72"><path d="M3 6.800 v-2.500 q0 -3.200 3 -3.200 q3 0 3 3.200 v2.500" fill="none" stroke="#9a9a9a" stroke-width="1.600"/><rect x="1.100" y="6.300" width="9.800" height="7.400" fill="#9a9a9a"/></g></svg><svg class="ic" style="left:1415px;top:423.7px" width="15" height="11" viewBox="0 0 15 11" ><g opacity="1"><path d="M.2 5.500 Q1.200 2.600 3.600 1.300 Q5.600 .2 7.800 .3 Q10.500 .4 12.300 1.900 Q14 3.300 14.800 5.300 Q13.800 7.300 12.300 8.600 Q10.300 10.400 7.400 10.400 Q5.800 10.400 4.500 9.800 L3.300 10.300 L3.500 9.200 Q1.300 7.700 .2 5.500 Z" fill="#000"/><ellipse cx="7.400" cy="5.900" rx="4.300" ry="3.100" fill="#fff"/><circle cx="7.500" cy="4.400" r="2.750" fill="#000"/><circle cx="6.700" cy="3.600" r=".6" fill="#fff"/></g></svg><svg class="ic" style="left:1439px;top:422.2px" width="12" height="14" viewBox="0 0 12 14" ><g opacity=".72"><path d="M3 6.800 v-2.500 q0 -3.200 3 -3.200 q3 0 3 3.200 v2.500" fill="none" stroke="#9a9a9a" stroke-width="1.600"/><rect x="1.100" y="6.300" width="9.800" height="7.400" fill="#9a9a9a"/></g></svg><svg class="ic" style="left:1415px;top:443.7px" width="15" height="11" viewBox="0 0 15 11" ><g opacity="1"><path d="M.2 5.500 Q1.200 2.600 3.600 1.300 Q5.600 .2 7.800 .3 Q10.500 .4 12.300 1.900 Q14 3.300 14.800 5.300 Q13.800 7.300 12.300 8.600 Q10.300 10.400 7.400 10.400 Q5.800 10.400 4.500 9.800 L3.300 10.300 L3.500 9.200 Q1.300 7.700 .2 5.500 Z" fill="#000"/><ellipse cx="7.400" cy="5.900" rx="4.300" ry="3.100" fill="#fff"/><circle cx="7.500" cy="4.400" r="2.750" fill="#000"/><circle cx="6.700" cy="3.600" r=".6" fill="#fff"/></g></svg><svg class="ic" style="left:1439px;top:442.2px" width="12" height="14" viewBox="0 0 12 14" ><g opacity=".72"><path d="M3 6.800 v-2.500 q0 -3.200 3 -3.200 q3 0 3 3.200 v2.500" fill="none" stroke="#9a9a9a" stroke-width="1.600"/><rect x="1.100" y="6.300" width="9.800" height="7.400" fill="#9a9a9a"/></g></svg><svg class="ic" style="left:1415px;top:463.7px" width="15" height="11" viewBox="0 0 15 11" ><g opacity="1"><path d="M.2 5.500 Q1.200 2.600 3.600 1.300 Q5.600 .2 7.800 .3 Q10.500 .4 12.300 1.900 Q14 3.300 14.800 5.300 Q13.800 7.300 12.300 8.600 Q10.300 10.400 7.400 10.400 Q5.800 10.400 4.500 9.800 L3.300 10.300 L3.500 9.200 Q1.300 7.700 .2 5.500 Z" fill="#000"/><ellipse cx="7.400" cy="5.900" rx="4.300" ry="3.100" fill="#fff"/><circle cx="7.500" cy="4.400" r="2.750" fill="#000"/><circle cx="6.700" cy="3.600" r=".6" fill="#fff"/></g></svg><svg class="ic" style="left:1439px;top:462.2px" width="12" height="14" viewBox="0 0 12 14" ><g opacity=".72"><path d="M3 6.800 v-2.500 q0 -3.200 3 -3.200 q3 0 3 3.200 v2.500" fill="none" stroke="#9a9a9a" stroke-width="1.600"/><rect x="1.100" y="6.300" width="9.800" height="7.400" fill="#9a9a9a"/></g></svg><svg class="ic" style="left:1393px;top:380.5px" width="16" height="16" viewBox="0 0 16 16" style="overflow:visible"><g transform="rotate(47.500 8 8)"><rect x="6.450" y="-1.800" width="3.100" height="3" rx=".9" fill="#e8202a"/><rect x="6.450" y="1.200" width="3.100" height="11.800" fill="#dda548" stroke="#8e6414" stroke-width=".55"/><path d="M6.450 13 L8 17.200 L9.550 13 Z" fill="#e8cfa0" stroke="#8a6a30" stroke-width=".35"/><path d="M7.450 15.800 L8 17.200 L8.550 15.800 Z" fill="#333"/></g></svg>
<div id="fr"></div><div class="gd2" style="left:1461.8px;top:116.500px"></div><div class="gd2" style="left:1467.85px;top:116.500px"></div><div class="gd2" style="left:1473.9px;top:116.500px"></div><div class="gd2" style="left:1479.95px;top:116.500px"></div><div class="gd2" style="left:1486px;top:116.500px"></div><div class="hl" style="left:1456.5px;top:120.5px;width:42.2px;height:41.5px"></div><svg class="ic" style="left:1463px;top:127px" width="28" height="28" viewBox="0 0 28 28" ><rect x=".5" y=".5" width="27" height="27" fill="#fff" stroke="#111" stroke-width="1"/><rect x=".5" y=".5" width="27" height="4.500" fill="#000"/><rect x="1.200" y="1.200" width="3" height="3" fill="#fff"/><path d="M7.500 12.500 l9 -3 v10.500 l-9 3 z" fill="#ddd" stroke="#555" stroke-width=".7"/><path d="M9.500 12 l9 -3 v10.500 l-9 3 z" fill="#eee" stroke="#555" stroke-width=".7"/><path d="M12 11.500 l9 -3 v10.500 l-9 3 z" fill="#fff" stroke="#555" stroke-width=".7"/><path d="M14 18.500 l5 -6 v5 z" fill="none" stroke="#e02020" stroke-width=".9"/></svg><div class="hl" style="left:1456.5px;top:167.2px;width:42.2px;height:42.2px"></div><svg class="ic" style="left:1463px;top:173.7px" width="28" height="28" viewBox="0 0 28 28" ><rect x=".5" y=".5" width="27" height="27" fill="#fff" stroke="#111" stroke-width="1"/><rect x=".5" y=".5" width="27" height="4.500" fill="#000"/><rect x="1.200" y="1.200" width="3" height="3" fill="#fff"/><rect x="7" y="10.500" width="10" height="8" fill="#f3e9b8" stroke="#8a8468" stroke-width=".8"/><circle cx="16" cy="18" r="4.400" fill="#f3e9b8" fill-opacity=".7" stroke="#8a8468" stroke-width=".8"/></svg><svg class="ic" style="left:1463px;top:220.6px" width="28" height="28" viewBox="0 0 28 28" ><rect x=".5" y=".5" width="27" height="27" fill="#fff" stroke="#111" stroke-width="1"/><rect x=".5" y=".5" width="27" height="4.500" fill="#000"/><rect x="1.200" y="1.200" width="3" height="3" fill="#fff"/><rect x="6" y="10.500" width="16" height="10.500" rx="2" fill="#f4f4f6" stroke="#c4d0e4" stroke-width="1"/></svg><div class="hdot" style="left:1458px;top:262px;width:40px"></div><svg class="ic" style="left:1463px;top:277px" width="28" height="28" viewBox="0 0 28 28" ><rect x=".5" y=".5" width="27" height="27" fill="#fff" stroke="#111" stroke-width="1"/><rect x=".5" y=".5" width="27" height="4.500" fill="#000"/><rect x="1.200" y="1.200" width="3" height="3" fill="#fff"/><path d="M3.500 9 h3.500 v2.600 h-3.500 z M3.500 14.700 h3.500 v2.600 h-3.500 z M3.500 20.400 h3.500 v2.600 h-3.500 z" fill="#000"/><path d="M9.500 9 h14 v2.600 h-14 z M9.500 14.700 h14 v2.600 h-14 z M9.500 20.400 h14 v2.600 h-14 z" fill="#fff" stroke="#333" stroke-width=".7"/></svg><svg class="ic" style="left:1463px;top:323px" width="28" height="28" viewBox="0 0 28 28" ><rect x=".5" y=".5" width="27" height="27" fill="#fff" stroke="#111" stroke-width="1"/><rect x=".5" y=".5" width="27" height="4.500" fill="#000"/><rect x="1.200" y="1.200" width="3" height="3" fill="#fff"/><path d="M7 8.500 h14 l-5.500 7 v7.500 h-3 v-7.500 z" fill="url(#funnel)" stroke="#777" stroke-width=".7"/></svg><svg class="ic" style="left:1463px;top:369px" width="28" height="28" viewBox="0 0 28 28" ><rect x=".5" y=".5" width="27" height="27" fill="#fff" stroke="#111" stroke-width="1"/><rect x=".5" y=".5" width="27" height="4.500" fill="#000"/><rect x="1.200" y="1.200" width="3" height="3" fill="#fff"/><path d="M6.500 9.500 l5.500 3 v6 l-5.500 3 z" fill="#eee" stroke="#444" stroke-width=".8"/><rect x="12" y="12" width="9" height="7" rx="1" fill="#888" stroke="#444" stroke-width=".6"/><path d="M4 15.500 h21" stroke="#f08080" stroke-width=".8" stroke-dasharray="2 1"/></svg><div class="hdot" style="left:1458px;top:410.500px;width:40px"></div><div class="hl" style="left:1456.5px;top:417.8px;width:42.2px;height:42.5px"></div><svg class="ic" style="left:1463px;top:425px" width="28" height="28" viewBox="0 0 28 28" ><rect x=".5" y=".5" width="27" height="27" fill="#fff" stroke="#111" stroke-width="1"/><rect x=".5" y=".5" width="27" height="4.500" fill="#000"/><rect x="1.200" y="1.200" width="3" height="3" fill="#fff"/><text x="3.500" y="10.500" font-family="Liberation Sans,sans-serif" font-size="2.800" fill="#555">Comando: line</text><text x="3.500" y="13.700" font-family="Liberation Sans,sans-serif" font-size="2.800" fill="#555">Start point: 0,0</text><text x="3.500" y="16.900" font-family="Liberation Sans,sans-serif" font-size="2.800" fill="#555">Comando: 10,20</text><text x="3.500" y="20.100" font-family="Liberation Sans,sans-serif" font-size="2.800" fill="#555">Comando: circle</text><path d="M.5 22.500 h27" stroke="#333" stroke-width=".6"/><text x="3" y="26.300" font-family="Liberation Sans,sans-serif" font-size="3.200" fill="#222">c    command</text></svg><svg class="ic" style="left:1463px;top:472px" width="28" height="28" viewBox="0 0 28 28" ><rect x=".5" y=".5" width="27" height="27" fill="#fff" stroke="#111" stroke-width="1"/><rect x=".5" y=".5" width="27" height="4.500" fill="#000"/><rect x="1.200" y="1.200" width="3" height="3" fill="#fff"/><rect x="7" y="8.500" width="14" height="16.500" rx="1" fill="#c8892c" stroke="#8a5a10" stroke-width=".6"/><rect x="8.800" y="10.500" width="10.400" height="13" fill="#f4f4f4"/><rect x="11" y="7.200" width="6" height="3" rx=".6" fill="#999" stroke="#666" stroke-width=".4"/><path d="M10.500 14 h7 M10.500 16 h7 M10.500 18 h7 M10.500 20 h5" stroke="#c4c4c4" stroke-width=".7"/><path d="M19.200 20.500 v3 h-3 z" fill="#aaa"/></svg>
<div id="ring"></div><svg class="ic" style="left:148px;top:93px" width="26" height="36" viewBox="0 0 26 36"><path d="M4.200 3.600 V26 L9.200 21.300 L13.300 30.800 L17.300 29.100 L13.300 19.800 H19.800 Z" fill="#fff" stroke="#000" stroke-width="1.300" stroke-linejoin="miter"/></svg>
</body></html>
